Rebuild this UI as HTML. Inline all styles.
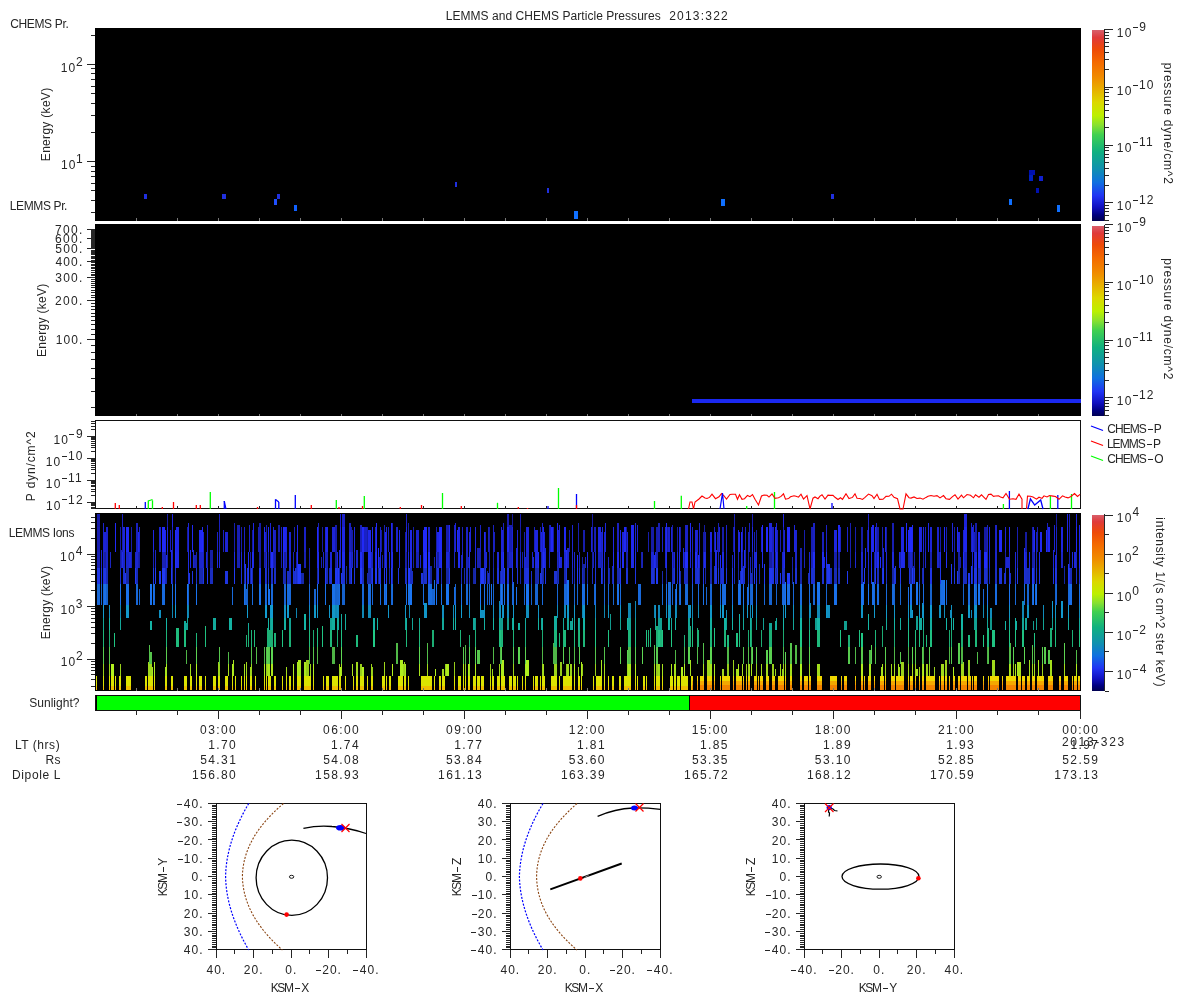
<!DOCTYPE html>
<html><head><meta charset="utf-8"><style>
html,body{margin:0;padding:0;background:#fff;width:1200px;height:1000px;overflow:hidden}
svg{display:block;will-change:transform}
text{font-family:"Liberation Sans",sans-serif}
</style></head><body>
<svg width="1200" height="1000" viewBox="0 0 1200 1000" shape-rendering="crispEdges">
<defs><linearGradient id="cmap" x1="0" y1="0" x2="0" y2="1"><stop offset="0.0" stop-color="#d8606c"/><stop offset="0.04" stop-color="#e03a3a"/><stop offset="0.1" stop-color="#ee4a08"/><stop offset="0.17" stop-color="#f46a00"/><stop offset="0.25" stop-color="#f08c00"/><stop offset="0.31" stop-color="#e8ae00"/><stop offset="0.38" stop-color="#dcd800"/><stop offset="0.45" stop-color="#bcf000"/><stop offset="0.5" stop-color="#88e030"/><stop offset="0.55" stop-color="#40d050"/><stop offset="0.64" stop-color="#10b080"/><stop offset="0.73" stop-color="#1090b0"/><stop offset="0.8" stop-color="#1070e0"/><stop offset="0.87" stop-color="#2034f4"/><stop offset="0.93" stop-color="#1010c0"/><stop offset="0.97" stop-color="#000080"/><stop offset="1.0" stop-color="#000050"/></linearGradient></defs>
<text x="445.72" y="19.70" font-size="12" fill="#262626" letter-spacing="0.046">LEMMS and CHEMS Particle Pressures</text>
<text x="669.20" y="19.70" font-size="12" fill="#262626" letter-spacing="1.208">2013:322</text>
<text x="10.19" y="27.90" font-size="12" fill="#262626" letter-spacing="-0.350">CHEMS Pr.</text>
<text x="9.72" y="209.80" font-size="12" fill="#262626" letter-spacing="-0.370">LEMMS Pr.</text>
<text x="8.72" y="536.80" font-size="12" fill="#262626" letter-spacing="-0.330">LEMMS Ions</text>
<text x="29.21" y="706.90" font-size="12" fill="#262626" letter-spacing="0.025">Sunlight?</text>
<rect x="95.00" y="28.00" width="985.50" height="192.50" fill="#000" />
<line x1="91.00" y1="212.37" x2="95.00" y2="212.37" stroke="#262626" stroke-width="1" />
<line x1="91.00" y1="200.24" x2="95.00" y2="200.24" stroke="#262626" stroke-width="1" />
<line x1="91.00" y1="190.83" x2="95.00" y2="190.83" stroke="#262626" stroke-width="1" />
<line x1="91.00" y1="183.14" x2="95.00" y2="183.14" stroke="#262626" stroke-width="1" />
<line x1="91.00" y1="176.64" x2="95.00" y2="176.64" stroke="#262626" stroke-width="1" />
<line x1="91.00" y1="171.01" x2="95.00" y2="171.01" stroke="#262626" stroke-width="1" />
<line x1="91.00" y1="166.04" x2="95.00" y2="166.04" stroke="#262626" stroke-width="1" />
<line x1="91.00" y1="132.37" x2="95.00" y2="132.37" stroke="#262626" stroke-width="1" />
<line x1="91.00" y1="115.27" x2="95.00" y2="115.27" stroke="#262626" stroke-width="1" />
<line x1="91.00" y1="103.14" x2="95.00" y2="103.14" stroke="#262626" stroke-width="1" />
<line x1="91.00" y1="93.73" x2="95.00" y2="93.73" stroke="#262626" stroke-width="1" />
<line x1="91.00" y1="86.04" x2="95.00" y2="86.04" stroke="#262626" stroke-width="1" />
<line x1="91.00" y1="79.54" x2="95.00" y2="79.54" stroke="#262626" stroke-width="1" />
<line x1="91.00" y1="73.91" x2="95.00" y2="73.91" stroke="#262626" stroke-width="1" />
<line x1="91.00" y1="68.94" x2="95.00" y2="68.94" stroke="#262626" stroke-width="1" />
<line x1="91.00" y1="35.27" x2="95.00" y2="35.27" stroke="#262626" stroke-width="1" />
<line x1="87.00" y1="161.60" x2="95.00" y2="161.60" stroke="#262626" stroke-width="1" />
<line x1="87.00" y1="64.50" x2="95.00" y2="64.50" stroke="#262626" stroke-width="1" />
<text x="60.70" y="71.80" font-size="12" fill="#262626" letter-spacing="1.200">10</text>
<text x="75.93" y="65.75" font-size="12" fill="#262626">2</text>
<text x="61.00" y="168.90" font-size="12" fill="#262626" letter-spacing="1.200">10</text>
<text x="75.91" y="162.85" font-size="12" fill="#262626">1</text>
<text transform="translate(49.60,124.40) rotate(-90)" x="-36.78" y="0" font-size="12" fill="#262626" letter-spacing="0.300">Energy (keV)</text>
<rect x="143.90" y="193.80" width="3.00" height="5.00" fill="#2030e0" />
<rect x="221.80" y="193.80" width="4.00" height="5.00" fill="#2030e0" />
<rect x="276.80" y="193.80" width="3.00" height="5.00" fill="#2030e0" />
<rect x="273.50" y="199.00" width="3.00" height="6.00" fill="#2050ff" />
<rect x="293.90" y="205.30" width="3.00" height="6.00" fill="#1060ff" />
<rect x="455.30" y="181.70" width="2.00" height="5.00" fill="#2030e0" />
<rect x="547.30" y="187.50" width="2.00" height="5.00" fill="#2030e0" />
<rect x="574.30" y="211.00" width="4.00" height="8.00" fill="#1070ff" />
<rect x="720.90" y="198.70" width="4.00" height="7.00" fill="#1070ff" />
<rect x="830.70" y="193.90" width="3.00" height="5.00" fill="#2030e0" />
<rect x="1008.90" y="199.20" width="3.00" height="6.00" fill="#1070ff" />
<rect x="1029.00" y="170.00" width="6.00" height="5.00" fill="#0010b0" />
<rect x="1029.00" y="175.00" width="4.00" height="6.00" fill="#0020c0" />
<rect x="1038.80" y="176.10" width="4.00" height="5.00" fill="#1020d0" />
<rect x="1035.90" y="187.90" width="3.00" height="5.00" fill="#0010b0" />
<rect x="1056.80" y="204.80" width="3.00" height="7.00" fill="#1070ff" />
<rect x="95.00" y="224.30" width="985.50" height="192.00" fill="#000" />
<line x1="91.00" y1="407.27" x2="95.00" y2="407.27" stroke="#262626" stroke-width="1" />
<line x1="91.00" y1="391.07" x2="95.00" y2="391.07" stroke="#262626" stroke-width="1" />
<line x1="91.00" y1="378.51" x2="95.00" y2="378.51" stroke="#262626" stroke-width="1" />
<line x1="91.00" y1="368.25" x2="95.00" y2="368.25" stroke="#262626" stroke-width="1" />
<line x1="91.00" y1="359.58" x2="95.00" y2="359.58" stroke="#262626" stroke-width="1" />
<line x1="91.00" y1="352.06" x2="95.00" y2="352.06" stroke="#262626" stroke-width="1" />
<line x1="91.00" y1="345.43" x2="95.00" y2="345.43" stroke="#262626" stroke-width="1" />
<line x1="87.00" y1="339.50" x2="95.00" y2="339.50" stroke="#262626" stroke-width="1" />
<line x1="91.00" y1="334.14" x2="95.00" y2="334.14" stroke="#262626" stroke-width="1" />
<line x1="91.00" y1="329.24" x2="95.00" y2="329.24" stroke="#262626" stroke-width="1" />
<line x1="91.00" y1="324.73" x2="95.00" y2="324.73" stroke="#262626" stroke-width="1" />
<line x1="91.00" y1="320.56" x2="95.00" y2="320.56" stroke="#262626" stroke-width="1" />
<line x1="91.00" y1="316.68" x2="95.00" y2="316.68" stroke="#262626" stroke-width="1" />
<line x1="91.00" y1="313.05" x2="95.00" y2="313.05" stroke="#262626" stroke-width="1" />
<line x1="91.00" y1="309.63" x2="95.00" y2="309.63" stroke="#262626" stroke-width="1" />
<line x1="91.00" y1="306.42" x2="95.00" y2="306.42" stroke="#262626" stroke-width="1" />
<line x1="91.00" y1="303.37" x2="95.00" y2="303.37" stroke="#262626" stroke-width="1" />
<line x1="87.00" y1="300.49" x2="95.00" y2="300.49" stroke="#262626" stroke-width="1" />
<line x1="91.00" y1="297.74" x2="95.00" y2="297.74" stroke="#262626" stroke-width="1" />
<line x1="91.00" y1="295.12" x2="95.00" y2="295.12" stroke="#262626" stroke-width="1" />
<line x1="91.00" y1="292.62" x2="95.00" y2="292.62" stroke="#262626" stroke-width="1" />
<line x1="91.00" y1="290.22" x2="95.00" y2="290.22" stroke="#262626" stroke-width="1" />
<line x1="91.00" y1="287.93" x2="95.00" y2="287.93" stroke="#262626" stroke-width="1" />
<line x1="91.00" y1="285.72" x2="95.00" y2="285.72" stroke="#262626" stroke-width="1" />
<line x1="91.00" y1="283.60" x2="95.00" y2="283.60" stroke="#262626" stroke-width="1" />
<line x1="91.00" y1="281.55" x2="95.00" y2="281.55" stroke="#262626" stroke-width="1" />
<line x1="91.00" y1="279.57" x2="95.00" y2="279.57" stroke="#262626" stroke-width="1" />
<line x1="87.00" y1="277.67" x2="95.00" y2="277.67" stroke="#262626" stroke-width="1" />
<line x1="91.00" y1="275.82" x2="95.00" y2="275.82" stroke="#262626" stroke-width="1" />
<line x1="91.00" y1="274.03" x2="95.00" y2="274.03" stroke="#262626" stroke-width="1" />
<line x1="91.00" y1="272.30" x2="95.00" y2="272.30" stroke="#262626" stroke-width="1" />
<line x1="91.00" y1="270.62" x2="95.00" y2="270.62" stroke="#262626" stroke-width="1" />
<line x1="91.00" y1="268.99" x2="95.00" y2="268.99" stroke="#262626" stroke-width="1" />
<line x1="91.00" y1="267.40" x2="95.00" y2="267.40" stroke="#262626" stroke-width="1" />
<line x1="91.00" y1="265.86" x2="95.00" y2="265.86" stroke="#262626" stroke-width="1" />
<line x1="91.00" y1="264.36" x2="95.00" y2="264.36" stroke="#262626" stroke-width="1" />
<line x1="91.00" y1="262.90" x2="95.00" y2="262.90" stroke="#262626" stroke-width="1" />
<line x1="87.00" y1="261.47" x2="95.00" y2="261.47" stroke="#262626" stroke-width="1" />
<line x1="91.00" y1="260.08" x2="95.00" y2="260.08" stroke="#262626" stroke-width="1" />
<line x1="91.00" y1="258.73" x2="95.00" y2="258.73" stroke="#262626" stroke-width="1" />
<line x1="91.00" y1="257.40" x2="95.00" y2="257.40" stroke="#262626" stroke-width="1" />
<line x1="91.00" y1="256.11" x2="95.00" y2="256.11" stroke="#262626" stroke-width="1" />
<line x1="91.00" y1="254.84" x2="95.00" y2="254.84" stroke="#262626" stroke-width="1" />
<line x1="91.00" y1="253.61" x2="95.00" y2="253.61" stroke="#262626" stroke-width="1" />
<line x1="91.00" y1="252.40" x2="95.00" y2="252.40" stroke="#262626" stroke-width="1" />
<line x1="91.00" y1="251.21" x2="95.00" y2="251.21" stroke="#262626" stroke-width="1" />
<line x1="91.00" y1="250.05" x2="95.00" y2="250.05" stroke="#262626" stroke-width="1" />
<line x1="87.00" y1="248.91" x2="95.00" y2="248.91" stroke="#262626" stroke-width="1" />
<line x1="91.00" y1="247.80" x2="95.00" y2="247.80" stroke="#262626" stroke-width="1" />
<line x1="91.00" y1="246.71" x2="95.00" y2="246.71" stroke="#262626" stroke-width="1" />
<line x1="91.00" y1="245.63" x2="95.00" y2="245.63" stroke="#262626" stroke-width="1" />
<line x1="91.00" y1="244.58" x2="95.00" y2="244.58" stroke="#262626" stroke-width="1" />
<line x1="91.00" y1="243.55" x2="95.00" y2="243.55" stroke="#262626" stroke-width="1" />
<line x1="91.00" y1="242.53" x2="95.00" y2="242.53" stroke="#262626" stroke-width="1" />
<line x1="91.00" y1="241.54" x2="95.00" y2="241.54" stroke="#262626" stroke-width="1" />
<line x1="91.00" y1="240.56" x2="95.00" y2="240.56" stroke="#262626" stroke-width="1" />
<line x1="91.00" y1="239.60" x2="95.00" y2="239.60" stroke="#262626" stroke-width="1" />
<line x1="87.00" y1="238.65" x2="95.00" y2="238.65" stroke="#262626" stroke-width="1" />
<line x1="91.00" y1="237.72" x2="95.00" y2="237.72" stroke="#262626" stroke-width="1" />
<line x1="91.00" y1="236.81" x2="95.00" y2="236.81" stroke="#262626" stroke-width="1" />
<line x1="91.00" y1="235.91" x2="95.00" y2="235.91" stroke="#262626" stroke-width="1" />
<line x1="91.00" y1="235.02" x2="95.00" y2="235.02" stroke="#262626" stroke-width="1" />
<line x1="91.00" y1="234.15" x2="95.00" y2="234.15" stroke="#262626" stroke-width="1" />
<line x1="91.00" y1="233.29" x2="95.00" y2="233.29" stroke="#262626" stroke-width="1" />
<line x1="91.00" y1="232.44" x2="95.00" y2="232.44" stroke="#262626" stroke-width="1" />
<line x1="91.00" y1="231.61" x2="95.00" y2="231.61" stroke="#262626" stroke-width="1" />
<line x1="91.00" y1="230.79" x2="95.00" y2="230.79" stroke="#262626" stroke-width="1" />
<line x1="87.00" y1="229.98" x2="95.00" y2="229.98" stroke="#262626" stroke-width="1" />
<text x="55.79" y="343.90" font-size="12" fill="#262626" letter-spacing="1.051">100.</text>
<text x="55.10" y="304.89" font-size="12" fill="#262626" letter-spacing="1.281">200.</text>
<text x="55.24" y="282.07" font-size="12" fill="#262626" letter-spacing="1.232">300.</text>
<text x="55.42" y="265.87" font-size="12" fill="#262626" letter-spacing="1.172">400.</text>
<text x="55.22" y="253.31" font-size="12" fill="#262626" letter-spacing="1.240">500.</text>
<text x="55.09" y="243.05" font-size="12" fill="#262626" letter-spacing="1.283">600.</text>
<text x="55.08" y="234.38" font-size="12" fill="#262626" letter-spacing="1.285">700.</text>
<text transform="translate(46.00,320.30) rotate(-90)" x="-36.78" y="0" font-size="12" fill="#262626" letter-spacing="0.300">Energy (keV)</text>
<rect x="692.00" y="399.00" width="388.50" height="4.00" fill="#1a28f0" />
<rect x="95.50" y="420.80" width="984.50" height="87.90" fill="#fff" stroke="#111" stroke-width="1"/>
<line x1="91.00" y1="508.89" x2="95.00" y2="508.89" stroke="#262626" stroke-width="1" />
<line x1="91.00" y1="507.16" x2="95.00" y2="507.16" stroke="#262626" stroke-width="1" />
<line x1="91.00" y1="505.69" x2="95.00" y2="505.69" stroke="#262626" stroke-width="1" />
<line x1="91.00" y1="504.42" x2="95.00" y2="504.42" stroke="#262626" stroke-width="1" />
<line x1="91.00" y1="503.29" x2="95.00" y2="503.29" stroke="#262626" stroke-width="1" />
<line x1="87.00" y1="502.29" x2="95.00" y2="502.29" stroke="#262626" stroke-width="1" />
<line x1="91.00" y1="495.69" x2="95.00" y2="495.69" stroke="#262626" stroke-width="1" />
<line x1="91.00" y1="491.83" x2="95.00" y2="491.83" stroke="#262626" stroke-width="1" />
<line x1="91.00" y1="489.09" x2="95.00" y2="489.09" stroke="#262626" stroke-width="1" />
<line x1="91.00" y1="486.96" x2="95.00" y2="486.96" stroke="#262626" stroke-width="1" />
<line x1="91.00" y1="485.23" x2="95.00" y2="485.23" stroke="#262626" stroke-width="1" />
<line x1="91.00" y1="483.76" x2="95.00" y2="483.76" stroke="#262626" stroke-width="1" />
<line x1="91.00" y1="482.49" x2="95.00" y2="482.49" stroke="#262626" stroke-width="1" />
<line x1="91.00" y1="481.36" x2="95.00" y2="481.36" stroke="#262626" stroke-width="1" />
<line x1="87.00" y1="480.36" x2="95.00" y2="480.36" stroke="#262626" stroke-width="1" />
<line x1="91.00" y1="473.76" x2="95.00" y2="473.76" stroke="#262626" stroke-width="1" />
<line x1="91.00" y1="469.90" x2="95.00" y2="469.90" stroke="#262626" stroke-width="1" />
<line x1="91.00" y1="467.16" x2="95.00" y2="467.16" stroke="#262626" stroke-width="1" />
<line x1="91.00" y1="465.03" x2="95.00" y2="465.03" stroke="#262626" stroke-width="1" />
<line x1="91.00" y1="463.30" x2="95.00" y2="463.30" stroke="#262626" stroke-width="1" />
<line x1="91.00" y1="461.83" x2="95.00" y2="461.83" stroke="#262626" stroke-width="1" />
<line x1="91.00" y1="460.56" x2="95.00" y2="460.56" stroke="#262626" stroke-width="1" />
<line x1="91.00" y1="459.43" x2="95.00" y2="459.43" stroke="#262626" stroke-width="1" />
<line x1="87.00" y1="458.43" x2="95.00" y2="458.43" stroke="#262626" stroke-width="1" />
<line x1="91.00" y1="451.83" x2="95.00" y2="451.83" stroke="#262626" stroke-width="1" />
<line x1="91.00" y1="447.97" x2="95.00" y2="447.97" stroke="#262626" stroke-width="1" />
<line x1="91.00" y1="445.23" x2="95.00" y2="445.23" stroke="#262626" stroke-width="1" />
<line x1="91.00" y1="443.10" x2="95.00" y2="443.10" stroke="#262626" stroke-width="1" />
<line x1="91.00" y1="441.37" x2="95.00" y2="441.37" stroke="#262626" stroke-width="1" />
<line x1="91.00" y1="439.90" x2="95.00" y2="439.90" stroke="#262626" stroke-width="1" />
<line x1="91.00" y1="438.63" x2="95.00" y2="438.63" stroke="#262626" stroke-width="1" />
<line x1="91.00" y1="437.50" x2="95.00" y2="437.50" stroke="#262626" stroke-width="1" />
<line x1="87.00" y1="436.50" x2="95.00" y2="436.50" stroke="#262626" stroke-width="1" />
<line x1="91.00" y1="429.90" x2="95.00" y2="429.90" stroke="#262626" stroke-width="1" />
<line x1="91.00" y1="426.04" x2="95.00" y2="426.04" stroke="#262626" stroke-width="1" />
<line x1="91.00" y1="423.30" x2="95.00" y2="423.30" stroke="#262626" stroke-width="1" />
<line x1="91.00" y1="421.17" x2="95.00" y2="421.17" stroke="#262626" stroke-width="1" />
<text x="53.38" y="443.80" font-size="12" fill="#262626" letter-spacing="1.200">10</text>
<rect x="69.21" y="434.00" width="5.00" height="1.00" fill="#262626" />
<text x="75.89" y="437.75" font-size="12" fill="#262626">9</text>
<text x="45.76" y="465.73" font-size="12" fill="#262626" letter-spacing="1.200">10</text>
<rect x="61.59" y="456.00" width="5.00" height="1.00" fill="#262626" />
<text x="67.92" y="459.68" font-size="12" fill="#262626" letter-spacing="1.200">10</text>
<text x="45.87" y="487.66" font-size="12" fill="#262626" letter-spacing="1.200">10</text>
<rect x="61.70" y="478.00" width="5.00" height="1.00" fill="#262626" />
<text x="68.04" y="481.61" font-size="12" fill="#262626" letter-spacing="1.200">11</text>
<text x="45.89" y="509.59" font-size="12" fill="#262626" letter-spacing="1.200">10</text>
<rect x="61.72" y="499.00" width="5.00" height="1.00" fill="#262626" />
<text x="68.06" y="503.54" font-size="12" fill="#262626" letter-spacing="1.200">12</text>
<text transform="translate(35.00,466.00) rotate(-90)" x="-35.23" y="0" font-size="12" fill="#262626" letter-spacing="0.863">P dyn/cm^2</text>
<rect x="95.00" y="513.40" width="985.50" height="177.20" fill="#000" />
<line x1="91.00" y1="686.45" x2="95.00" y2="686.45" stroke="#262626" stroke-width="1" />
<line x1="91.00" y1="679.89" x2="95.00" y2="679.89" stroke="#262626" stroke-width="1" />
<line x1="91.00" y1="674.80" x2="95.00" y2="674.80" stroke="#262626" stroke-width="1" />
<line x1="91.00" y1="670.65" x2="95.00" y2="670.65" stroke="#262626" stroke-width="1" />
<line x1="91.00" y1="667.13" x2="95.00" y2="667.13" stroke="#262626" stroke-width="1" />
<line x1="91.00" y1="664.09" x2="95.00" y2="664.09" stroke="#262626" stroke-width="1" />
<line x1="91.00" y1="661.40" x2="95.00" y2="661.40" stroke="#262626" stroke-width="1" />
<line x1="87.00" y1="659.00" x2="95.00" y2="659.00" stroke="#262626" stroke-width="1" />
<line x1="91.00" y1="643.20" x2="95.00" y2="643.20" stroke="#262626" stroke-width="1" />
<line x1="91.00" y1="633.95" x2="95.00" y2="633.95" stroke="#262626" stroke-width="1" />
<line x1="91.00" y1="627.39" x2="95.00" y2="627.39" stroke="#262626" stroke-width="1" />
<line x1="91.00" y1="622.30" x2="95.00" y2="622.30" stroke="#262626" stroke-width="1" />
<line x1="91.00" y1="618.15" x2="95.00" y2="618.15" stroke="#262626" stroke-width="1" />
<line x1="91.00" y1="614.63" x2="95.00" y2="614.63" stroke="#262626" stroke-width="1" />
<line x1="91.00" y1="611.59" x2="95.00" y2="611.59" stroke="#262626" stroke-width="1" />
<line x1="91.00" y1="608.90" x2="95.00" y2="608.90" stroke="#262626" stroke-width="1" />
<line x1="87.00" y1="606.50" x2="95.00" y2="606.50" stroke="#262626" stroke-width="1" />
<line x1="91.00" y1="590.70" x2="95.00" y2="590.70" stroke="#262626" stroke-width="1" />
<line x1="91.00" y1="581.45" x2="95.00" y2="581.45" stroke="#262626" stroke-width="1" />
<line x1="91.00" y1="574.89" x2="95.00" y2="574.89" stroke="#262626" stroke-width="1" />
<line x1="91.00" y1="569.80" x2="95.00" y2="569.80" stroke="#262626" stroke-width="1" />
<line x1="91.00" y1="565.65" x2="95.00" y2="565.65" stroke="#262626" stroke-width="1" />
<line x1="91.00" y1="562.13" x2="95.00" y2="562.13" stroke="#262626" stroke-width="1" />
<line x1="91.00" y1="559.09" x2="95.00" y2="559.09" stroke="#262626" stroke-width="1" />
<line x1="91.00" y1="556.40" x2="95.00" y2="556.40" stroke="#262626" stroke-width="1" />
<line x1="87.00" y1="554.00" x2="95.00" y2="554.00" stroke="#262626" stroke-width="1" />
<line x1="91.00" y1="538.20" x2="95.00" y2="538.20" stroke="#262626" stroke-width="1" />
<line x1="91.00" y1="528.95" x2="95.00" y2="528.95" stroke="#262626" stroke-width="1" />
<line x1="91.00" y1="522.39" x2="95.00" y2="522.39" stroke="#262626" stroke-width="1" />
<line x1="91.00" y1="517.30" x2="95.00" y2="517.30" stroke="#262626" stroke-width="1" />
<text x="60.70" y="666.30" font-size="12" fill="#262626" letter-spacing="1.200">10</text>
<text x="75.93" y="660.25" font-size="12" fill="#262626">2</text>
<text x="60.48" y="613.80" font-size="12" fill="#262626" letter-spacing="1.200">10</text>
<text x="75.85" y="607.75" font-size="12" fill="#262626">3</text>
<text x="60.12" y="561.30" font-size="12" fill="#262626" letter-spacing="1.200">10</text>
<text x="75.68" y="555.25" font-size="12" fill="#262626">4</text>
<text transform="translate(49.60,602.60) rotate(-90)" x="-36.78" y="0" font-size="12" fill="#262626" letter-spacing="0.300">Energy (keV)</text>
<g><rect x="96" y="675.7" width="1" height="10.4" fill="#dce400"/><rect x="96" y="686.1" width="1" height="4" fill="#f0c000"/><rect x="97" y="513.9" width="3" height="12.8" fill="#161ba7"/><rect x="97" y="526.7" width="3" height="25.0" fill="#181eb1"/><rect x="97" y="551.7" width="3" height="16.6" fill="#1822b7"/><rect x="97" y="568.3" width="3" height="15.7" fill="#1f37e8"/><rect x="97" y="584.0" width="3" height="21.4" fill="#1867d6"/><rect x="101" y="549.7" width="1" height="18.6" fill="#1c27d2"/><rect x="101" y="568.3" width="1" height="15.7" fill="#1e35e2"/><rect x="101" y="584.0" width="1" height="21.4" fill="#1764cf"/><rect x="103" y="522.7" width="1" height="29.0" fill="#1c23ce"/><rect x="103" y="551.7" width="1" height="16.6" fill="#1b25c8"/><rect x="103" y="568.3" width="1" height="15.7" fill="#1d33da"/><rect x="103" y="584.0" width="1" height="21.4" fill="#1766d5"/><rect x="103" y="605.4" width="1" height="12.9" fill="#129cd0"/><rect x="103" y="618.3" width="1" height="12.1" fill="#12a597"/><rect x="103" y="630.4" width="1" height="16.6" fill="#1eb679"/><rect x="103" y="647.0" width="1" height="16.7" fill="#5acd50"/><rect x="103" y="663.7" width="1" height="12.0" fill="#9ad01b"/><rect x="103" y="675.7" width="1" height="10.4" fill="#dce400"/><rect x="103" y="686.1" width="1" height="4" fill="#f0c000"/><rect x="104" y="531.7" width="2" height="20.0" fill="#1d24d5"/><rect x="104" y="551.7" width="2" height="16.6" fill="#161fa8"/><rect x="104" y="568.3" width="2" height="15.7" fill="#1e36e4"/><rect x="104" y="584.0" width="2" height="21.4" fill="#1a70e8"/><rect x="106" y="526.7" width="2" height="25.0" fill="#1b22cc"/><rect x="106" y="551.7" width="2" height="16.6" fill="#1a25c6"/><rect x="106" y="568.3" width="2" height="15.7" fill="#192cb9"/><rect x="106" y="584.0" width="2" height="21.4" fill="#1662cc"/><rect x="109" y="605.4" width="1" height="12.9" fill="#118dbd"/><rect x="109" y="618.3" width="1" height="12.1" fill="#14b7a7"/><rect x="109" y="630.4" width="1" height="16.6" fill="#1cab72"/><rect x="109" y="647.0" width="1" height="16.7" fill="#57c74d"/><rect x="109" y="663.7" width="1" height="12.0" fill="#9bd21b"/><rect x="109" y="675.7" width="1" height="10.4" fill="#dce400"/><rect x="109" y="686.1" width="1" height="4" fill="#f0c000"/><rect x="110" y="551.7" width="1" height="16.6" fill="#1a24c2"/><rect x="111" y="663.7" width="3" height="12.0" fill="#b2f11f"/><rect x="111" y="675.7" width="3" height="10.4" fill="#dce400"/><rect x="111" y="686.1" width="3" height="4" fill="#f0c000"/><rect x="114" y="633.4" width="1" height="13.6" fill="#20c482"/><rect x="115" y="522.7" width="1" height="29.0" fill="#2129f7"/><rect x="115" y="675.7" width="1" height="10.4" fill="#dce400"/><rect x="115" y="686.1" width="1" height="4" fill="#f0c000"/><rect x="119" y="675.7" width="1" height="10.4" fill="#dce400"/><rect x="119" y="686.1" width="1" height="4" fill="#f0c000"/><rect x="120" y="526.7" width="1" height="25.0" fill="#161ba3"/><rect x="120" y="551.7" width="1" height="16.6" fill="#161ea2"/><rect x="120" y="568.3" width="1" height="15.7" fill="#1b30cd"/><rect x="120" y="584.0" width="1" height="21.4" fill="#1a73ee"/><rect x="120" y="605.4" width="1" height="12.9" fill="#1086b2"/><rect x="120" y="618.3" width="1" height="12.1" fill="#13a799"/><rect x="120" y="663.7" width="1" height="12.0" fill="#99d01b"/><rect x="120" y="675.7" width="1" height="10.4" fill="#dce400"/><rect x="120" y="686.1" width="1" height="4" fill="#f0c000"/><rect x="121" y="549.7" width="1" height="18.6" fill="#1923bf"/><rect x="122" y="513.9" width="1" height="12.8" fill="#1a20c3"/><rect x="122" y="526.7" width="1" height="25.0" fill="#181eb3"/><rect x="122" y="551.7" width="1" height="16.6" fill="#1f2bea"/><rect x="123" y="526.7" width="2" height="25.0" fill="#1d25dc"/><rect x="123" y="551.7" width="2" height="16.6" fill="#1b25ca"/><rect x="123" y="568.3" width="2" height="15.7" fill="#1c32d3"/><rect x="125" y="573.3" width="1" height="10.7" fill="#1f37e8"/><rect x="126" y="526.7" width="3" height="25.0" fill="#212af9"/><rect x="126" y="551.7" width="3" height="16.6" fill="#1b26cd"/><rect x="126" y="568.3" width="3" height="15.7" fill="#1627a5"/><rect x="126" y="584.0" width="3" height="21.4" fill="#1a71eb"/><rect x="126" y="605.4" width="3" height="12.9" fill="#1297c9"/><rect x="126" y="675.7" width="3" height="10.4" fill="#dce400"/><rect x="126" y="686.1" width="3" height="4" fill="#f0c000"/><rect x="129" y="551.7" width="2" height="16.6" fill="#1d28d9"/><rect x="129" y="675.7" width="2" height="10.4" fill="#dce400"/><rect x="129" y="686.1" width="2" height="4" fill="#f0c000"/><rect x="131" y="526.7" width="1" height="25.0" fill="#171dab"/><rect x="131" y="551.7" width="1" height="16.6" fill="#1923bc"/><rect x="135" y="551.7" width="1" height="16.6" fill="#1b25c7"/><rect x="135" y="568.3" width="1" height="15.7" fill="#213af7"/><rect x="136" y="522.7" width="2" height="29.0" fill="#1920be"/><rect x="136" y="551.7" width="2" height="16.6" fill="#1c26cf"/><rect x="136" y="568.3" width="2" height="15.7" fill="#182bb6"/><rect x="136" y="584.0" width="2" height="21.4" fill="#1867d6"/><rect x="138" y="531.7" width="1" height="20.0" fill="#2028ee"/><rect x="138" y="551.7" width="1" height="16.6" fill="#1821b2"/><rect x="139" y="526.7" width="1" height="25.0" fill="#1c23cf"/><rect x="139" y="551.7" width="1" height="16.6" fill="#151ea1"/><rect x="139" y="589.0" width="1" height="16.4" fill="#1763ce"/><rect x="145" y="675.7" width="2" height="10.4" fill="#dce400"/><rect x="145" y="686.1" width="2" height="4" fill="#f0c000"/><rect x="148" y="661.7" width="1" height="14.0" fill="#9fd81c"/><rect x="148" y="675.7" width="1" height="10.4" fill="#dce400"/><rect x="148" y="686.1" width="1" height="4" fill="#f0c000"/><rect x="149" y="645.0" width="1" height="18.7" fill="#55c34c"/><rect x="149" y="663.7" width="1" height="12.0" fill="#a0d91c"/><rect x="149" y="675.7" width="1" height="10.4" fill="#dce400"/><rect x="149" y="686.1" width="1" height="4" fill="#f0c000"/><rect x="150" y="584.0" width="2" height="21.4" fill="#1b75f2"/><rect x="150" y="621.3" width="2" height="9.1" fill="#14b4a5"/><rect x="150" y="652.0" width="2" height="11.7" fill="#56c44c"/><rect x="150" y="663.7" width="2" height="12.0" fill="#9fd71c"/><rect x="150" y="675.7" width="2" height="10.4" fill="#dce400"/><rect x="150" y="686.1" width="2" height="4" fill="#f0c000"/><rect x="152" y="666.7" width="1" height="9.0" fill="#abe81e"/><rect x="152" y="675.7" width="1" height="10.4" fill="#dce400"/><rect x="152" y="686.1" width="1" height="4" fill="#f0c000"/><rect x="153" y="529.7" width="1" height="22.0" fill="#1e26e4"/><rect x="153" y="551.7" width="1" height="16.6" fill="#1821b5"/><rect x="153" y="568.3" width="1" height="15.7" fill="#2038ec"/><rect x="153" y="584.0" width="1" height="21.4" fill="#1a70e8"/><rect x="154" y="584.0" width="1" height="21.4" fill="#186adc"/><rect x="154" y="661.7" width="1" height="14.0" fill="#ace91e"/><rect x="154" y="675.7" width="1" height="10.4" fill="#dce400"/><rect x="154" y="686.1" width="1" height="4" fill="#f0c000"/><rect x="155" y="549.7" width="1" height="18.6" fill="#1b25c8"/><rect x="155" y="568.3" width="1" height="15.7" fill="#213af6"/><rect x="159" y="526.7" width="2" height="25.0" fill="#1c23cf"/><rect x="159" y="571.3" width="2" height="12.7" fill="#2039f3"/><rect x="159" y="610.4" width="2" height="7.9" fill="#1190c1"/><rect x="162" y="526.7" width="3" height="25.0" fill="#212af8"/><rect x="162" y="551.7" width="3" height="16.6" fill="#1922b8"/><rect x="162" y="568.3" width="3" height="15.7" fill="#2139f3"/><rect x="162" y="584.0" width="3" height="21.4" fill="#186add"/><rect x="165" y="529.7" width="1" height="22.0" fill="#2028ee"/><rect x="165" y="551.7" width="1" height="16.6" fill="#1720af"/><rect x="165" y="568.3" width="1" height="15.7" fill="#1a2ec4"/><rect x="165" y="666.7" width="1" height="9.0" fill="#a8e31d"/><rect x="165" y="675.7" width="1" height="10.4" fill="#dce400"/><rect x="165" y="686.1" width="1" height="4" fill="#f0c000"/><rect x="166" y="554.7" width="1" height="13.6" fill="#1e2ae3"/><rect x="166" y="568.3" width="1" height="15.7" fill="#182ab2"/><rect x="166" y="618.3" width="1" height="12.1" fill="#14b5a6"/><rect x="166" y="630.4" width="1" height="16.6" fill="#1eb478"/><rect x="166" y="647.0" width="1" height="16.7" fill="#5acd50"/><rect x="166" y="663.7" width="1" height="12.0" fill="#aae71e"/><rect x="166" y="675.7" width="1" height="10.4" fill="#dce400"/><rect x="166" y="686.1" width="1" height="4" fill="#f0c000"/><rect x="167" y="513.9" width="1" height="12.8" fill="#161ba6"/><rect x="167" y="526.7" width="1" height="25.0" fill="#1e25df"/><rect x="167" y="551.7" width="1" height="16.6" fill="#1720b0"/><rect x="170" y="529.7" width="1" height="22.0" fill="#191fb9"/><rect x="171" y="549.7" width="1" height="18.6" fill="#1f2ae6"/><rect x="171" y="568.3" width="1" height="15.7" fill="#2039f2"/><rect x="171" y="675.7" width="1" height="10.4" fill="#dce400"/><rect x="171" y="686.1" width="1" height="4" fill="#f0c000"/><rect x="172" y="513.9" width="1" height="12.8" fill="#1e24e1"/><rect x="172" y="526.7" width="1" height="25.0" fill="#1a20c1"/><rect x="172" y="551.7" width="1" height="16.6" fill="#1a24c6"/><rect x="172" y="568.3" width="1" height="15.7" fill="#1728ab"/><rect x="172" y="584.0" width="1" height="21.4" fill="#196de2"/><rect x="172" y="605.4" width="1" height="12.9" fill="#0f84b0"/><rect x="172" y="675.7" width="1" height="10.4" fill="#dce400"/><rect x="172" y="686.1" width="1" height="4" fill="#f0c000"/><rect x="175" y="529.7" width="1" height="22.0" fill="#222afc"/><rect x="175" y="551.7" width="1" height="16.6" fill="#222ffd"/><rect x="175" y="568.3" width="1" height="15.7" fill="#1c31d0"/><rect x="175" y="584.0" width="1" height="21.4" fill="#1a72ed"/><rect x="175" y="605.4" width="1" height="12.9" fill="#129dd1"/><rect x="176" y="526.7" width="3" height="25.0" fill="#1f27e7"/><rect x="176" y="551.7" width="3" height="16.6" fill="#1f2ae6"/><rect x="176" y="628.4" width="3" height="18.6" fill="#1fbc7d"/><rect x="184" y="621.3" width="2" height="9.1" fill="#13ad9e"/><rect x="184" y="630.4" width="2" height="16.6" fill="#1fbe7f"/><rect x="184" y="675.7" width="2" height="10.4" fill="#dce400"/><rect x="184" y="686.1" width="2" height="4" fill="#f0c000"/><rect x="186" y="623.3" width="1" height="7.1" fill="#12a395"/><rect x="186" y="650.0" width="1" height="13.7" fill="#4fb546"/><rect x="186" y="675.7" width="1" height="10.4" fill="#dce400"/><rect x="186" y="686.1" width="1" height="4" fill="#f0c000"/><rect x="187" y="526.7" width="1" height="25.0" fill="#161ca7"/><rect x="187" y="584.0" width="1" height="21.4" fill="#1b75f4"/><rect x="187" y="605.4" width="1" height="12.9" fill="#118fbf"/><rect x="187" y="618.3" width="1" height="12.1" fill="#12a597"/><rect x="188" y="522.7" width="1" height="29.0" fill="#1d25db"/><rect x="188" y="551.7" width="1" height="16.6" fill="#1e2ae3"/><rect x="188" y="568.3" width="1" height="15.7" fill="#1d32d6"/><rect x="188" y="584.0" width="1" height="21.4" fill="#1766d4"/><rect x="188" y="605.4" width="1" height="12.9" fill="#1086b3"/><rect x="189" y="573.3" width="1" height="10.7" fill="#1f37eb"/><rect x="190" y="549.7" width="1" height="18.6" fill="#1f2bea"/><rect x="190" y="663.7" width="1" height="12.0" fill="#a3dd1c"/><rect x="190" y="675.7" width="1" height="10.4" fill="#dce400"/><rect x="190" y="686.1" width="1" height="4" fill="#f0c000"/><rect x="191" y="675.7" width="1" height="10.4" fill="#dce400"/><rect x="191" y="686.1" width="1" height="4" fill="#f0c000"/><rect x="192" y="524.7" width="1" height="27.0" fill="#2029f2"/><rect x="192" y="571.3" width="1" height="12.7" fill="#1e35e2"/><rect x="193" y="549.7" width="1" height="18.6" fill="#1c27d5"/><rect x="194" y="554.7" width="2" height="13.6" fill="#1821b1"/><rect x="196" y="551.7" width="1" height="16.6" fill="#1821b4"/><rect x="196" y="568.3" width="1" height="15.7" fill="#1b30cc"/><rect x="196" y="584.0" width="1" height="21.4" fill="#1a73ef"/><rect x="196" y="633.4" width="1" height="13.6" fill="#1eb679"/><rect x="196" y="647.0" width="1" height="16.7" fill="#5cd252"/><rect x="196" y="663.7" width="1" height="12.0" fill="#b2f11f"/><rect x="196" y="675.7" width="1" height="10.4" fill="#dce400"/><rect x="196" y="686.1" width="1" height="4" fill="#f0c000"/><rect x="199" y="529.7" width="3" height="22.0" fill="#2129f4"/><rect x="199" y="551.7" width="3" height="16.6" fill="#1b26cd"/><rect x="199" y="568.3" width="3" height="15.7" fill="#1729b0"/><rect x="199" y="675.7" width="3" height="10.4" fill="#dce400"/><rect x="199" y="686.1" width="3" height="4" fill="#f0c000"/><rect x="202" y="526.7" width="1" height="25.0" fill="#222bfe"/><rect x="202" y="551.7" width="1" height="16.6" fill="#1c27d1"/><rect x="202" y="568.3" width="1" height="15.7" fill="#1728ab"/><rect x="203" y="531.7" width="1" height="20.0" fill="#1c23cf"/><rect x="203" y="551.7" width="1" height="16.6" fill="#1a23c0"/><rect x="203" y="568.3" width="1" height="15.7" fill="#1f36e5"/><rect x="205" y="626.4" width="1" height="20.6" fill="#20c080"/><rect x="205" y="675.7" width="1" height="10.4" fill="#dce400"/><rect x="205" y="686.1" width="1" height="4" fill="#f0c000"/><rect x="206" y="551.7" width="1" height="16.6" fill="#1d28d7"/><rect x="207" y="524.7" width="1" height="27.0" fill="#191fb9"/><rect x="207" y="551.7" width="1" height="16.6" fill="#1720ad"/><rect x="207" y="568.3" width="1" height="15.7" fill="#213af7"/><rect x="210" y="549.7" width="3" height="18.6" fill="#161ea3"/><rect x="210" y="568.3" width="3" height="15.7" fill="#1a2dc0"/><rect x="213" y="618.3" width="3" height="12.1" fill="#13ab9c"/><rect x="213" y="675.7" width="3" height="10.4" fill="#dce400"/><rect x="213" y="686.1" width="3" height="4" fill="#f0c000"/><rect x="217" y="531.7" width="1" height="20.0" fill="#1b22c9"/><rect x="217" y="551.7" width="1" height="16.6" fill="#1e2ae2"/><rect x="218" y="661.7" width="1" height="14.0" fill="#9cd31b"/><rect x="218" y="675.7" width="1" height="10.4" fill="#dce400"/><rect x="218" y="686.1" width="1" height="4" fill="#f0c000"/><rect x="219" y="513.9" width="1" height="12.8" fill="#1a1fc0"/><rect x="219" y="526.7" width="1" height="25.0" fill="#191fba"/><rect x="219" y="551.7" width="1" height="16.6" fill="#1e29de"/><rect x="219" y="647.0" width="1" height="16.7" fill="#58c94e"/><rect x="219" y="663.7" width="1" height="12.0" fill="#9bd21b"/><rect x="219" y="675.7" width="1" height="10.4" fill="#dce400"/><rect x="219" y="686.1" width="1" height="4" fill="#f0c000"/><rect x="223" y="529.7" width="1" height="22.0" fill="#1a20c1"/><rect x="225" y="531.7" width="3" height="20.0" fill="#1c23d2"/><rect x="225" y="571.3" width="3" height="12.7" fill="#1e35e0"/><rect x="225" y="675.7" width="3" height="10.4" fill="#dce400"/><rect x="225" y="686.1" width="3" height="4" fill="#f0c000"/><rect x="228" y="652.0" width="1" height="11.7" fill="#51b948"/><rect x="228" y="663.7" width="1" height="12.0" fill="#a6e01d"/><rect x="229" y="618.3" width="3" height="12.1" fill="#14b1a2"/><rect x="232" y="587.0" width="1" height="18.4" fill="#186adb"/><rect x="232" y="663.7" width="1" height="12.0" fill="#b0ee1f"/><rect x="232" y="675.7" width="1" height="10.4" fill="#dce400"/><rect x="232" y="686.1" width="1" height="4" fill="#f0c000"/><rect x="233" y="659.7" width="1" height="16.0" fill="#a8e31d"/><rect x="234" y="522.7" width="1" height="29.0" fill="#171daf"/><rect x="234" y="551.7" width="1" height="16.6" fill="#1f2be9"/><rect x="234" y="568.3" width="1" height="15.7" fill="#213af4"/><rect x="235" y="675.7" width="1" height="10.4" fill="#dce400"/><rect x="235" y="686.1" width="1" height="4" fill="#f0c000"/><rect x="237" y="524.7" width="3" height="27.0" fill="#181eb2"/><rect x="237" y="551.7" width="3" height="16.6" fill="#1821b1"/><rect x="241" y="526.7" width="1" height="25.0" fill="#171dae"/><rect x="241" y="551.7" width="1" height="16.6" fill="#1d29dd"/><rect x="241" y="568.3" width="1" height="15.7" fill="#1c31d1"/><rect x="241" y="675.7" width="1" height="10.4" fill="#dce400"/><rect x="241" y="686.1" width="1" height="4" fill="#f0c000"/><rect x="244" y="526.7" width="1" height="25.0" fill="#1a21c4"/><rect x="244" y="551.7" width="1" height="16.6" fill="#1e29e0"/><rect x="244" y="568.3" width="1" height="15.7" fill="#1728a9"/><rect x="244" y="584.0" width="1" height="21.4" fill="#1a72ed"/><rect x="244" y="663.7" width="1" height="12.0" fill="#a6e11d"/><rect x="244" y="675.7" width="1" height="10.4" fill="#dce400"/><rect x="244" y="686.1" width="1" height="4" fill="#f0c000"/><rect x="245" y="564.3" width="1" height="19.7" fill="#2039f3"/><rect x="245" y="584.0" width="1" height="21.4" fill="#1764cf"/><rect x="246" y="589.0" width="1" height="16.4" fill="#1765d2"/><rect x="246" y="635.4" width="1" height="11.6" fill="#1dae74"/><rect x="246" y="661.7" width="1" height="14.0" fill="#a1d91c"/><rect x="246" y="675.7" width="1" height="10.4" fill="#dce400"/><rect x="246" y="686.1" width="1" height="4" fill="#f0c000"/><rect x="247" y="568.3" width="1" height="15.7" fill="#1d33d7"/><rect x="247" y="584.0" width="1" height="21.4" fill="#1662cd"/><rect x="247" y="605.4" width="1" height="12.9" fill="#129dd2"/><rect x="248" y="551.7" width="1" height="16.6" fill="#212ef9"/><rect x="248" y="568.3" width="1" height="15.7" fill="#2139f3"/><rect x="248" y="623.3" width="1" height="7.1" fill="#13ab9c"/><rect x="248" y="630.4" width="1" height="16.6" fill="#1db277"/><rect x="249" y="524.7" width="1" height="27.0" fill="#1b22c8"/><rect x="250" y="551.7" width="1" height="16.6" fill="#161ea4"/><rect x="250" y="568.3" width="1" height="15.7" fill="#1729af"/><rect x="250" y="666.7" width="1" height="9.0" fill="#9fd71c"/><rect x="250" y="675.7" width="1" height="10.4" fill="#dce400"/><rect x="250" y="686.1" width="1" height="4" fill="#f0c000"/><rect x="251" y="568.3" width="1" height="15.7" fill="#2038ec"/><rect x="251" y="630.4" width="1" height="16.6" fill="#1eb579"/><rect x="251" y="647.0" width="1" height="16.7" fill="#53be4a"/><rect x="251" y="663.7" width="1" height="12.0" fill="#9cd31b"/><rect x="251" y="675.7" width="1" height="10.4" fill="#dce400"/><rect x="251" y="686.1" width="1" height="4" fill="#f0c000"/><rect x="252" y="529.7" width="1" height="22.0" fill="#151ba2"/><rect x="252" y="551.7" width="1" height="16.6" fill="#202df1"/><rect x="252" y="568.3" width="1" height="15.7" fill="#192cbb"/><rect x="252" y="584.0" width="1" height="21.4" fill="#186adc"/><rect x="253" y="522.7" width="1" height="29.0" fill="#1e26e4"/><rect x="253" y="551.7" width="1" height="16.6" fill="#1f2be9"/><rect x="254" y="630.4" width="1" height="16.6" fill="#1fbb7c"/><rect x="255" y="675.7" width="1" height="10.4" fill="#dce400"/><rect x="255" y="686.1" width="1" height="4" fill="#f0c000"/><rect x="256" y="647.0" width="1" height="16.7" fill="#53bd49"/><rect x="258" y="526.7" width="1" height="25.0" fill="#171daf"/><rect x="259" y="522.7" width="2" height="29.0" fill="#161ca9"/><rect x="259" y="551.7" width="2" height="16.6" fill="#151da0"/><rect x="259" y="568.3" width="2" height="15.7" fill="#213bf9"/><rect x="259" y="584.0" width="2" height="21.4" fill="#1a73ef"/><rect x="264" y="526.7" width="1" height="25.0" fill="#2129f5"/><rect x="264" y="551.7" width="1" height="16.6" fill="#1821b1"/><rect x="264" y="647.0" width="1" height="16.7" fill="#50b647"/><rect x="264" y="663.7" width="1" height="12.0" fill="#b0ee1f"/><rect x="264" y="675.7" width="1" height="10.4" fill="#dce400"/><rect x="264" y="686.1" width="1" height="4" fill="#f0c000"/><rect x="265" y="531.7" width="1" height="20.0" fill="#1b22c9"/><rect x="265" y="551.7" width="1" height="16.6" fill="#151da0"/><rect x="265" y="568.3" width="1" height="15.7" fill="#1d34dd"/><rect x="265" y="584.0" width="1" height="21.4" fill="#196ce1"/><rect x="265" y="605.4" width="1" height="12.9" fill="#129dd1"/><rect x="266" y="524.7" width="1" height="27.0" fill="#161ca7"/><rect x="266" y="551.7" width="1" height="16.6" fill="#1d28d8"/><rect x="266" y="568.3" width="1" height="15.7" fill="#1a2dc0"/><rect x="266" y="584.0" width="1" height="21.4" fill="#1765d1"/><rect x="266" y="605.4" width="1" height="12.9" fill="#129cd1"/><rect x="266" y="647.0" width="1" height="16.7" fill="#55c24b"/><rect x="266" y="663.7" width="1" height="12.0" fill="#9ad11b"/><rect x="266" y="675.7" width="1" height="10.4" fill="#dce400"/><rect x="266" y="686.1" width="1" height="4" fill="#f0c000"/><rect x="267" y="628.4" width="1" height="18.6" fill="#1db075"/><rect x="267" y="647.0" width="1" height="16.7" fill="#5dd352"/><rect x="267" y="663.7" width="1" height="12.0" fill="#a2dc1c"/><rect x="268" y="526.7" width="1" height="25.0" fill="#2129f6"/><rect x="268" y="551.7" width="1" height="16.6" fill="#1720b0"/><rect x="268" y="568.3" width="1" height="15.7" fill="#1b30cd"/><rect x="268" y="584.0" width="1" height="21.4" fill="#1b74f1"/><rect x="268" y="618.3" width="1" height="12.1" fill="#14b4a5"/><rect x="268" y="630.4" width="1" height="16.6" fill="#1db176"/><rect x="268" y="647.0" width="1" height="16.7" fill="#59cc4f"/><rect x="268" y="663.7" width="1" height="12.0" fill="#aae61e"/><rect x="268" y="675.7" width="1" height="10.4" fill="#dce400"/><rect x="268" y="686.1" width="1" height="4" fill="#f0c000"/><rect x="269" y="589.0" width="1" height="16.4" fill="#1a73ef"/><rect x="269" y="630.4" width="1" height="16.6" fill="#1db176"/><rect x="269" y="647.0" width="1" height="16.7" fill="#57c74d"/><rect x="269" y="663.7" width="1" height="12.0" fill="#aae61e"/><rect x="269" y="675.7" width="1" height="10.4" fill="#dce400"/><rect x="269" y="686.1" width="1" height="4" fill="#f0c000"/><rect x="270" y="522.7" width="1" height="29.0" fill="#1c24d5"/><rect x="270" y="551.7" width="1" height="16.6" fill="#1822b7"/><rect x="270" y="605.4" width="1" height="12.9" fill="#1298cb"/><rect x="270" y="618.3" width="1" height="12.1" fill="#12a496"/><rect x="270" y="630.4" width="1" height="16.6" fill="#1daf74"/><rect x="270" y="675.7" width="1" height="10.4" fill="#dce400"/><rect x="270" y="686.1" width="1" height="4" fill="#f0c000"/><rect x="271" y="551.7" width="2" height="16.6" fill="#212ef9"/><rect x="271" y="568.3" width="2" height="15.7" fill="#1b2fc9"/><rect x="271" y="584.0" width="2" height="21.4" fill="#1868d9"/><rect x="271" y="605.4" width="2" height="12.9" fill="#129cd1"/><rect x="271" y="618.3" width="2" height="12.1" fill="#13ae9f"/><rect x="271" y="630.4" width="2" height="16.6" fill="#1daf74"/><rect x="271" y="647.0" width="2" height="16.7" fill="#5dd553"/><rect x="271" y="663.7" width="2" height="12.0" fill="#aae61e"/><rect x="273" y="526.7" width="1" height="25.0" fill="#1d24d6"/><rect x="273" y="551.7" width="1" height="16.6" fill="#1923bc"/><rect x="274" y="529.7" width="2" height="22.0" fill="#1a21c2"/><rect x="274" y="551.7" width="2" height="16.6" fill="#1720af"/><rect x="274" y="568.3" width="2" height="15.7" fill="#1a2ec5"/><rect x="274" y="633.4" width="2" height="13.6" fill="#1db377"/><rect x="274" y="675.7" width="2" height="10.4" fill="#dce400"/><rect x="274" y="686.1" width="2" height="4" fill="#f0c000"/><rect x="278" y="524.7" width="2" height="27.0" fill="#161ca5"/><rect x="281" y="526.7" width="1" height="25.0" fill="#1a20c1"/><rect x="281" y="551.7" width="1" height="16.6" fill="#1720ad"/><rect x="282" y="630.4" width="1" height="16.6" fill="#20c583"/><rect x="282" y="675.7" width="1" height="10.4" fill="#dce400"/><rect x="282" y="686.1" width="1" height="4" fill="#f0c000"/><rect x="283" y="526.7" width="1" height="25.0" fill="#212af9"/><rect x="283" y="551.7" width="1" height="16.6" fill="#212df4"/><rect x="283" y="568.3" width="1" height="15.7" fill="#182bb7"/><rect x="284" y="526.7" width="2" height="25.0" fill="#1f27ea"/><rect x="284" y="551.7" width="2" height="16.6" fill="#161ea2"/><rect x="284" y="568.3" width="2" height="15.7" fill="#182ab1"/><rect x="284" y="584.0" width="2" height="21.4" fill="#1767d5"/><rect x="284" y="605.4" width="2" height="12.9" fill="#1194c6"/><rect x="284" y="618.3" width="2" height="12.1" fill="#14b1a2"/><rect x="286" y="526.7" width="1" height="25.0" fill="#1e25dd"/><rect x="286" y="551.7" width="1" height="16.6" fill="#1b25c9"/><rect x="286" y="666.7" width="1" height="9.0" fill="#a2dc1c"/><rect x="286" y="675.7" width="1" height="10.4" fill="#dce400"/><rect x="286" y="686.1" width="1" height="4" fill="#f0c000"/><rect x="287" y="571.3" width="2" height="12.7" fill="#1a2ec3"/><rect x="287" y="584.0" width="2" height="21.4" fill="#186bdd"/><rect x="287" y="605.4" width="2" height="12.9" fill="#129bcf"/><rect x="289" y="531.7" width="2" height="20.0" fill="#1c24d5"/><rect x="289" y="551.7" width="2" height="16.6" fill="#1e29dd"/><rect x="289" y="568.3" width="2" height="15.7" fill="#192dbf"/><rect x="289" y="584.0" width="2" height="21.4" fill="#1869da"/><rect x="289" y="618.3" width="2" height="12.1" fill="#12a294"/><rect x="289" y="630.4" width="2" height="16.6" fill="#1db176"/><rect x="289" y="675.7" width="2" height="10.4" fill="#dce400"/><rect x="289" y="686.1" width="2" height="4" fill="#f0c000"/><rect x="293" y="551.7" width="1" height="16.6" fill="#1922b9"/><rect x="293" y="568.3" width="1" height="15.7" fill="#1d33db"/><rect x="293" y="663.7" width="1" height="12.0" fill="#b0ee1f"/><rect x="293" y="675.7" width="1" height="10.4" fill="#dce400"/><rect x="293" y="686.1" width="1" height="4" fill="#f0c000"/><rect x="294" y="526.7" width="1" height="25.0" fill="#181eb4"/><rect x="294" y="571.3" width="1" height="12.7" fill="#1b30ca"/><rect x="295" y="568.3" width="1" height="15.7" fill="#1d33d9"/><rect x="296" y="551.7" width="1" height="16.6" fill="#161fa7"/><rect x="296" y="568.3" width="1" height="15.7" fill="#1a2ec4"/><rect x="296" y="608.4" width="1" height="9.9" fill="#0f84b0"/><rect x="297" y="524.7" width="1" height="27.0" fill="#1f27e8"/><rect x="297" y="551.7" width="1" height="16.6" fill="#212df5"/><rect x="297" y="568.3" width="1" height="15.7" fill="#1e35e2"/><rect x="297" y="661.7" width="1" height="14.0" fill="#adeb1e"/><rect x="297" y="675.7" width="1" height="10.4" fill="#dce400"/><rect x="297" y="686.1" width="1" height="4" fill="#f0c000"/><rect x="298" y="564.3" width="3" height="19.7" fill="#223cfe"/><rect x="298" y="659.7" width="3" height="16.0" fill="#aae71e"/><rect x="298" y="675.7" width="3" height="10.4" fill="#dce400"/><rect x="298" y="686.1" width="3" height="4" fill="#f0c000"/><rect x="301" y="573.3" width="3" height="10.7" fill="#1728aa"/><rect x="304" y="526.7" width="2" height="25.0" fill="#1a21c6"/><rect x="304" y="551.7" width="2" height="16.6" fill="#1821b4"/><rect x="304" y="614.3" width="2" height="16.1" fill="#14b7a7"/><rect x="304" y="661.7" width="2" height="14.0" fill="#ace91e"/><rect x="304" y="675.7" width="2" height="10.4" fill="#dce400"/><rect x="304" y="686.1" width="2" height="4" fill="#f0c000"/><rect x="306" y="659.7" width="3" height="16.0" fill="#98cd1a"/><rect x="306" y="675.7" width="3" height="10.4" fill="#dce400"/><rect x="306" y="686.1" width="3" height="4" fill="#f0c000"/><rect x="309" y="547.7" width="1" height="20.6" fill="#161fa8"/><rect x="309" y="568.3" width="1" height="15.7" fill="#1728ac"/><rect x="309" y="584.0" width="1" height="21.4" fill="#186add"/><rect x="309" y="605.4" width="1" height="12.9" fill="#118fbf"/><rect x="309" y="618.3" width="1" height="12.1" fill="#13ae9f"/><rect x="309" y="630.4" width="1" height="16.6" fill="#1fbd7e"/><rect x="309" y="647.0" width="1" height="16.7" fill="#4fb546"/><rect x="309" y="675.7" width="1" height="10.4" fill="#dce400"/><rect x="309" y="686.1" width="1" height="4" fill="#f0c000"/><rect x="310" y="663.7" width="1" height="12.0" fill="#9cd31b"/><rect x="310" y="675.7" width="1" height="10.4" fill="#dce400"/><rect x="310" y="686.1" width="1" height="4" fill="#f0c000"/><rect x="313" y="630.4" width="1" height="16.6" fill="#1ca970"/><rect x="313" y="647.0" width="1" height="16.7" fill="#56c44c"/><rect x="313" y="663.7" width="1" height="12.0" fill="#b2f11f"/><rect x="313" y="675.7" width="1" height="10.4" fill="#dce400"/><rect x="313" y="686.1" width="1" height="4" fill="#f0c000"/><rect x="314" y="589.0" width="2" height="16.4" fill="#1765d1"/><rect x="314" y="605.4" width="2" height="12.9" fill="#1298cb"/><rect x="317" y="526.7" width="1" height="25.0" fill="#222bfe"/><rect x="317" y="551.7" width="1" height="16.6" fill="#1e2ae3"/><rect x="317" y="568.3" width="1" height="15.7" fill="#1728aa"/><rect x="317" y="584.0" width="1" height="21.4" fill="#1a73ef"/><rect x="317" y="605.4" width="1" height="12.9" fill="#1298cb"/><rect x="317" y="628.4" width="1" height="18.6" fill="#1fbe7f"/><rect x="317" y="647.0" width="1" height="16.7" fill="#50b747"/><rect x="318" y="522.7" width="1" height="29.0" fill="#1920bd"/><rect x="318" y="551.7" width="1" height="16.6" fill="#202cf0"/><rect x="318" y="568.3" width="1" height="15.7" fill="#1f36e5"/><rect x="321" y="556.7" width="1" height="11.6" fill="#1922ba"/><rect x="322" y="526.7" width="1" height="25.0" fill="#161ba3"/><rect x="322" y="626.4" width="1" height="20.6" fill="#20c583"/><rect x="323" y="551.7" width="1" height="16.6" fill="#1b26cd"/><rect x="323" y="675.7" width="1" height="10.4" fill="#dce400"/><rect x="323" y="686.1" width="1" height="4" fill="#f0c000"/><rect x="325" y="526.7" width="1" height="25.0" fill="#1d24d8"/><rect x="325" y="551.7" width="1" height="16.6" fill="#1821b5"/><rect x="325" y="568.3" width="1" height="15.7" fill="#223cfe"/><rect x="325" y="584.0" width="1" height="21.4" fill="#1a72ec"/><rect x="326" y="526.7" width="2" height="25.0" fill="#2028ee"/><rect x="326" y="551.7" width="2" height="16.6" fill="#1822b8"/><rect x="326" y="568.3" width="2" height="15.7" fill="#182bb8"/><rect x="326" y="675.7" width="2" height="10.4" fill="#dce400"/><rect x="326" y="686.1" width="2" height="4" fill="#f0c000"/><rect x="328" y="675.7" width="1" height="10.4" fill="#dce400"/><rect x="328" y="686.1" width="1" height="4" fill="#f0c000"/><rect x="329" y="568.3" width="1" height="15.7" fill="#192dbf"/><rect x="329" y="605.4" width="1" height="12.9" fill="#1299cc"/><rect x="330" y="551.7" width="2" height="16.6" fill="#1d28da"/><rect x="330" y="568.3" width="2" height="15.7" fill="#1d33d9"/><rect x="330" y="618.3" width="2" height="12.1" fill="#12a193"/><rect x="330" y="630.4" width="2" height="16.6" fill="#1eb77a"/><rect x="332" y="526.7" width="3" height="25.0" fill="#1d24d6"/><rect x="332" y="584.0" width="3" height="21.4" fill="#1a71ea"/><rect x="332" y="605.4" width="3" height="12.9" fill="#1297ca"/><rect x="332" y="618.3" width="3" height="12.1" fill="#13ac9d"/><rect x="332" y="647.0" width="3" height="16.7" fill="#4fb446"/><rect x="332" y="675.7" width="3" height="10.4" fill="#dce400"/><rect x="332" y="686.1" width="3" height="4" fill="#f0c000"/><rect x="335" y="524.7" width="2" height="27.0" fill="#171caa"/><rect x="335" y="551.7" width="2" height="16.6" fill="#151ea0"/><rect x="335" y="568.3" width="2" height="15.7" fill="#2039f2"/><rect x="335" y="584.0" width="2" height="21.4" fill="#1764cf"/><rect x="335" y="605.4" width="2" height="12.9" fill="#108ab8"/><rect x="335" y="675.7" width="2" height="10.4" fill="#dce400"/><rect x="335" y="686.1" width="2" height="4" fill="#f0c000"/><rect x="337" y="551.7" width="1" height="16.6" fill="#1f2ae5"/><rect x="337" y="568.3" width="1" height="15.7" fill="#1e35e3"/><rect x="337" y="584.0" width="1" height="21.4" fill="#1766d3"/><rect x="337" y="605.4" width="1" height="12.9" fill="#1192c3"/><rect x="337" y="618.3" width="1" height="12.1" fill="#13ae9f"/><rect x="337" y="630.4" width="1" height="16.6" fill="#1cac72"/><rect x="337" y="675.7" width="1" height="10.4" fill="#dce400"/><rect x="337" y="686.1" width="1" height="4" fill="#f0c000"/><rect x="338" y="568.3" width="1" height="15.7" fill="#223bfb"/><rect x="338" y="584.0" width="1" height="21.4" fill="#1766d5"/><rect x="338" y="605.4" width="1" height="12.9" fill="#118ebe"/><rect x="338" y="618.3" width="1" height="12.1" fill="#13a99b"/><rect x="339" y="549.7" width="1" height="18.6" fill="#1e29dd"/><rect x="339" y="568.3" width="1" height="15.7" fill="#182bb8"/><rect x="339" y="584.0" width="1" height="21.4" fill="#196de2"/><rect x="339" y="663.7" width="1" height="12.0" fill="#9cd31b"/><rect x="339" y="675.7" width="1" height="10.4" fill="#dce400"/><rect x="339" y="686.1" width="1" height="4" fill="#f0c000"/><rect x="340" y="513.9" width="1" height="12.8" fill="#1c22d3"/><rect x="340" y="526.7" width="1" height="25.0" fill="#1e26e2"/><rect x="340" y="551.7" width="1" height="16.6" fill="#1c27d4"/><rect x="340" y="666.7" width="1" height="9.0" fill="#b1f01f"/><rect x="340" y="675.7" width="1" height="10.4" fill="#dce400"/><rect x="340" y="686.1" width="1" height="4" fill="#f0c000"/><rect x="341" y="573.3" width="1" height="10.7" fill="#1f37eb"/><rect x="341" y="614.3" width="1" height="16.1" fill="#13ad9e"/><rect x="341" y="630.4" width="1" height="16.6" fill="#20c181"/><rect x="341" y="647.0" width="1" height="16.7" fill="#5ed754"/><rect x="341" y="663.7" width="1" height="12.0" fill="#a8e31d"/><rect x="342" y="513.9" width="3" height="12.8" fill="#1b20c6"/><rect x="342" y="526.7" width="3" height="25.0" fill="#1f26e5"/><rect x="342" y="551.7" width="3" height="16.6" fill="#202cf0"/><rect x="342" y="568.3" width="3" height="15.7" fill="#1c32d2"/><rect x="342" y="584.0" width="3" height="21.4" fill="#1662cd"/><rect x="345" y="614.3" width="1" height="16.1" fill="#13ac9d"/><rect x="345" y="675.7" width="1" height="10.4" fill="#dce400"/><rect x="345" y="686.1" width="1" height="4" fill="#f0c000"/><rect x="346" y="566.3" width="1" height="17.7" fill="#1627a4"/><rect x="349" y="522.7" width="2" height="29.0" fill="#1920be"/><rect x="349" y="551.7" width="2" height="16.6" fill="#1e29e0"/><rect x="349" y="568.3" width="2" height="15.7" fill="#192cbc"/><rect x="351" y="526.7" width="1" height="25.0" fill="#171db0"/><rect x="351" y="551.7" width="1" height="16.6" fill="#1923bf"/><rect x="351" y="568.3" width="1" height="15.7" fill="#213bfa"/><rect x="352" y="529.7" width="1" height="22.0" fill="#171ca9"/><rect x="352" y="551.7" width="1" height="16.6" fill="#1c27d4"/><rect x="352" y="663.7" width="1" height="12.0" fill="#aae61e"/><rect x="353" y="675.7" width="1" height="10.4" fill="#dce400"/><rect x="353" y="686.1" width="1" height="4" fill="#f0c000"/><rect x="354" y="526.7" width="1" height="25.0" fill="#1d25dc"/><rect x="354" y="551.7" width="1" height="16.6" fill="#161ea4"/><rect x="354" y="568.3" width="1" height="15.7" fill="#1d34db"/><rect x="356" y="549.7" width="2" height="18.6" fill="#1a24c5"/><rect x="356" y="635.4" width="2" height="11.6" fill="#1fbb7d"/><rect x="356" y="661.7" width="2" height="14.0" fill="#a1d91c"/><rect x="356" y="675.7" width="2" height="10.4" fill="#dce400"/><rect x="356" y="686.1" width="2" height="4" fill="#f0c000"/><rect x="360" y="524.7" width="2" height="27.0" fill="#191fb8"/><rect x="360" y="551.7" width="2" height="16.6" fill="#212ef7"/><rect x="360" y="568.3" width="2" height="15.7" fill="#223cfd"/><rect x="360" y="663.7" width="2" height="12.0" fill="#99cf1b"/><rect x="360" y="675.7" width="2" height="10.4" fill="#dce400"/><rect x="360" y="686.1" width="2" height="4" fill="#f0c000"/><rect x="362" y="526.7" width="2" height="25.0" fill="#2129f7"/><rect x="362" y="551.7" width="2" height="16.6" fill="#1a24c3"/><rect x="362" y="568.3" width="2" height="15.7" fill="#192dbe"/><rect x="362" y="584.0" width="2" height="21.4" fill="#1767d6"/><rect x="362" y="605.4" width="2" height="12.9" fill="#1087b4"/><rect x="362" y="666.7" width="2" height="9.0" fill="#b3f21f"/><rect x="362" y="675.7" width="2" height="10.4" fill="#dce400"/><rect x="362" y="686.1" width="2" height="4" fill="#f0c000"/><rect x="364" y="526.7" width="3" height="25.0" fill="#1a21c6"/><rect x="367" y="526.7" width="1" height="25.0" fill="#171dad"/><rect x="367" y="573.3" width="1" height="10.7" fill="#1728ac"/><rect x="367" y="675.7" width="1" height="10.4" fill="#dce400"/><rect x="367" y="686.1" width="1" height="4" fill="#f0c000"/><rect x="368" y="529.7" width="3" height="22.0" fill="#1f27ea"/><rect x="368" y="551.7" width="3" height="16.6" fill="#202df1"/><rect x="368" y="568.3" width="3" height="15.7" fill="#1626a3"/><rect x="368" y="584.0" width="3" height="21.4" fill="#196ce1"/><rect x="368" y="605.4" width="3" height="12.9" fill="#108bb9"/><rect x="371" y="551.7" width="1" height="16.6" fill="#1b25c7"/><rect x="371" y="568.3" width="1" height="15.7" fill="#1c32d4"/><rect x="371" y="663.7" width="1" height="12.0" fill="#9ed61c"/><rect x="371" y="675.7" width="1" height="10.4" fill="#dce400"/><rect x="371" y="686.1" width="1" height="4" fill="#f0c000"/><rect x="372" y="526.7" width="1" height="25.0" fill="#2028ef"/><rect x="372" y="551.7" width="1" height="16.6" fill="#1a24c1"/><rect x="372" y="568.3" width="1" height="15.7" fill="#213af5"/><rect x="372" y="584.0" width="1" height="21.4" fill="#1767d5"/><rect x="372" y="666.7" width="1" height="9.0" fill="#97cd1a"/><rect x="372" y="675.7" width="1" height="10.4" fill="#dce400"/><rect x="372" y="686.1" width="1" height="4" fill="#f0c000"/><rect x="373" y="618.3" width="2" height="12.1" fill="#14b2a3"/><rect x="373" y="630.4" width="2" height="16.6" fill="#21cb87"/><rect x="375" y="526.7" width="1" height="25.0" fill="#1b22cb"/><rect x="375" y="551.7" width="1" height="16.6" fill="#1f2beb"/><rect x="375" y="568.3" width="1" height="15.7" fill="#213af7"/><rect x="376" y="522.7" width="1" height="29.0" fill="#222afa"/><rect x="376" y="551.7" width="1" height="16.6" fill="#222efb"/><rect x="376" y="568.3" width="1" height="15.7" fill="#213af7"/><rect x="377" y="618.3" width="1" height="12.1" fill="#14b2a3"/><rect x="378" y="547.7" width="1" height="20.6" fill="#222ffc"/><rect x="378" y="568.3" width="1" height="15.7" fill="#1627a6"/><rect x="379" y="556.7" width="1" height="11.6" fill="#1821b4"/><rect x="379" y="568.3" width="1" height="15.7" fill="#1f36e5"/><rect x="380" y="526.7" width="1" height="25.0" fill="#1b22cb"/><rect x="380" y="551.7" width="1" height="16.6" fill="#1d29dd"/><rect x="380" y="568.3" width="1" height="15.7" fill="#1f37e8"/><rect x="380" y="584.0" width="1" height="21.4" fill="#196ce0"/><rect x="381" y="529.7" width="1" height="22.0" fill="#151ba0"/><rect x="382" y="554.7" width="1" height="13.6" fill="#161ea4"/><rect x="382" y="675.7" width="1" height="10.4" fill="#dce400"/><rect x="382" y="686.1" width="1" height="4" fill="#f0c000"/><rect x="383" y="675.7" width="1" height="10.4" fill="#dce400"/><rect x="383" y="686.1" width="1" height="4" fill="#f0c000"/><rect x="384" y="524.7" width="1" height="27.0" fill="#181eb1"/><rect x="384" y="551.7" width="1" height="16.6" fill="#1720ac"/><rect x="384" y="568.3" width="1" height="15.7" fill="#2039f1"/><rect x="384" y="584.0" width="1" height="21.4" fill="#1a72ed"/><rect x="384" y="661.7" width="1" height="14.0" fill="#9ed61b"/><rect x="384" y="675.7" width="1" height="10.4" fill="#dce400"/><rect x="384" y="686.1" width="1" height="4" fill="#f0c000"/><rect x="385" y="531.7" width="1" height="20.0" fill="#2028ef"/><rect x="385" y="551.7" width="1" height="16.6" fill="#202ced"/><rect x="385" y="584.0" width="1" height="21.4" fill="#1763ce"/><rect x="386" y="526.7" width="1" height="25.0" fill="#1e26e1"/><rect x="386" y="551.7" width="1" height="16.6" fill="#1d27d6"/><rect x="386" y="568.3" width="1" height="15.7" fill="#2039f0"/><rect x="386" y="584.0" width="1" height="21.4" fill="#1b75f3"/><rect x="386" y="675.7" width="1" height="10.4" fill="#dce400"/><rect x="386" y="686.1" width="1" height="4" fill="#f0c000"/><rect x="388" y="526.7" width="1" height="25.0" fill="#191fbb"/><rect x="388" y="605.4" width="1" height="12.9" fill="#1296c9"/><rect x="389" y="551.7" width="1" height="16.6" fill="#1e2ae1"/><rect x="389" y="568.3" width="1" height="15.7" fill="#1626a3"/><rect x="389" y="675.7" width="1" height="10.4" fill="#dce400"/><rect x="389" y="686.1" width="1" height="4" fill="#f0c000"/><rect x="390" y="675.7" width="1" height="10.4" fill="#dce400"/><rect x="390" y="686.1" width="1" height="4" fill="#f0c000"/><rect x="391" y="522.7" width="1" height="29.0" fill="#2028ef"/><rect x="391" y="551.7" width="1" height="16.6" fill="#1e29df"/><rect x="391" y="568.3" width="1" height="15.7" fill="#213bfa"/><rect x="391" y="584.0" width="1" height="21.4" fill="#1867d7"/><rect x="392" y="522.7" width="1" height="29.0" fill="#191fb8"/><rect x="392" y="551.7" width="1" height="16.6" fill="#202cef"/><rect x="392" y="568.3" width="1" height="15.7" fill="#1a2ec5"/><rect x="392" y="584.0" width="1" height="21.4" fill="#186add"/><rect x="392" y="663.7" width="1" height="12.0" fill="#b2f21f"/><rect x="396" y="526.7" width="2" height="25.0" fill="#1b22cd"/><rect x="396" y="643.0" width="2" height="20.7" fill="#51ba48"/><rect x="398" y="568.3" width="1" height="15.7" fill="#1e35e2"/><rect x="398" y="675.7" width="1" height="10.4" fill="#dce400"/><rect x="398" y="686.1" width="1" height="4" fill="#f0c000"/><rect x="399" y="529.7" width="1" height="22.0" fill="#2029f3"/><rect x="399" y="551.7" width="1" height="16.6" fill="#1e2ae3"/><rect x="399" y="675.7" width="1" height="10.4" fill="#dce400"/><rect x="399" y="686.1" width="1" height="4" fill="#f0c000"/><rect x="400" y="659.7" width="3" height="16.0" fill="#afee1f"/><rect x="400" y="675.7" width="3" height="10.4" fill="#dce400"/><rect x="400" y="686.1" width="3" height="4" fill="#f0c000"/><rect x="403" y="663.7" width="1" height="12.0" fill="#a1da1c"/><rect x="404" y="661.7" width="1" height="14.0" fill="#9ad11b"/><rect x="404" y="675.7" width="1" height="10.4" fill="#dce400"/><rect x="404" y="686.1" width="1" height="4" fill="#f0c000"/><rect x="405" y="531.7" width="1" height="20.0" fill="#171db0"/><rect x="405" y="551.7" width="1" height="16.6" fill="#1720af"/><rect x="405" y="568.3" width="1" height="15.7" fill="#1b30cc"/><rect x="405" y="605.4" width="1" height="12.9" fill="#1297ca"/><rect x="405" y="618.3" width="1" height="12.1" fill="#13a99a"/><rect x="405" y="663.7" width="1" height="12.0" fill="#abe81e"/><rect x="405" y="675.7" width="1" height="10.4" fill="#dce400"/><rect x="405" y="686.1" width="1" height="4" fill="#f0c000"/><rect x="406" y="513.9" width="1" height="12.8" fill="#1b20c7"/><rect x="406" y="526.7" width="1" height="25.0" fill="#1e26e1"/><rect x="406" y="551.7" width="1" height="16.6" fill="#161ea5"/><rect x="406" y="568.3" width="1" height="15.7" fill="#1a2fc6"/><rect x="406" y="584.0" width="1" height="21.4" fill="#1a70e8"/><rect x="406" y="618.3" width="1" height="12.1" fill="#14b3a3"/><rect x="406" y="630.4" width="1" height="16.6" fill="#1eb97b"/><rect x="408" y="522.7" width="1" height="29.0" fill="#171dab"/><rect x="408" y="551.7" width="1" height="16.6" fill="#1e2ae1"/><rect x="408" y="568.3" width="1" height="15.7" fill="#223cfd"/><rect x="408" y="584.0" width="1" height="21.4" fill="#1a72ec"/><rect x="408" y="675.7" width="1" height="10.4" fill="#dce400"/><rect x="408" y="686.1" width="1" height="4" fill="#f0c000"/><rect x="409" y="568.3" width="1" height="15.7" fill="#223bfc"/><rect x="409" y="584.0" width="1" height="21.4" fill="#1a70e9"/><rect x="409" y="605.4" width="1" height="12.9" fill="#1086b3"/><rect x="410" y="529.7" width="2" height="22.0" fill="#1f27e8"/><rect x="410" y="551.7" width="2" height="16.6" fill="#1f2beb"/><rect x="410" y="568.3" width="2" height="15.7" fill="#1a2ec4"/><rect x="410" y="584.0" width="2" height="21.4" fill="#1b76f4"/><rect x="412" y="571.3" width="1" height="12.7" fill="#1a2fc6"/><rect x="412" y="618.3" width="1" height="12.1" fill="#12a496"/><rect x="413" y="526.7" width="1" height="25.0" fill="#161ca6"/><rect x="413" y="551.7" width="1" height="16.6" fill="#161ea5"/><rect x="416" y="529.7" width="3" height="22.0" fill="#1b22cc"/><rect x="416" y="551.7" width="3" height="16.6" fill="#1821b4"/><rect x="419" y="618.3" width="1" height="12.1" fill="#13a799"/><rect x="419" y="630.4" width="1" height="16.6" fill="#1fba7c"/><rect x="419" y="647.0" width="1" height="16.7" fill="#5ed754"/><rect x="419" y="663.7" width="1" height="12.0" fill="#a9e51d"/><rect x="420" y="554.7" width="1" height="13.6" fill="#1b25c8"/><rect x="421" y="573.3" width="2" height="10.7" fill="#1e34dd"/><rect x="421" y="675.7" width="2" height="10.4" fill="#dce400"/><rect x="421" y="686.1" width="2" height="4" fill="#f0c000"/><rect x="423" y="529.7" width="1" height="22.0" fill="#222afb"/><rect x="423" y="551.7" width="1" height="16.6" fill="#1d28db"/><rect x="423" y="568.3" width="1" height="15.7" fill="#1729ae"/><rect x="423" y="584.0" width="1" height="21.4" fill="#196ee3"/><rect x="423" y="675.7" width="1" height="10.4" fill="#dce400"/><rect x="423" y="686.1" width="1" height="4" fill="#f0c000"/><rect x="424" y="526.7" width="3" height="25.0" fill="#212afa"/><rect x="424" y="551.7" width="3" height="16.6" fill="#222ffe"/><rect x="424" y="568.3" width="3" height="15.7" fill="#1b30cc"/><rect x="424" y="603.4" width="3" height="14.9" fill="#1296c8"/><rect x="424" y="675.7" width="3" height="10.4" fill="#dce400"/><rect x="424" y="686.1" width="3" height="4" fill="#f0c000"/><rect x="427" y="643.0" width="1" height="20.7" fill="#54bf4a"/><rect x="427" y="663.7" width="1" height="12.0" fill="#a3dc1c"/><rect x="427" y="675.7" width="1" height="10.4" fill="#dce400"/><rect x="427" y="686.1" width="1" height="4" fill="#f0c000"/><rect x="428" y="526.7" width="2" height="25.0" fill="#1b22ce"/><rect x="428" y="551.7" width="2" height="16.6" fill="#222efb"/><rect x="428" y="568.3" width="2" height="15.7" fill="#213af5"/><rect x="428" y="584.0" width="2" height="21.4" fill="#196bdf"/><rect x="428" y="675.7" width="2" height="10.4" fill="#dce400"/><rect x="428" y="686.1" width="2" height="4" fill="#f0c000"/><rect x="430" y="566.3" width="2" height="17.7" fill="#1526a1"/><rect x="430" y="584.0" width="2" height="21.4" fill="#186bde"/><rect x="430" y="675.7" width="2" height="10.4" fill="#dce400"/><rect x="430" y="686.1" width="2" height="4" fill="#f0c000"/><rect x="432" y="589.0" width="2" height="16.4" fill="#1763ce"/><rect x="432" y="630.4" width="2" height="16.6" fill="#1cad73"/><rect x="434" y="556.7" width="1" height="11.6" fill="#1720ab"/><rect x="434" y="580.0" width="1" height="25.4" fill="#186bde"/><rect x="434" y="675.7" width="1" height="10.4" fill="#dce400"/><rect x="434" y="686.1" width="1" height="4" fill="#f0c000"/><rect x="435" y="668.7" width="1" height="7.0" fill="#b3f31f"/><rect x="436" y="526.7" width="1" height="25.0" fill="#171dab"/><rect x="436" y="551.7" width="1" height="16.6" fill="#1d28d8"/><rect x="436" y="568.3" width="1" height="15.7" fill="#182ab2"/><rect x="436" y="584.0" width="1" height="21.4" fill="#1b75f4"/><rect x="437" y="531.7" width="2" height="20.0" fill="#1f27e9"/><rect x="437" y="551.7" width="2" height="16.6" fill="#161ea2"/><rect x="437" y="568.3" width="2" height="15.7" fill="#1e35e3"/><rect x="439" y="526.7" width="2" height="25.0" fill="#222afa"/><rect x="439" y="551.7" width="2" height="16.6" fill="#1f2be8"/><rect x="439" y="675.7" width="2" height="10.4" fill="#dce400"/><rect x="439" y="686.1" width="2" height="4" fill="#f0c000"/><rect x="441" y="526.7" width="1" height="25.0" fill="#212af9"/><rect x="441" y="551.7" width="1" height="16.6" fill="#222ffe"/><rect x="441" y="568.3" width="1" height="15.7" fill="#182ab4"/><rect x="441" y="584.0" width="1" height="21.4" fill="#1a71eb"/><rect x="442" y="605.4" width="2" height="12.9" fill="#1190c0"/><rect x="442" y="618.3" width="2" height="12.1" fill="#13a99a"/><rect x="442" y="668.7" width="2" height="7.0" fill="#a0d91c"/><rect x="442" y="675.7" width="2" height="10.4" fill="#dce400"/><rect x="442" y="686.1" width="2" height="4" fill="#f0c000"/><rect x="444" y="675.7" width="1" height="10.4" fill="#dce400"/><rect x="444" y="686.1" width="1" height="4" fill="#f0c000"/><rect x="445" y="663.7" width="1" height="12.0" fill="#96cb1a"/><rect x="446" y="524.7" width="3" height="27.0" fill="#171caa"/><rect x="446" y="551.7" width="3" height="16.6" fill="#1d28d7"/><rect x="446" y="568.3" width="3" height="15.7" fill="#1627a4"/><rect x="446" y="584.0" width="3" height="21.4" fill="#1a74f0"/><rect x="446" y="663.7" width="3" height="12.0" fill="#aeeb1e"/><rect x="449" y="524.7" width="1" height="27.0" fill="#2129f6"/><rect x="449" y="551.7" width="1" height="16.6" fill="#1922bb"/><rect x="449" y="568.3" width="1" height="15.7" fill="#2038ed"/><rect x="453" y="605.4" width="1" height="12.9" fill="#108dbc"/><rect x="453" y="618.3" width="1" height="12.1" fill="#14b0a1"/><rect x="454" y="524.7" width="1" height="27.0" fill="#1a20c0"/><rect x="454" y="551.7" width="1" height="16.6" fill="#1923bc"/><rect x="454" y="587.0" width="1" height="18.4" fill="#196ce0"/><rect x="454" y="661.7" width="1" height="14.0" fill="#96cb1a"/><rect x="454" y="675.7" width="1" height="10.4" fill="#dce400"/><rect x="454" y="686.1" width="1" height="4" fill="#f0c000"/><rect x="455" y="522.7" width="1" height="29.0" fill="#1d24d9"/><rect x="455" y="584.0" width="1" height="21.4" fill="#1764d0"/><rect x="455" y="605.4" width="1" height="12.9" fill="#129dd1"/><rect x="455" y="618.3" width="1" height="12.1" fill="#15b7a8"/><rect x="457" y="529.7" width="1" height="22.0" fill="#212af7"/><rect x="458" y="526.7" width="2" height="25.0" fill="#1e26e1"/><rect x="458" y="551.7" width="2" height="16.6" fill="#212ef7"/><rect x="458" y="675.7" width="2" height="10.4" fill="#dce400"/><rect x="458" y="686.1" width="2" height="4" fill="#f0c000"/><rect x="460" y="630.4" width="1" height="16.6" fill="#1eb578"/><rect x="460" y="675.7" width="1" height="10.4" fill="#dce400"/><rect x="460" y="686.1" width="1" height="4" fill="#f0c000"/><rect x="461" y="554.7" width="1" height="13.6" fill="#1922b9"/><rect x="461" y="568.3" width="1" height="15.7" fill="#192dbe"/><rect x="461" y="584.0" width="1" height="21.4" fill="#1a71eb"/><rect x="461" y="605.4" width="1" height="12.9" fill="#129dd2"/><rect x="462" y="526.7" width="1" height="25.0" fill="#1a21c5"/><rect x="462" y="551.7" width="1" height="16.6" fill="#1d28d9"/><rect x="463" y="647.0" width="1" height="16.7" fill="#59cc4f"/><rect x="463" y="663.7" width="1" height="12.0" fill="#afec1e"/><rect x="463" y="675.7" width="1" height="10.4" fill="#dce400"/><rect x="463" y="686.1" width="1" height="4" fill="#f0c000"/><rect x="464" y="568.3" width="1" height="15.7" fill="#1628a8"/><rect x="465" y="645.0" width="1" height="18.7" fill="#50b747"/><rect x="465" y="663.7" width="1" height="12.0" fill="#98cd1a"/><rect x="465" y="675.7" width="1" height="10.4" fill="#dce400"/><rect x="465" y="686.1" width="1" height="4" fill="#f0c000"/><rect x="466" y="526.7" width="2" height="25.0" fill="#1a21c5"/><rect x="466" y="551.7" width="2" height="16.6" fill="#1923be"/><rect x="466" y="568.3" width="2" height="15.7" fill="#182bb5"/><rect x="466" y="584.0" width="2" height="21.4" fill="#1867d6"/><rect x="468" y="556.7" width="1" height="11.6" fill="#1720ad"/><rect x="468" y="663.7" width="1" height="12.0" fill="#aeeb1e"/><rect x="468" y="675.7" width="1" height="10.4" fill="#dce400"/><rect x="468" y="686.1" width="1" height="4" fill="#f0c000"/><rect x="469" y="531.7" width="1" height="20.0" fill="#1e25dd"/><rect x="469" y="551.7" width="1" height="16.6" fill="#202df2"/><rect x="469" y="568.3" width="1" height="15.7" fill="#192dbe"/><rect x="469" y="584.0" width="1" height="21.4" fill="#186adb"/><rect x="469" y="605.4" width="1" height="12.9" fill="#1191c1"/><rect x="469" y="635.4" width="1" height="11.6" fill="#1daf74"/><rect x="469" y="647.0" width="1" height="16.7" fill="#5dd453"/><rect x="469" y="663.7" width="1" height="12.0" fill="#a7e21d"/><rect x="469" y="675.7" width="1" height="10.4" fill="#dce400"/><rect x="469" y="686.1" width="1" height="4" fill="#f0c000"/><rect x="470" y="526.7" width="1" height="25.0" fill="#1e25de"/><rect x="473" y="568.3" width="2" height="15.7" fill="#1626a3"/><rect x="473" y="618.3" width="2" height="12.1" fill="#13a89a"/><rect x="473" y="675.7" width="2" height="10.4" fill="#dce400"/><rect x="473" y="686.1" width="2" height="4" fill="#f0c000"/><rect x="475" y="526.7" width="1" height="25.0" fill="#1e25dd"/><rect x="475" y="551.7" width="1" height="16.6" fill="#1d28d7"/><rect x="475" y="568.3" width="1" height="15.7" fill="#182bb7"/><rect x="475" y="618.3" width="1" height="12.1" fill="#119b8e"/><rect x="475" y="630.4" width="1" height="16.6" fill="#1db176"/><rect x="475" y="647.0" width="1" height="16.7" fill="#5ed653"/><rect x="475" y="663.7" width="1" height="12.0" fill="#aeec1e"/><rect x="475" y="675.7" width="1" height="10.4" fill="#dce400"/><rect x="475" y="686.1" width="1" height="4" fill="#f0c000"/><rect x="477" y="547.7" width="3" height="20.6" fill="#1821b1"/><rect x="477" y="650.0" width="3" height="13.7" fill="#58ca4e"/><rect x="477" y="675.7" width="3" height="10.4" fill="#dce400"/><rect x="477" y="686.1" width="3" height="4" fill="#f0c000"/><rect x="480" y="524.7" width="1" height="27.0" fill="#1a21c4"/><rect x="480" y="551.7" width="1" height="16.6" fill="#1720ad"/><rect x="480" y="568.3" width="1" height="15.7" fill="#1d33da"/><rect x="480" y="584.0" width="1" height="21.4" fill="#1b76f5"/><rect x="480" y="605.4" width="1" height="12.9" fill="#1298cb"/><rect x="481" y="568.3" width="3" height="15.7" fill="#213af8"/><rect x="481" y="610.4" width="3" height="7.9" fill="#1191c2"/><rect x="481" y="675.7" width="3" height="10.4" fill="#dce400"/><rect x="481" y="686.1" width="3" height="4" fill="#f0c000"/><rect x="484" y="531.7" width="1" height="20.0" fill="#2129f3"/><rect x="484" y="551.7" width="1" height="16.6" fill="#1b25ca"/><rect x="484" y="568.3" width="1" height="15.7" fill="#182bb5"/><rect x="484" y="584.0" width="1" height="21.4" fill="#1a71eb"/><rect x="484" y="605.4" width="1" height="12.9" fill="#1192c2"/><rect x="484" y="618.3" width="1" height="12.1" fill="#14b0a1"/><rect x="485" y="531.7" width="1" height="20.0" fill="#1a20c0"/><rect x="485" y="551.7" width="1" height="16.6" fill="#1b26cc"/><rect x="485" y="568.3" width="1" height="15.7" fill="#1f36e6"/><rect x="486" y="551.7" width="1" height="16.6" fill="#1c27d4"/><rect x="487" y="571.3" width="1" height="12.7" fill="#1626a4"/><rect x="487" y="584.0" width="1" height="21.4" fill="#1763cd"/><rect x="488" y="526.7" width="1" height="25.0" fill="#191fba"/><rect x="488" y="573.3" width="1" height="10.7" fill="#1b2fc9"/><rect x="489" y="526.7" width="1" height="25.0" fill="#161ca8"/><rect x="489" y="551.7" width="1" height="16.6" fill="#151ea1"/><rect x="489" y="568.3" width="1" height="15.7" fill="#1628a8"/><rect x="489" y="584.0" width="1" height="21.4" fill="#1764cf"/><rect x="490" y="663.7" width="1" height="12.0" fill="#96cb1a"/><rect x="490" y="675.7" width="1" height="10.4" fill="#dce400"/><rect x="490" y="686.1" width="1" height="4" fill="#f0c000"/><rect x="491" y="584.0" width="1" height="21.4" fill="#1a72ed"/><rect x="492" y="668.7" width="1" height="7.0" fill="#a0d91c"/><rect x="492" y="675.7" width="1" height="10.4" fill="#dce400"/><rect x="492" y="686.1" width="1" height="4" fill="#f0c000"/><rect x="493" y="524.7" width="1" height="27.0" fill="#1a21c4"/><rect x="493" y="551.7" width="1" height="16.6" fill="#161ea4"/><rect x="493" y="568.3" width="1" height="15.7" fill="#182ab1"/><rect x="493" y="584.0" width="1" height="21.4" fill="#1766d4"/><rect x="493" y="605.4" width="1" height="12.9" fill="#1190c0"/><rect x="493" y="618.3" width="1" height="12.1" fill="#14b7a7"/><rect x="493" y="647.0" width="1" height="16.7" fill="#52ba48"/><rect x="493" y="675.7" width="1" height="10.4" fill="#dce400"/><rect x="493" y="686.1" width="1" height="4" fill="#f0c000"/><rect x="494" y="531.7" width="1" height="20.0" fill="#1920bd"/><rect x="497" y="551.7" width="2" height="16.6" fill="#1d29dc"/><rect x="497" y="568.3" width="2" height="15.7" fill="#1e35df"/><rect x="497" y="675.7" width="2" height="10.4" fill="#dce400"/><rect x="497" y="686.1" width="2" height="4" fill="#f0c000"/><rect x="499" y="601.4" width="1" height="16.9" fill="#108cbb"/><rect x="499" y="618.3" width="1" height="12.1" fill="#13ae9f"/><rect x="499" y="630.4" width="1" height="16.6" fill="#1fbe7e"/><rect x="499" y="663.7" width="1" height="12.0" fill="#9dd51b"/><rect x="499" y="675.7" width="1" height="10.4" fill="#dce400"/><rect x="499" y="686.1" width="1" height="4" fill="#f0c000"/><rect x="500" y="571.3" width="1" height="12.7" fill="#182ab4"/><rect x="500" y="584.0" width="1" height="21.4" fill="#1763cd"/><rect x="500" y="605.4" width="1" height="12.9" fill="#1190c1"/><rect x="500" y="618.3" width="1" height="12.1" fill="#129d90"/><rect x="500" y="630.4" width="1" height="16.6" fill="#20c281"/><rect x="500" y="647.0" width="1" height="16.7" fill="#52bb49"/><rect x="501" y="526.7" width="1" height="25.0" fill="#1d25db"/><rect x="501" y="551.7" width="1" height="16.6" fill="#202cf0"/><rect x="501" y="568.3" width="1" height="15.7" fill="#1d33d7"/><rect x="501" y="584.0" width="1" height="21.4" fill="#1b75f3"/><rect x="501" y="618.3" width="1" height="12.1" fill="#119c8f"/><rect x="501" y="630.4" width="1" height="16.6" fill="#1db176"/><rect x="501" y="647.0" width="1" height="16.7" fill="#5cd352"/><rect x="501" y="663.7" width="1" height="12.0" fill="#adea1e"/><rect x="501" y="675.7" width="1" height="10.4" fill="#dce400"/><rect x="501" y="686.1" width="1" height="4" fill="#f0c000"/><rect x="502" y="529.7" width="1" height="22.0" fill="#1d25da"/><rect x="502" y="551.7" width="1" height="16.6" fill="#1e29e0"/><rect x="502" y="568.3" width="1" height="15.7" fill="#1b30cb"/><rect x="502" y="584.0" width="1" height="21.4" fill="#1868d7"/><rect x="502" y="605.4" width="1" height="12.9" fill="#1193c4"/><rect x="502" y="618.3" width="1" height="12.1" fill="#12a194"/><rect x="502" y="630.4" width="1" height="16.6" fill="#1eb87a"/><rect x="502" y="659.7" width="1" height="16.0" fill="#adea1e"/><rect x="502" y="675.7" width="1" height="10.4" fill="#dce400"/><rect x="502" y="686.1" width="1" height="4" fill="#f0c000"/><rect x="503" y="522.7" width="1" height="29.0" fill="#1a20c0"/><rect x="503" y="551.7" width="1" height="16.6" fill="#222ffc"/><rect x="503" y="568.3" width="1" height="15.7" fill="#1b30cd"/><rect x="503" y="605.4" width="1" height="12.9" fill="#1299cc"/><rect x="503" y="659.7" width="1" height="16.0" fill="#b0ee1f"/><rect x="503" y="675.7" width="1" height="10.4" fill="#dce400"/><rect x="503" y="686.1" width="1" height="4" fill="#f0c000"/><rect x="504" y="568.3" width="1" height="15.7" fill="#2039f2"/><rect x="504" y="584.0" width="1" height="21.4" fill="#196fe6"/><rect x="504" y="675.7" width="1" height="10.4" fill="#dce400"/><rect x="504" y="686.1" width="1" height="4" fill="#f0c000"/><rect x="507" y="513.9" width="2" height="12.8" fill="#171baa"/><rect x="507" y="526.7" width="2" height="25.0" fill="#2029f3"/><rect x="507" y="551.7" width="2" height="16.6" fill="#1720ac"/><rect x="507" y="568.3" width="2" height="15.7" fill="#1d33d7"/><rect x="507" y="584.0" width="2" height="21.4" fill="#1a71eb"/><rect x="507" y="605.4" width="2" height="12.9" fill="#108bba"/><rect x="507" y="618.3" width="2" height="12.1" fill="#119a8d"/><rect x="509" y="524.7" width="3" height="27.0" fill="#181eb2"/><rect x="509" y="551.7" width="3" height="16.6" fill="#1a24c2"/><rect x="509" y="675.7" width="3" height="10.4" fill="#dce400"/><rect x="509" y="686.1" width="3" height="4" fill="#f0c000"/><rect x="512" y="513.9" width="1" height="12.8" fill="#15199a"/><rect x="512" y="526.7" width="1" height="25.0" fill="#1d24d9"/><rect x="512" y="551.7" width="1" height="16.6" fill="#1f2be7"/><rect x="512" y="568.3" width="1" height="15.7" fill="#1f36e6"/><rect x="512" y="584.0" width="1" height="21.4" fill="#1869db"/><rect x="512" y="618.3" width="1" height="12.1" fill="#13ad9e"/><rect x="513" y="582.0" width="1" height="23.4" fill="#1869da"/><rect x="513" y="605.4" width="1" height="12.9" fill="#129ace"/><rect x="513" y="618.3" width="1" height="12.1" fill="#15b8a8"/><rect x="513" y="630.4" width="1" height="16.6" fill="#1eb478"/><rect x="513" y="647.0" width="1" height="16.7" fill="#5acd50"/><rect x="513" y="663.7" width="1" height="12.0" fill="#9cd31b"/><rect x="513" y="675.7" width="1" height="10.4" fill="#dce400"/><rect x="513" y="686.1" width="1" height="4" fill="#f0c000"/><rect x="514" y="675.7" width="2" height="10.4" fill="#dce400"/><rect x="514" y="686.1" width="2" height="4" fill="#f0c000"/><rect x="516" y="547.7" width="1" height="20.6" fill="#1d28d8"/><rect x="516" y="587.0" width="1" height="18.4" fill="#1a72ed"/><rect x="517" y="529.7" width="1" height="22.0" fill="#1d24d6"/><rect x="517" y="551.7" width="1" height="16.6" fill="#1b26cd"/><rect x="517" y="568.3" width="1" height="15.7" fill="#1e34dd"/><rect x="517" y="675.7" width="1" height="10.4" fill="#dce400"/><rect x="517" y="686.1" width="1" height="4" fill="#f0c000"/><rect x="518" y="623.3" width="2" height="7.1" fill="#14b6a6"/><rect x="518" y="647.0" width="2" height="16.7" fill="#5ed653"/><rect x="520" y="513.9" width="1" height="12.8" fill="#181cb0"/><rect x="520" y="526.7" width="1" height="25.0" fill="#161ba3"/><rect x="520" y="551.7" width="1" height="16.6" fill="#1b26cb"/><rect x="520" y="568.3" width="1" height="15.7" fill="#1526a2"/><rect x="522" y="551.7" width="1" height="16.6" fill="#151ea1"/><rect x="522" y="675.7" width="1" height="10.4" fill="#dce400"/><rect x="522" y="686.1" width="1" height="4" fill="#f0c000"/><rect x="524" y="531.7" width="1" height="20.0" fill="#171dac"/><rect x="524" y="551.7" width="1" height="16.6" fill="#1c27d3"/><rect x="524" y="568.3" width="1" height="15.7" fill="#1c32d5"/><rect x="524" y="584.0" width="1" height="21.4" fill="#1765d1"/><rect x="525" y="556.7" width="1" height="11.6" fill="#1c26d0"/><rect x="525" y="568.3" width="1" height="15.7" fill="#1d32d6"/><rect x="525" y="618.3" width="1" height="12.1" fill="#13aa9c"/><rect x="525" y="630.4" width="1" height="16.6" fill="#1daf75"/><rect x="525" y="647.0" width="1" height="16.7" fill="#5cd252"/><rect x="525" y="663.7" width="1" height="12.0" fill="#adeb1e"/><rect x="525" y="675.7" width="1" height="10.4" fill="#dce400"/><rect x="525" y="686.1" width="1" height="4" fill="#f0c000"/><rect x="526" y="526.7" width="3" height="25.0" fill="#1d24d9"/><rect x="526" y="551.7" width="3" height="16.6" fill="#1b25c9"/><rect x="526" y="568.3" width="3" height="15.7" fill="#1e34df"/><rect x="526" y="584.0" width="3" height="21.4" fill="#1b75f3"/><rect x="526" y="605.4" width="3" height="12.9" fill="#118ebe"/><rect x="526" y="659.7" width="3" height="16.0" fill="#b0ee1f"/><rect x="531" y="571.3" width="1" height="12.7" fill="#1b30ce"/><rect x="531" y="584.0" width="1" height="21.4" fill="#1662cc"/><rect x="532" y="551.7" width="1" height="16.6" fill="#1b25cb"/><rect x="533" y="556.7" width="1" height="11.6" fill="#1d28d7"/><rect x="533" y="675.7" width="1" height="10.4" fill="#dce400"/><rect x="533" y="686.1" width="1" height="4" fill="#f0c000"/><rect x="534" y="526.7" width="1" height="25.0" fill="#1920bf"/><rect x="535" y="529.7" width="3" height="22.0" fill="#1e26e0"/><rect x="535" y="551.7" width="3" height="16.6" fill="#1d29dd"/><rect x="535" y="568.3" width="3" height="15.7" fill="#1728ab"/><rect x="535" y="584.0" width="3" height="21.4" fill="#1765d2"/><rect x="535" y="675.7" width="3" height="10.4" fill="#dce400"/><rect x="535" y="686.1" width="3" height="4" fill="#f0c000"/><rect x="538" y="551.7" width="1" height="16.6" fill="#212df5"/><rect x="538" y="568.3" width="1" height="15.7" fill="#182ab4"/><rect x="538" y="605.4" width="1" height="12.9" fill="#1193c4"/><rect x="538" y="618.3" width="1" height="12.1" fill="#14b2a3"/><rect x="540" y="526.7" width="1" height="25.0" fill="#181eb5"/><rect x="540" y="573.3" width="1" height="10.7" fill="#1e35df"/><rect x="540" y="675.7" width="1" height="10.4" fill="#dce400"/><rect x="540" y="686.1" width="1" height="4" fill="#f0c000"/><rect x="541" y="531.7" width="1" height="20.0" fill="#1e26e4"/><rect x="541" y="551.7" width="1" height="16.6" fill="#1821b1"/><rect x="541" y="568.3" width="1" height="15.7" fill="#1d33d8"/><rect x="541" y="618.3" width="1" height="12.1" fill="#12a697"/><rect x="542" y="522.7" width="1" height="29.0" fill="#1b22c9"/><rect x="542" y="551.7" width="1" height="16.6" fill="#1d28db"/><rect x="542" y="568.3" width="1" height="15.7" fill="#182ab4"/><rect x="542" y="584.0" width="1" height="21.4" fill="#186bde"/><rect x="542" y="618.3" width="1" height="12.1" fill="#14b3a4"/><rect x="542" y="630.4" width="1" height="16.6" fill="#1cab72"/><rect x="542" y="647.0" width="1" height="16.7" fill="#50b647"/><rect x="542" y="663.7" width="1" height="12.0" fill="#9fd81c"/><rect x="542" y="675.7" width="1" height="10.4" fill="#dce400"/><rect x="542" y="686.1" width="1" height="4" fill="#f0c000"/><rect x="543" y="526.7" width="1" height="25.0" fill="#2028ee"/><rect x="543" y="551.7" width="1" height="16.6" fill="#212ef8"/><rect x="543" y="568.3" width="1" height="15.7" fill="#1627a6"/><rect x="543" y="663.7" width="1" height="12.0" fill="#a5df1d"/><rect x="543" y="675.7" width="1" height="10.4" fill="#dce400"/><rect x="543" y="686.1" width="1" height="4" fill="#f0c000"/><rect x="544" y="531.7" width="1" height="20.0" fill="#1c24d5"/><rect x="544" y="551.7" width="1" height="16.6" fill="#1f2ae5"/><rect x="544" y="675.7" width="1" height="10.4" fill="#dce400"/><rect x="544" y="686.1" width="1" height="4" fill="#f0c000"/><rect x="545" y="547.7" width="1" height="20.6" fill="#1d28d9"/><rect x="545" y="568.3" width="1" height="15.7" fill="#1f36e5"/><rect x="549" y="524.7" width="1" height="27.0" fill="#171dad"/><rect x="549" y="551.7" width="1" height="16.6" fill="#1821b6"/><rect x="550" y="524.7" width="1" height="27.0" fill="#1b22cc"/><rect x="551" y="526.7" width="2" height="25.0" fill="#2129f3"/><rect x="551" y="675.7" width="2" height="10.4" fill="#dce400"/><rect x="551" y="686.1" width="2" height="4" fill="#f0c000"/><rect x="553" y="526.7" width="1" height="25.0" fill="#161ca7"/><rect x="553" y="643.0" width="1" height="20.7" fill="#4fb647"/><rect x="553" y="675.7" width="1" height="10.4" fill="#dce400"/><rect x="553" y="686.1" width="1" height="4" fill="#f0c000"/><rect x="554" y="571.3" width="3" height="12.7" fill="#1c32d2"/><rect x="554" y="616.3" width="3" height="14.1" fill="#14afa0"/><rect x="554" y="630.4" width="3" height="16.6" fill="#1eb77a"/><rect x="554" y="647.0" width="3" height="16.7" fill="#50b647"/><rect x="554" y="663.7" width="3" height="12.0" fill="#9cd31b"/><rect x="554" y="675.7" width="3" height="10.4" fill="#dce400"/><rect x="554" y="686.1" width="3" height="4" fill="#f0c000"/><rect x="557" y="522.7" width="1" height="29.0" fill="#2029f1"/><rect x="557" y="551.7" width="1" height="16.6" fill="#1b25c7"/><rect x="557" y="568.3" width="1" height="15.7" fill="#1526a2"/><rect x="557" y="584.0" width="1" height="21.4" fill="#1767d5"/><rect x="557" y="605.4" width="1" height="12.9" fill="#108ab8"/><rect x="558" y="529.7" width="1" height="22.0" fill="#1a21c5"/><rect x="558" y="551.7" width="1" height="16.6" fill="#1720ad"/><rect x="558" y="568.3" width="1" height="15.7" fill="#182bb5"/><rect x="559" y="524.7" width="1" height="27.0" fill="#1e25dd"/><rect x="559" y="551.7" width="1" height="16.6" fill="#212df6"/><rect x="559" y="633.4" width="1" height="13.6" fill="#1eb578"/><rect x="559" y="675.7" width="1" height="10.4" fill="#dce400"/><rect x="559" y="686.1" width="1" height="4" fill="#f0c000"/><rect x="560" y="556.7" width="2" height="11.6" fill="#1d27d6"/><rect x="560" y="661.7" width="2" height="14.0" fill="#96cb1a"/><rect x="563" y="618.3" width="1" height="12.1" fill="#13a798"/><rect x="563" y="630.4" width="1" height="16.6" fill="#1eb679"/><rect x="563" y="647.0" width="1" height="16.7" fill="#5cd252"/><rect x="563" y="675.7" width="1" height="10.4" fill="#dce400"/><rect x="563" y="686.1" width="1" height="4" fill="#f0c000"/><rect x="564" y="526.7" width="2" height="25.0" fill="#2129f5"/><rect x="564" y="551.7" width="2" height="16.6" fill="#1c27d3"/><rect x="564" y="568.3" width="2" height="15.7" fill="#182ab2"/><rect x="564" y="584.0" width="2" height="21.4" fill="#1869db"/><rect x="564" y="605.4" width="2" height="12.9" fill="#108ab8"/><rect x="564" y="630.4" width="2" height="16.6" fill="#1eb87b"/><rect x="564" y="675.7" width="2" height="10.4" fill="#dce400"/><rect x="564" y="686.1" width="2" height="4" fill="#f0c000"/><rect x="566" y="549.7" width="1" height="18.6" fill="#212ef7"/><rect x="566" y="568.3" width="1" height="15.7" fill="#1e35e0"/><rect x="566" y="584.0" width="1" height="21.4" fill="#1765d2"/><rect x="566" y="663.7" width="1" height="12.0" fill="#97cd1a"/><rect x="566" y="675.7" width="1" height="10.4" fill="#dce400"/><rect x="566" y="686.1" width="1" height="4" fill="#f0c000"/><rect x="567" y="547.7" width="2" height="20.6" fill="#1c26d0"/><rect x="567" y="580.0" width="2" height="25.4" fill="#1b74f2"/><rect x="567" y="605.4" width="2" height="12.9" fill="#1298ca"/><rect x="567" y="618.3" width="2" height="12.1" fill="#13a99b"/><rect x="567" y="663.7" width="2" height="12.0" fill="#a3dd1c"/><rect x="567" y="675.7" width="2" height="10.4" fill="#dce400"/><rect x="567" y="686.1" width="2" height="4" fill="#f0c000"/><rect x="569" y="529.7" width="1" height="22.0" fill="#161ba4"/><rect x="569" y="647.0" width="1" height="16.7" fill="#51ba48"/><rect x="569" y="675.7" width="1" height="10.4" fill="#dce400"/><rect x="569" y="686.1" width="1" height="4" fill="#f0c000"/><rect x="570" y="621.3" width="2" height="9.1" fill="#12a597"/><rect x="570" y="663.7" width="2" height="12.0" fill="#9bd21b"/><rect x="570" y="675.7" width="2" height="10.4" fill="#dce400"/><rect x="570" y="686.1" width="2" height="4" fill="#f0c000"/><rect x="572" y="524.7" width="1" height="27.0" fill="#1d24d6"/><rect x="572" y="551.7" width="1" height="16.6" fill="#1d28d8"/><rect x="572" y="568.3" width="1" height="15.7" fill="#1a2ec5"/><rect x="572" y="618.3" width="1" height="12.1" fill="#13ac9e"/><rect x="574" y="551.7" width="1" height="16.6" fill="#1c26cf"/><rect x="574" y="568.3" width="1" height="15.7" fill="#1729ae"/><rect x="574" y="584.0" width="1" height="21.4" fill="#1765d2"/><rect x="574" y="605.4" width="1" height="12.9" fill="#1299cc"/><rect x="574" y="618.3" width="1" height="12.1" fill="#12a496"/><rect x="574" y="630.4" width="1" height="16.6" fill="#1eb97b"/><rect x="574" y="647.0" width="1" height="16.7" fill="#50b847"/><rect x="574" y="663.7" width="1" height="12.0" fill="#b4f31f"/><rect x="574" y="675.7" width="1" height="10.4" fill="#dce400"/><rect x="574" y="686.1" width="1" height="4" fill="#f0c000"/><rect x="577" y="554.7" width="1" height="13.6" fill="#222ffe"/><rect x="577" y="568.3" width="1" height="15.7" fill="#223bfc"/><rect x="577" y="584.0" width="1" height="21.4" fill="#1763ce"/><rect x="578" y="522.7" width="1" height="29.0" fill="#171daf"/><rect x="578" y="618.3" width="1" height="12.1" fill="#14b3a4"/><rect x="578" y="630.4" width="1" height="16.6" fill="#1db176"/><rect x="578" y="666.7" width="1" height="9.0" fill="#99d01b"/><rect x="578" y="675.7" width="1" height="10.4" fill="#dce400"/><rect x="578" y="686.1" width="1" height="4" fill="#f0c000"/><rect x="579" y="551.7" width="1" height="16.6" fill="#1922ba"/><rect x="579" y="568.3" width="1" height="15.7" fill="#1b30cc"/><rect x="579" y="618.3" width="1" height="12.1" fill="#12a697"/><rect x="579" y="630.4" width="1" height="16.6" fill="#1fbc7d"/><rect x="579" y="647.0" width="1" height="16.7" fill="#5dd352"/><rect x="579" y="675.7" width="1" height="10.4" fill="#dce400"/><rect x="579" y="686.1" width="1" height="4" fill="#f0c000"/><rect x="581" y="661.7" width="1" height="14.0" fill="#b1ef1f"/><rect x="581" y="675.7" width="1" height="10.4" fill="#dce400"/><rect x="581" y="686.1" width="1" height="4" fill="#f0c000"/><rect x="582" y="556.7" width="1" height="11.6" fill="#161ea5"/><rect x="582" y="568.3" width="1" height="15.7" fill="#1a2ec3"/><rect x="582" y="584.0" width="1" height="21.4" fill="#196fe7"/><rect x="582" y="605.4" width="1" height="12.9" fill="#1087b4"/><rect x="582" y="663.7" width="1" height="12.0" fill="#95ca1a"/><rect x="583" y="529.7" width="2" height="22.0" fill="#171dad"/><rect x="583" y="564.3" width="2" height="19.7" fill="#1526a1"/><rect x="583" y="584.0" width="2" height="21.4" fill="#196de1"/><rect x="583" y="605.4" width="2" height="12.9" fill="#1299cc"/><rect x="583" y="618.3" width="2" height="12.1" fill="#14b6a6"/><rect x="583" y="630.4" width="2" height="16.6" fill="#1eb679"/><rect x="585" y="556.7" width="1" height="11.6" fill="#1a24c3"/><rect x="587" y="551.7" width="1" height="16.6" fill="#1f2be8"/><rect x="587" y="568.3" width="1" height="15.7" fill="#1627a6"/><rect x="587" y="584.0" width="1" height="21.4" fill="#196ee4"/><rect x="591" y="526.7" width="1" height="25.0" fill="#1d25da"/><rect x="592" y="513.9" width="1" height="12.8" fill="#161aa2"/><rect x="592" y="526.7" width="1" height="25.0" fill="#171caa"/><rect x="592" y="551.7" width="1" height="16.6" fill="#161ea4"/><rect x="592" y="568.3" width="1" height="15.7" fill="#1a2dc1"/><rect x="593" y="551.7" width="1" height="16.6" fill="#1923bf"/><rect x="593" y="675.7" width="1" height="10.4" fill="#dce400"/><rect x="593" y="686.1" width="1" height="4" fill="#f0c000"/><rect x="594" y="526.7" width="1" height="25.0" fill="#171dae"/><rect x="594" y="584.0" width="1" height="21.4" fill="#1867d6"/><rect x="595" y="526.7" width="1" height="25.0" fill="#191fbb"/><rect x="595" y="551.7" width="1" height="16.6" fill="#1c27d2"/><rect x="595" y="568.3" width="1" height="15.7" fill="#1d33da"/><rect x="595" y="584.0" width="1" height="21.4" fill="#186bde"/><rect x="595" y="605.4" width="1" height="12.9" fill="#1086b3"/><rect x="595" y="618.3" width="1" height="12.1" fill="#13a99b"/><rect x="595" y="630.4" width="1" height="16.6" fill="#21c885"/><rect x="595" y="647.0" width="1" height="16.7" fill="#56c54d"/><rect x="595" y="663.7" width="1" height="12.0" fill="#9ad01b"/><rect x="596" y="675.7" width="2" height="10.4" fill="#dce400"/><rect x="596" y="686.1" width="2" height="4" fill="#f0c000"/><rect x="598" y="526.7" width="3" height="25.0" fill="#1e26e1"/><rect x="598" y="551.7" width="3" height="16.6" fill="#1923bf"/><rect x="598" y="675.7" width="3" height="10.4" fill="#dce400"/><rect x="598" y="686.1" width="3" height="4" fill="#f0c000"/><rect x="601" y="531.7" width="1" height="20.0" fill="#1b22c9"/><rect x="601" y="551.7" width="1" height="16.6" fill="#1821b4"/><rect x="601" y="568.3" width="1" height="15.7" fill="#2038ef"/><rect x="601" y="659.7" width="1" height="16.0" fill="#acea1e"/><rect x="601" y="675.7" width="1" height="10.4" fill="#dce400"/><rect x="601" y="686.1" width="1" height="4" fill="#f0c000"/><rect x="602" y="526.7" width="1" height="25.0" fill="#1d25dd"/><rect x="602" y="551.7" width="1" height="16.6" fill="#1c27d3"/><rect x="602" y="568.3" width="1" height="15.7" fill="#192cb9"/><rect x="604" y="531.7" width="1" height="20.0" fill="#1b22ce"/><rect x="604" y="551.7" width="1" height="16.6" fill="#1d28db"/><rect x="604" y="568.3" width="1" height="15.7" fill="#1d33d9"/><rect x="604" y="584.0" width="1" height="21.4" fill="#1765d2"/><rect x="604" y="605.4" width="1" height="12.9" fill="#0f85b1"/><rect x="604" y="647.0" width="1" height="16.7" fill="#54c14b"/><rect x="604" y="663.7" width="1" height="12.0" fill="#a3dc1c"/><rect x="604" y="675.7" width="1" height="10.4" fill="#dce400"/><rect x="604" y="686.1" width="1" height="4" fill="#f0c000"/><rect x="605" y="522.7" width="1" height="29.0" fill="#1d25dc"/><rect x="608" y="556.7" width="1" height="11.6" fill="#1a24c4"/><rect x="608" y="568.3" width="1" height="15.7" fill="#1b30ca"/><rect x="608" y="584.0" width="1" height="21.4" fill="#1766d4"/><rect x="608" y="605.4" width="1" height="12.9" fill="#1194c5"/><rect x="608" y="630.4" width="1" height="16.6" fill="#20c583"/><rect x="608" y="675.7" width="1" height="10.4" fill="#dce400"/><rect x="608" y="686.1" width="1" height="4" fill="#f0c000"/><rect x="609" y="568.3" width="1" height="15.7" fill="#1526a0"/><rect x="610" y="614.3" width="1" height="16.1" fill="#119b8e"/><rect x="612" y="566.3" width="1" height="17.7" fill="#192bb8"/><rect x="612" y="675.7" width="1" height="10.4" fill="#dce400"/><rect x="612" y="686.1" width="1" height="4" fill="#f0c000"/><rect x="613" y="526.7" width="1" height="25.0" fill="#1f26e4"/><rect x="613" y="551.7" width="1" height="16.6" fill="#212df5"/><rect x="613" y="568.3" width="1" height="15.7" fill="#1d33d7"/><rect x="613" y="584.0" width="1" height="21.4" fill="#1763cf"/><rect x="613" y="675.7" width="1" height="10.4" fill="#dce400"/><rect x="613" y="686.1" width="1" height="4" fill="#f0c000"/><rect x="617" y="522.7" width="2" height="29.0" fill="#1a20c0"/><rect x="617" y="551.7" width="2" height="16.6" fill="#202cf0"/><rect x="617" y="568.3" width="2" height="15.7" fill="#182ab1"/><rect x="617" y="584.0" width="2" height="21.4" fill="#1a70e9"/><rect x="619" y="568.3" width="1" height="15.7" fill="#182ab4"/><rect x="619" y="675.7" width="1" height="10.4" fill="#dce400"/><rect x="619" y="686.1" width="1" height="4" fill="#f0c000"/><rect x="620" y="529.7" width="1" height="22.0" fill="#2028ec"/><rect x="620" y="551.7" width="1" height="16.6" fill="#1923bf"/><rect x="620" y="568.3" width="1" height="15.7" fill="#213bfa"/><rect x="620" y="584.0" width="1" height="21.4" fill="#186bde"/><rect x="620" y="605.4" width="1" height="12.9" fill="#1297c9"/><rect x="620" y="618.3" width="1" height="12.1" fill="#12a092"/><rect x="620" y="647.0" width="1" height="16.7" fill="#5bd151"/><rect x="620" y="675.7" width="1" height="10.4" fill="#dce400"/><rect x="620" y="686.1" width="1" height="4" fill="#f0c000"/><rect x="622" y="531.7" width="2" height="20.0" fill="#1d24d7"/><rect x="622" y="551.7" width="2" height="16.6" fill="#212df5"/><rect x="624" y="526.7" width="2" height="25.0" fill="#2129f4"/><rect x="624" y="675.7" width="2" height="10.4" fill="#dce400"/><rect x="624" y="686.1" width="2" height="4" fill="#f0c000"/><rect x="626" y="526.7" width="1" height="25.0" fill="#151ba0"/><rect x="626" y="551.7" width="1" height="16.6" fill="#161fa8"/><rect x="626" y="568.3" width="1" height="15.7" fill="#1d33d9"/><rect x="626" y="675.7" width="1" height="10.4" fill="#dce400"/><rect x="626" y="686.1" width="1" height="4" fill="#f0c000"/><rect x="627" y="531.7" width="1" height="20.0" fill="#1e25df"/><rect x="627" y="551.7" width="1" height="16.6" fill="#1821b1"/><rect x="627" y="568.3" width="1" height="15.7" fill="#1c32d3"/><rect x="627" y="618.3" width="1" height="12.1" fill="#14b3a4"/><rect x="627" y="650.0" width="1" height="13.7" fill="#5dd553"/><rect x="627" y="663.7" width="1" height="12.0" fill="#a0d81c"/><rect x="627" y="675.7" width="1" height="10.4" fill="#dce400"/><rect x="627" y="686.1" width="1" height="4" fill="#f0c000"/><rect x="628" y="603.4" width="3" height="14.9" fill="#1087b4"/><rect x="628" y="618.3" width="3" height="12.1" fill="#13a698"/><rect x="628" y="630.4" width="3" height="16.6" fill="#1eb87a"/><rect x="628" y="647.0" width="3" height="16.7" fill="#55c24b"/><rect x="628" y="663.7" width="3" height="12.0" fill="#adea1e"/><rect x="628" y="675.7" width="3" height="10.4" fill="#dce400"/><rect x="628" y="686.1" width="3" height="4" fill="#f0c000"/><rect x="631" y="524.7" width="3" height="27.0" fill="#2028f0"/><rect x="631" y="551.7" width="3" height="16.6" fill="#1f2bea"/><rect x="635" y="522.7" width="1" height="29.0" fill="#1c23d1"/><rect x="635" y="551.7" width="1" height="16.6" fill="#1f2ae5"/><rect x="635" y="568.3" width="1" height="15.7" fill="#1e35e2"/><rect x="635" y="601.4" width="1" height="16.9" fill="#1087b5"/><rect x="635" y="618.3" width="1" height="12.1" fill="#12a093"/><rect x="635" y="630.4" width="1" height="16.6" fill="#20c281"/><rect x="635" y="647.0" width="1" height="16.7" fill="#58c94e"/><rect x="635" y="663.7" width="1" height="12.0" fill="#b0ee1f"/><rect x="635" y="675.7" width="1" height="10.4" fill="#dce400"/><rect x="635" y="686.1" width="1" height="4" fill="#f0c000"/><rect x="637" y="524.7" width="1" height="27.0" fill="#1c23d1"/><rect x="637" y="675.7" width="1" height="10.4" fill="#dce400"/><rect x="637" y="686.1" width="1" height="4" fill="#f0c000"/><rect x="638" y="584.0" width="3" height="21.4" fill="#1869db"/><rect x="641" y="551.7" width="1" height="16.6" fill="#1720b0"/><rect x="642" y="551.7" width="1" height="16.6" fill="#1923bc"/><rect x="642" y="647.0" width="1" height="16.7" fill="#5ed754"/><rect x="643" y="675.7" width="2" height="10.4" fill="#dce400"/><rect x="643" y="686.1" width="2" height="4" fill="#f0c000"/><rect x="646" y="630.4" width="1" height="16.6" fill="#20c382"/><rect x="646" y="675.7" width="1" height="10.4" fill="#dce400"/><rect x="646" y="686.1" width="1" height="4" fill="#f0c000"/><rect x="648" y="531.7" width="1" height="20.0" fill="#171dac"/><rect x="648" y="630.4" width="1" height="16.6" fill="#1eb679"/><rect x="650" y="628.4" width="1" height="18.6" fill="#1fbd7e"/><rect x="651" y="526.7" width="3" height="25.0" fill="#161ca5"/><rect x="651" y="551.7" width="3" height="16.6" fill="#1c27d5"/><rect x="651" y="568.3" width="3" height="15.7" fill="#1d33d7"/><rect x="654" y="554.7" width="1" height="13.6" fill="#202cef"/><rect x="654" y="568.3" width="1" height="15.7" fill="#182ab5"/><rect x="654" y="605.4" width="1" height="12.9" fill="#1085b2"/><rect x="654" y="645.0" width="1" height="18.7" fill="#57c74d"/><rect x="654" y="663.7" width="1" height="12.0" fill="#a7e21d"/><rect x="654" y="675.7" width="1" height="10.4" fill="#dce400"/><rect x="654" y="686.1" width="1" height="4" fill="#f0c000"/><rect x="655" y="551.7" width="1" height="16.6" fill="#1e2ae2"/><rect x="655" y="605.4" width="1" height="12.9" fill="#1193c4"/><rect x="655" y="618.3" width="1" height="12.1" fill="#13a698"/><rect x="656" y="526.7" width="2" height="25.0" fill="#171dab"/><rect x="656" y="551.7" width="2" height="16.6" fill="#1720b0"/><rect x="656" y="568.3" width="2" height="15.7" fill="#213af4"/><rect x="656" y="626.4" width="2" height="20.6" fill="#1daf75"/><rect x="656" y="647.0" width="2" height="16.7" fill="#59cb4f"/><rect x="656" y="663.7" width="2" height="12.0" fill="#9ad01b"/><rect x="656" y="675.7" width="2" height="10.4" fill="#dce400"/><rect x="656" y="686.1" width="2" height="4" fill="#f0c000"/><rect x="658" y="522.7" width="2" height="29.0" fill="#181eb4"/><rect x="658" y="605.4" width="2" height="12.9" fill="#1088b5"/><rect x="658" y="618.3" width="2" height="12.1" fill="#129f92"/><rect x="658" y="630.4" width="2" height="16.6" fill="#20c382"/><rect x="658" y="663.7" width="2" height="12.0" fill="#a0d91c"/><rect x="658" y="675.7" width="2" height="10.4" fill="#dce400"/><rect x="658" y="686.1" width="2" height="4" fill="#f0c000"/><rect x="660" y="618.3" width="2" height="12.1" fill="#12a092"/><rect x="660" y="630.4" width="2" height="16.6" fill="#1eb579"/><rect x="662" y="526.7" width="1" height="25.0" fill="#1a21c6"/><rect x="662" y="571.3" width="1" height="12.7" fill="#182ab2"/><rect x="662" y="584.0" width="1" height="21.4" fill="#1868d8"/><rect x="662" y="630.4" width="1" height="16.6" fill="#21c785"/><rect x="662" y="663.7" width="1" height="12.0" fill="#a7e21d"/><rect x="662" y="675.7" width="1" height="10.4" fill="#dce400"/><rect x="662" y="686.1" width="1" height="4" fill="#f0c000"/><rect x="665" y="526.7" width="1" height="25.0" fill="#1d25da"/><rect x="665" y="551.7" width="1" height="16.6" fill="#1c26cf"/><rect x="666" y="522.7" width="1" height="29.0" fill="#2029f3"/><rect x="666" y="551.7" width="1" height="16.6" fill="#202cee"/><rect x="666" y="568.3" width="1" height="15.7" fill="#1729ad"/><rect x="666" y="584.0" width="1" height="21.4" fill="#1a73ee"/><rect x="666" y="605.4" width="1" height="12.9" fill="#118fbf"/><rect x="667" y="526.7" width="1" height="25.0" fill="#161ca6"/><rect x="668" y="526.7" width="2" height="25.0" fill="#1b22cd"/><rect x="668" y="582.0" width="2" height="23.4" fill="#1869d9"/><rect x="668" y="605.4" width="2" height="12.9" fill="#1194c5"/><rect x="668" y="618.3" width="2" height="12.1" fill="#14b7a7"/><rect x="670" y="582.0" width="1" height="23.4" fill="#1766d4"/><rect x="670" y="605.4" width="1" height="12.9" fill="#1191c1"/><rect x="670" y="675.7" width="1" height="10.4" fill="#dce400"/><rect x="670" y="686.1" width="1" height="4" fill="#f0c000"/><rect x="671" y="526.7" width="1" height="25.0" fill="#1d24d7"/><rect x="671" y="618.3" width="1" height="12.1" fill="#13a99b"/><rect x="671" y="630.4" width="1" height="16.6" fill="#21c885"/><rect x="671" y="663.7" width="1" height="12.0" fill="#aeeb1e"/><rect x="671" y="675.7" width="1" height="10.4" fill="#dce400"/><rect x="671" y="686.1" width="1" height="4" fill="#f0c000"/><rect x="672" y="524.7" width="1" height="27.0" fill="#171dab"/><rect x="672" y="551.7" width="1" height="16.6" fill="#1d28d8"/><rect x="672" y="568.3" width="1" height="15.7" fill="#192dbd"/><rect x="672" y="584.0" width="1" height="21.4" fill="#1662cc"/><rect x="672" y="675.7" width="1" height="10.4" fill="#dce400"/><rect x="672" y="686.1" width="1" height="4" fill="#f0c000"/><rect x="673" y="551.7" width="1" height="16.6" fill="#161ea5"/><rect x="673" y="568.3" width="1" height="15.7" fill="#1a2ec4"/><rect x="674" y="551.7" width="1" height="16.6" fill="#1d28d8"/><rect x="674" y="568.3" width="1" height="15.7" fill="#1e34de"/><rect x="674" y="663.7" width="1" height="12.0" fill="#a6e01d"/><rect x="674" y="675.7" width="1" height="10.4" fill="#dce400"/><rect x="674" y="686.1" width="1" height="4" fill="#f0c000"/><rect x="675" y="589.0" width="1" height="16.4" fill="#1765d1"/><rect x="675" y="605.4" width="1" height="12.9" fill="#1190c0"/><rect x="675" y="618.3" width="1" height="12.1" fill="#14b4a4"/><rect x="675" y="650.0" width="1" height="13.7" fill="#50b647"/><rect x="675" y="663.7" width="1" height="12.0" fill="#a4de1d"/><rect x="675" y="675.7" width="1" height="10.4" fill="#dce400"/><rect x="675" y="686.1" width="1" height="4" fill="#f0c000"/><rect x="676" y="584.0" width="1" height="21.4" fill="#1b76f5"/><rect x="676" y="605.4" width="1" height="12.9" fill="#0f85b1"/><rect x="677" y="526.7" width="1" height="25.0" fill="#161ba3"/><rect x="677" y="551.7" width="1" height="16.6" fill="#1d28d6"/><rect x="677" y="568.3" width="1" height="15.7" fill="#192dbe"/><rect x="677" y="675.7" width="1" height="10.4" fill="#dce400"/><rect x="677" y="686.1" width="1" height="4" fill="#f0c000"/><rect x="678" y="675.7" width="1" height="10.4" fill="#dce400"/><rect x="678" y="686.1" width="1" height="4" fill="#f0c000"/><rect x="679" y="526.7" width="1" height="25.0" fill="#1e25de"/><rect x="679" y="551.7" width="1" height="16.6" fill="#1f2be7"/><rect x="679" y="568.3" width="1" height="15.7" fill="#2039f2"/><rect x="679" y="584.0" width="1" height="21.4" fill="#1764d1"/><rect x="679" y="675.7" width="1" height="10.4" fill="#dce400"/><rect x="679" y="686.1" width="1" height="4" fill="#f0c000"/><rect x="680" y="526.7" width="1" height="25.0" fill="#161ca6"/><rect x="680" y="571.3" width="1" height="12.7" fill="#1729ad"/><rect x="680" y="584.0" width="1" height="21.4" fill="#196fe6"/><rect x="681" y="666.7" width="2" height="9.0" fill="#b4f31f"/><rect x="681" y="675.7" width="2" height="10.4" fill="#dce400"/><rect x="681" y="686.1" width="2" height="4" fill="#f0c000"/><rect x="683" y="547.7" width="1" height="20.6" fill="#1e29e0"/><rect x="683" y="675.7" width="1" height="10.4" fill="#dce400"/><rect x="683" y="686.1" width="1" height="4" fill="#f0c000"/><rect x="684" y="551.7" width="1" height="16.6" fill="#171fab"/><rect x="684" y="568.3" width="1" height="15.7" fill="#1a2ec5"/><rect x="684" y="635.4" width="1" height="11.6" fill="#1dae74"/><rect x="684" y="647.0" width="1" height="16.7" fill="#50b747"/><rect x="684" y="663.7" width="1" height="12.0" fill="#adea1e"/><rect x="684" y="675.7" width="1" height="10.4" fill="#dce400"/><rect x="684" y="686.1" width="1" height="4" fill="#f0c000"/><rect x="685" y="524.7" width="3" height="27.0" fill="#1a21c5"/><rect x="685" y="551.7" width="3" height="16.6" fill="#222ffd"/><rect x="685" y="568.3" width="3" height="15.7" fill="#1a2dc1"/><rect x="685" y="584.0" width="3" height="21.4" fill="#1869d9"/><rect x="685" y="675.7" width="3" height="10.4" fill="#dce400"/><rect x="685" y="686.1" width="3" height="4" fill="#f0c000"/><rect x="688" y="605.4" width="2" height="12.9" fill="#1193c4"/><rect x="688" y="618.3" width="2" height="12.1" fill="#12a697"/><rect x="688" y="630.4" width="2" height="16.6" fill="#1caa71"/><rect x="688" y="647.0" width="2" height="16.7" fill="#5ed753"/><rect x="690" y="522.7" width="1" height="29.0" fill="#212af8"/><rect x="690" y="551.7" width="1" height="16.6" fill="#1c27d4"/><rect x="690" y="605.4" width="1" height="12.9" fill="#129ace"/><rect x="690" y="626.4" width="1" height="20.6" fill="#1db377"/><rect x="690" y="659.7" width="1" height="16.0" fill="#a7e21d"/><rect x="691" y="675.7" width="1" height="10.4" fill="#dce400"/><rect x="691" y="686.1" width="1" height="4" fill="#f0c000"/><rect x="692" y="526.7" width="1" height="25.0" fill="#1a21c3"/><rect x="692" y="551.7" width="1" height="16.6" fill="#1922bb"/><rect x="692" y="568.3" width="1" height="15.7" fill="#1f37e8"/><rect x="692" y="584.0" width="1" height="21.4" fill="#1763cf"/><rect x="692" y="605.4" width="1" height="12.9" fill="#1087b4"/><rect x="692" y="618.3" width="1" height="12.1" fill="#13ae9f"/><rect x="692" y="630.4" width="1" height="16.6" fill="#20c180"/><rect x="692" y="675.7" width="1" height="5" fill="#f0d800"/><rect x="692" y="680.7" width="1" height="4.5" fill="#f4a800"/><rect x="692" y="685.2" width="1" height="4.9" fill="#f48400"/><rect x="695" y="529.7" width="2" height="22.0" fill="#1c23d4"/><rect x="695" y="551.7" width="2" height="16.6" fill="#212ef7"/><rect x="695" y="568.3" width="2" height="15.7" fill="#1b30ce"/><rect x="697" y="529.7" width="1" height="22.0" fill="#1c23d0"/><rect x="697" y="551.7" width="1" height="16.6" fill="#151ea1"/><rect x="697" y="568.3" width="1" height="15.7" fill="#1c32d5"/><rect x="697" y="628.4" width="1" height="18.6" fill="#1db377"/><rect x="697" y="647.0" width="1" height="16.7" fill="#54c04b"/><rect x="697" y="675.7" width="1" height="5" fill="#f0d800"/><rect x="697" y="680.7" width="1" height="4.5" fill="#f4a800"/><rect x="697" y="685.2" width="1" height="4.9" fill="#f48400"/><rect x="698" y="554.7" width="1" height="13.6" fill="#212ef6"/><rect x="698" y="568.3" width="1" height="15.7" fill="#1c32d3"/><rect x="698" y="584.0" width="1" height="21.4" fill="#186adc"/><rect x="698" y="605.4" width="1" height="12.9" fill="#1089b6"/><rect x="698" y="630.4" width="1" height="16.6" fill="#1db377"/><rect x="699" y="522.7" width="1" height="29.0" fill="#1b21c7"/><rect x="699" y="551.7" width="1" height="16.6" fill="#1d27d6"/><rect x="699" y="568.3" width="1" height="15.7" fill="#1628a9"/><rect x="700" y="675.7" width="3" height="5" fill="#f0d800"/><rect x="700" y="680.7" width="3" height="4.5" fill="#f4a800"/><rect x="700" y="685.2" width="3" height="4.9" fill="#f48400"/><rect x="703" y="531.7" width="1" height="20.0" fill="#151ba1"/><rect x="703" y="551.7" width="1" height="16.6" fill="#1923bb"/><rect x="703" y="568.3" width="1" height="15.7" fill="#1f36e6"/><rect x="703" y="584.0" width="1" height="21.4" fill="#1a70e8"/><rect x="703" y="643.0" width="1" height="20.7" fill="#55c24c"/><rect x="703" y="663.7" width="1" height="12.0" fill="#a8e31d"/><rect x="703" y="675.7" width="1" height="5" fill="#f0d800"/><rect x="703" y="680.7" width="1" height="4.5" fill="#f4a800"/><rect x="703" y="685.2" width="1" height="4.9" fill="#f48400"/><rect x="704" y="524.7" width="1" height="27.0" fill="#161ba2"/><rect x="704" y="551.7" width="1" height="16.6" fill="#1f2beb"/><rect x="705" y="531.7" width="1" height="20.0" fill="#1920bd"/><rect x="705" y="551.7" width="1" height="16.6" fill="#1e2ae2"/><rect x="705" y="568.3" width="1" height="15.7" fill="#1626a4"/><rect x="706" y="587.0" width="1" height="18.4" fill="#1766d3"/><rect x="707" y="659.7" width="3" height="16.0" fill="#9fd71c"/><rect x="707" y="675.7" width="3" height="5" fill="#f0d800"/><rect x="707" y="680.7" width="3" height="4.5" fill="#f4a800"/><rect x="707" y="685.2" width="3" height="4.9" fill="#f48400"/><rect x="710" y="531.7" width="2" height="20.0" fill="#1f26e5"/><rect x="710" y="551.7" width="2" height="16.6" fill="#1822b8"/><rect x="710" y="568.3" width="2" height="15.7" fill="#182ab2"/><rect x="710" y="584.0" width="2" height="21.4" fill="#1766d5"/><rect x="710" y="605.4" width="2" height="12.9" fill="#1298cb"/><rect x="710" y="618.3" width="2" height="12.1" fill="#14b1a2"/><rect x="710" y="630.4" width="2" height="16.6" fill="#1eb77a"/><rect x="710" y="647.0" width="2" height="16.7" fill="#5ed754"/><rect x="710" y="663.7" width="2" height="12.0" fill="#abe71e"/><rect x="710" y="675.7" width="2" height="5" fill="#f0d800"/><rect x="710" y="680.7" width="2" height="4.5" fill="#f4a800"/><rect x="710" y="685.2" width="2" height="4.9" fill="#f48400"/><rect x="714" y="526.7" width="1" height="25.0" fill="#181fb7"/><rect x="714" y="566.3" width="1" height="17.7" fill="#1a2ec2"/><rect x="714" y="628.4" width="1" height="18.6" fill="#20c482"/><rect x="714" y="663.7" width="1" height="12.0" fill="#aae61e"/><rect x="714" y="675.7" width="1" height="5" fill="#f0d800"/><rect x="714" y="680.7" width="1" height="4.5" fill="#f4a800"/><rect x="714" y="685.2" width="1" height="4.9" fill="#f48400"/><rect x="715" y="531.7" width="1" height="20.0" fill="#2029f2"/><rect x="715" y="551.7" width="1" height="16.6" fill="#1f2beb"/><rect x="715" y="568.3" width="1" height="15.7" fill="#1e35e1"/><rect x="716" y="549.7" width="1" height="18.6" fill="#1e29e0"/><rect x="716" y="568.3" width="1" height="15.7" fill="#1f36e5"/><rect x="717" y="531.7" width="1" height="20.0" fill="#191fb8"/><rect x="718" y="522.7" width="1" height="29.0" fill="#181fb7"/><rect x="718" y="551.7" width="1" height="16.6" fill="#1922b9"/><rect x="718" y="568.3" width="1" height="15.7" fill="#1e34dd"/><rect x="719" y="526.7" width="1" height="25.0" fill="#1c24d4"/><rect x="720" y="554.7" width="1" height="13.6" fill="#202df3"/><rect x="720" y="568.3" width="1" height="15.7" fill="#182bb7"/><rect x="720" y="584.0" width="1" height="21.4" fill="#1867d6"/><rect x="720" y="605.4" width="1" height="12.9" fill="#129acd"/><rect x="720" y="675.7" width="1" height="5" fill="#f0d800"/><rect x="720" y="680.7" width="1" height="4.5" fill="#f4a800"/><rect x="720" y="685.2" width="1" height="4.9" fill="#f48400"/><rect x="721" y="568.3" width="1" height="15.7" fill="#1c31d2"/><rect x="722" y="526.7" width="2" height="25.0" fill="#171caa"/><rect x="722" y="551.7" width="2" height="16.6" fill="#1e2ae3"/><rect x="722" y="568.3" width="2" height="15.7" fill="#1c32d3"/><rect x="722" y="584.0" width="2" height="21.4" fill="#186bde"/><rect x="722" y="605.4" width="2" height="12.9" fill="#129cd1"/><rect x="722" y="668.7" width="2" height="7.0" fill="#a1d91c"/><rect x="722" y="675.7" width="2" height="5" fill="#f0d800"/><rect x="722" y="680.7" width="2" height="4.5" fill="#f4a800"/><rect x="722" y="685.2" width="2" height="4.9" fill="#f48400"/><rect x="724" y="584.0" width="2" height="21.4" fill="#196bdf"/><rect x="724" y="618.3" width="2" height="12.1" fill="#14b5a5"/><rect x="724" y="630.4" width="2" height="16.6" fill="#1eb478"/><rect x="724" y="675.7" width="2" height="5" fill="#f0d800"/><rect x="724" y="680.7" width="2" height="4.5" fill="#f4a800"/><rect x="724" y="685.2" width="2" height="4.9" fill="#f48400"/><rect x="726" y="524.7" width="1" height="27.0" fill="#1b22ca"/><rect x="726" y="551.7" width="1" height="16.6" fill="#1822b6"/><rect x="726" y="568.3" width="1" height="15.7" fill="#1e35e1"/><rect x="726" y="610.4" width="1" height="7.9" fill="#108ab8"/><rect x="726" y="618.3" width="1" height="12.1" fill="#13a798"/><rect x="726" y="675.7" width="1" height="5" fill="#f0d800"/><rect x="726" y="680.7" width="1" height="4.5" fill="#f4a800"/><rect x="726" y="685.2" width="1" height="4.9" fill="#f48400"/><rect x="727" y="635.4" width="2" height="11.6" fill="#1fbb7c"/><rect x="727" y="647.0" width="2" height="16.7" fill="#51b948"/><rect x="727" y="663.7" width="2" height="12.0" fill="#97cd1a"/><rect x="727" y="675.7" width="2" height="5" fill="#f0d800"/><rect x="727" y="680.7" width="2" height="4.5" fill="#f4a800"/><rect x="727" y="685.2" width="2" height="4.9" fill="#f48400"/><rect x="729" y="675.7" width="1" height="5" fill="#f0d800"/><rect x="729" y="680.7" width="1" height="4.5" fill="#f4a800"/><rect x="729" y="685.2" width="1" height="4.9" fill="#f48400"/><rect x="732" y="554.7" width="1" height="13.6" fill="#1923be"/><rect x="732" y="568.3" width="1" height="15.7" fill="#223bfb"/><rect x="732" y="584.0" width="1" height="21.4" fill="#196fe7"/><rect x="732" y="605.4" width="1" height="12.9" fill="#129bcf"/><rect x="732" y="618.3" width="1" height="12.1" fill="#14b6a6"/><rect x="733" y="526.7" width="1" height="25.0" fill="#161ca7"/><rect x="733" y="659.7" width="1" height="16.0" fill="#9dd41b"/><rect x="733" y="675.7" width="1" height="5" fill="#f0d800"/><rect x="733" y="680.7" width="1" height="4.5" fill="#f4a800"/><rect x="733" y="685.2" width="1" height="4.9" fill="#f48400"/><rect x="734" y="513.9" width="1" height="12.8" fill="#171cad"/><rect x="734" y="526.7" width="1" height="25.0" fill="#1d24d9"/><rect x="734" y="551.7" width="1" height="16.6" fill="#1e29df"/><rect x="734" y="568.3" width="1" height="15.7" fill="#1729b0"/><rect x="736" y="633.4" width="2" height="13.6" fill="#20c483"/><rect x="736" y="668.7" width="2" height="7.0" fill="#a7e21d"/><rect x="736" y="675.7" width="2" height="5" fill="#f0d800"/><rect x="736" y="680.7" width="2" height="4.5" fill="#f4a800"/><rect x="736" y="685.2" width="2" height="4.9" fill="#f48400"/><rect x="738" y="529.7" width="1" height="22.0" fill="#1e25de"/><rect x="738" y="551.7" width="1" height="16.6" fill="#1923bb"/><rect x="738" y="568.3" width="1" height="15.7" fill="#1627a7"/><rect x="738" y="584.0" width="1" height="21.4" fill="#1a72ed"/><rect x="738" y="663.7" width="1" height="12.0" fill="#adea1e"/><rect x="738" y="675.7" width="1" height="5" fill="#f0d800"/><rect x="738" y="680.7" width="1" height="4.5" fill="#f4a800"/><rect x="738" y="685.2" width="1" height="4.9" fill="#f48400"/><rect x="739" y="531.7" width="1" height="20.0" fill="#1f26e5"/><rect x="739" y="580.0" width="1" height="25.4" fill="#1a72ee"/><rect x="739" y="614.3" width="1" height="16.1" fill="#15b8a8"/><rect x="739" y="630.4" width="1" height="16.6" fill="#1fbf7f"/><rect x="739" y="675.7" width="1" height="5" fill="#f0d800"/><rect x="739" y="680.7" width="1" height="4.5" fill="#f4a800"/><rect x="739" y="685.2" width="1" height="4.9" fill="#f48400"/><rect x="740" y="571.3" width="1" height="12.7" fill="#1a2ec4"/><rect x="740" y="584.0" width="1" height="21.4" fill="#186adc"/><rect x="740" y="675.7" width="1" height="5" fill="#f0d800"/><rect x="740" y="680.7" width="1" height="4.5" fill="#f4a800"/><rect x="740" y="685.2" width="1" height="4.9" fill="#f48400"/><rect x="741" y="531.7" width="1" height="20.0" fill="#212afa"/><rect x="741" y="551.7" width="1" height="16.6" fill="#1e2ae3"/><rect x="741" y="568.3" width="1" height="15.7" fill="#1f37e8"/><rect x="741" y="675.7" width="1" height="5" fill="#f0d800"/><rect x="741" y="680.7" width="1" height="4.5" fill="#f4a800"/><rect x="741" y="685.2" width="1" height="4.9" fill="#f48400"/><rect x="742" y="526.7" width="1" height="25.0" fill="#1b21c8"/><rect x="742" y="551.7" width="1" height="16.6" fill="#151ea1"/><rect x="742" y="568.3" width="1" height="15.7" fill="#2038ec"/><rect x="742" y="663.7" width="1" height="12.0" fill="#a8e41d"/><rect x="743" y="566.3" width="1" height="17.7" fill="#1a2ec5"/><rect x="743" y="584.0" width="1" height="21.4" fill="#1a73ef"/><rect x="743" y="605.4" width="1" height="12.9" fill="#118fbe"/><rect x="743" y="618.3" width="1" height="12.1" fill="#13a99a"/><rect x="743" y="647.0" width="1" height="16.7" fill="#56c44c"/><rect x="743" y="675.7" width="1" height="5" fill="#f0d800"/><rect x="743" y="680.7" width="1" height="4.5" fill="#f4a800"/><rect x="743" y="685.2" width="1" height="4.9" fill="#f48400"/><rect x="744" y="549.7" width="1" height="18.6" fill="#202cef"/><rect x="744" y="568.3" width="1" height="15.7" fill="#1c32d3"/><rect x="745" y="526.7" width="1" height="25.0" fill="#1a21c2"/><rect x="745" y="551.7" width="1" height="16.6" fill="#1821b2"/><rect x="746" y="663.7" width="1" height="12.0" fill="#9ad01b"/><rect x="746" y="675.7" width="1" height="5" fill="#f0d800"/><rect x="746" y="680.7" width="1" height="4.5" fill="#f4a800"/><rect x="746" y="685.2" width="1" height="4.9" fill="#f48400"/><rect x="747" y="587.0" width="1" height="18.4" fill="#196de3"/><rect x="747" y="605.4" width="1" height="12.9" fill="#129ace"/><rect x="748" y="531.7" width="1" height="20.0" fill="#181fb7"/><rect x="748" y="551.7" width="1" height="16.6" fill="#171faa"/><rect x="748" y="568.3" width="1" height="15.7" fill="#192dbd"/><rect x="748" y="584.0" width="1" height="21.4" fill="#1869da"/><rect x="748" y="630.4" width="1" height="16.6" fill="#1caa71"/><rect x="748" y="647.0" width="1" height="16.7" fill="#53be4a"/><rect x="748" y="663.7" width="1" height="12.0" fill="#9ad01b"/><rect x="748" y="675.7" width="1" height="5" fill="#f0d800"/><rect x="748" y="680.7" width="1" height="4.5" fill="#f4a800"/><rect x="748" y="685.2" width="1" height="4.9" fill="#f48400"/><rect x="749" y="522.7" width="1" height="29.0" fill="#191fb9"/><rect x="749" y="663.7" width="1" height="12.0" fill="#a3dc1c"/><rect x="749" y="675.7" width="1" height="5" fill="#f0d800"/><rect x="749" y="680.7" width="1" height="4.5" fill="#f4a800"/><rect x="749" y="685.2" width="1" height="4.9" fill="#f48400"/><rect x="750" y="556.7" width="1" height="11.6" fill="#1923bc"/><rect x="750" y="568.3" width="1" height="15.7" fill="#1a2ec5"/><rect x="750" y="584.0" width="1" height="21.4" fill="#1662cc"/><rect x="750" y="605.4" width="1" height="12.9" fill="#1087b4"/><rect x="750" y="618.3" width="1" height="12.1" fill="#14b1a2"/><rect x="750" y="630.4" width="1" height="16.6" fill="#1fbf7f"/><rect x="751" y="573.3" width="1" height="10.7" fill="#1a2dc1"/><rect x="751" y="584.0" width="1" height="21.4" fill="#1765d2"/><rect x="751" y="618.3" width="1" height="12.1" fill="#119b8e"/><rect x="751" y="630.4" width="1" height="16.6" fill="#1ca970"/><rect x="751" y="647.0" width="1" height="16.7" fill="#52bb49"/><rect x="751" y="663.7" width="1" height="12.0" fill="#aae61e"/><rect x="752" y="513.9" width="1" height="12.8" fill="#171cae"/><rect x="752" y="526.7" width="1" height="25.0" fill="#1f27e8"/><rect x="752" y="551.7" width="1" height="16.6" fill="#161fa9"/><rect x="752" y="568.3" width="1" height="15.7" fill="#1628a9"/><rect x="752" y="584.0" width="1" height="21.4" fill="#1868d9"/><rect x="752" y="605.4" width="1" height="12.9" fill="#129acd"/><rect x="752" y="647.0" width="1" height="16.7" fill="#5dd553"/><rect x="754" y="531.7" width="1" height="20.0" fill="#181eb4"/><rect x="754" y="551.7" width="1" height="16.6" fill="#1e2ae1"/><rect x="754" y="568.3" width="1" height="15.7" fill="#1f37ea"/><rect x="754" y="675.7" width="1" height="5" fill="#f0d800"/><rect x="754" y="680.7" width="1" height="4.5" fill="#f4a800"/><rect x="754" y="685.2" width="1" height="4.9" fill="#f48400"/><rect x="755" y="551.7" width="1" height="16.6" fill="#1b25cb"/><rect x="755" y="675.7" width="1" height="5" fill="#f0d800"/><rect x="755" y="680.7" width="1" height="4.5" fill="#f4a800"/><rect x="755" y="685.2" width="1" height="4.9" fill="#f48400"/><rect x="756" y="529.7" width="1" height="22.0" fill="#161ba3"/><rect x="756" y="551.7" width="1" height="16.6" fill="#202cec"/><rect x="756" y="568.3" width="1" height="15.7" fill="#1f37ea"/><rect x="756" y="584.0" width="1" height="21.4" fill="#1a72ed"/><rect x="756" y="605.4" width="1" height="12.9" fill="#1192c2"/><rect x="756" y="618.3" width="1" height="12.1" fill="#129e91"/><rect x="756" y="647.0" width="1" height="16.7" fill="#5cd252"/><rect x="756" y="663.7" width="1" height="12.0" fill="#96cc1a"/><rect x="756" y="675.7" width="1" height="5" fill="#f0d800"/><rect x="756" y="680.7" width="1" height="4.5" fill="#f4a800"/><rect x="756" y="685.2" width="1" height="4.9" fill="#f48400"/><rect x="758" y="675.7" width="1" height="5" fill="#f0d800"/><rect x="758" y="680.7" width="1" height="4.5" fill="#f4a800"/><rect x="758" y="685.2" width="1" height="4.9" fill="#f48400"/><rect x="759" y="564.3" width="1" height="19.7" fill="#1728ab"/><rect x="760" y="675.7" width="1" height="5" fill="#f0d800"/><rect x="760" y="680.7" width="1" height="4.5" fill="#f4a800"/><rect x="760" y="685.2" width="1" height="4.9" fill="#f48400"/><rect x="761" y="526.7" width="1" height="25.0" fill="#1b22cd"/><rect x="761" y="630.4" width="1" height="16.6" fill="#1cac72"/><rect x="761" y="663.7" width="1" height="12.0" fill="#a3dd1c"/><rect x="761" y="675.7" width="1" height="5" fill="#f0d800"/><rect x="761" y="680.7" width="1" height="4.5" fill="#f4a800"/><rect x="761" y="685.2" width="1" height="4.9" fill="#f48400"/><rect x="762" y="524.7" width="1" height="27.0" fill="#222afd"/><rect x="762" y="551.7" width="1" height="16.6" fill="#202ced"/><rect x="762" y="675.7" width="1" height="5" fill="#f0d800"/><rect x="762" y="680.7" width="1" height="4.5" fill="#f4a800"/><rect x="762" y="685.2" width="1" height="4.9" fill="#f48400"/><rect x="763" y="618.3" width="1" height="12.1" fill="#129f92"/><rect x="764" y="564.3" width="1" height="19.7" fill="#2139f4"/><rect x="764" y="584.0" width="1" height="21.4" fill="#1868d8"/><rect x="766" y="526.7" width="2" height="25.0" fill="#222bfd"/><rect x="766" y="650.0" width="2" height="13.7" fill="#5dd452"/><rect x="766" y="663.7" width="2" height="12.0" fill="#a4de1d"/><rect x="766" y="675.7" width="2" height="5" fill="#f0d800"/><rect x="766" y="680.7" width="2" height="4.5" fill="#f4a800"/><rect x="766" y="685.2" width="2" height="4.9" fill="#f48400"/><rect x="768" y="675.7" width="1" height="5" fill="#f0d800"/><rect x="768" y="680.7" width="1" height="4.5" fill="#f4a800"/><rect x="768" y="685.2" width="1" height="4.9" fill="#f48400"/><rect x="769" y="522.7" width="3" height="29.0" fill="#1e25de"/><rect x="769" y="551.7" width="3" height="16.6" fill="#161ea2"/><rect x="769" y="568.3" width="3" height="15.7" fill="#2038ed"/><rect x="769" y="584.0" width="3" height="21.4" fill="#1764d1"/><rect x="769" y="623.3" width="3" height="7.1" fill="#12a496"/><rect x="769" y="630.4" width="3" height="16.6" fill="#1db075"/><rect x="769" y="647.0" width="3" height="16.7" fill="#5bd051"/><rect x="772" y="526.7" width="2" height="25.0" fill="#1a20c1"/><rect x="772" y="551.7" width="2" height="16.6" fill="#1b25c9"/><rect x="772" y="568.3" width="2" height="15.7" fill="#1e36e3"/><rect x="772" y="663.7" width="2" height="12.0" fill="#99cf1b"/><rect x="772" y="675.7" width="2" height="5" fill="#f0d800"/><rect x="772" y="680.7" width="2" height="4.5" fill="#f4a800"/><rect x="772" y="685.2" width="2" height="4.9" fill="#f48400"/><rect x="774" y="675.7" width="1" height="5" fill="#f0d800"/><rect x="774" y="680.7" width="1" height="4.5" fill="#f4a800"/><rect x="774" y="685.2" width="1" height="4.9" fill="#f48400"/><rect x="775" y="526.7" width="1" height="25.0" fill="#2028ee"/><rect x="775" y="551.7" width="1" height="16.6" fill="#1821b1"/><rect x="775" y="568.3" width="1" height="15.7" fill="#1c31d1"/><rect x="775" y="621.3" width="1" height="9.1" fill="#13aa9c"/><rect x="775" y="668.7" width="1" height="7.0" fill="#9ed61c"/><rect x="776" y="522.7" width="1" height="29.0" fill="#1d24d8"/><rect x="776" y="551.7" width="1" height="16.6" fill="#212df4"/><rect x="776" y="568.3" width="1" height="15.7" fill="#1729af"/><rect x="776" y="584.0" width="1" height="21.4" fill="#1763ce"/><rect x="776" y="618.3" width="1" height="12.1" fill="#13ac9d"/><rect x="777" y="529.7" width="1" height="22.0" fill="#1a20c1"/><rect x="777" y="551.7" width="1" height="16.6" fill="#1c27d5"/><rect x="777" y="568.3" width="1" height="15.7" fill="#1e34dd"/><rect x="778" y="675.7" width="2" height="5" fill="#f0d800"/><rect x="778" y="680.7" width="2" height="4.5" fill="#f4a800"/><rect x="778" y="685.2" width="2" height="4.9" fill="#f48400"/><rect x="780" y="529.7" width="1" height="22.0" fill="#181eb2"/><rect x="780" y="573.3" width="1" height="10.7" fill="#2038ee"/><rect x="780" y="663.7" width="1" height="12.0" fill="#a5df1d"/><rect x="780" y="675.7" width="1" height="5" fill="#f0d800"/><rect x="780" y="680.7" width="1" height="4.5" fill="#f4a800"/><rect x="780" y="685.2" width="1" height="4.9" fill="#f48400"/><rect x="781" y="675.7" width="1" height="5" fill="#f0d800"/><rect x="781" y="680.7" width="1" height="4.5" fill="#f4a800"/><rect x="781" y="685.2" width="1" height="4.9" fill="#f48400"/><rect x="782" y="551.7" width="1" height="16.6" fill="#1b25c7"/><rect x="782" y="568.3" width="1" height="15.7" fill="#1b2fc9"/><rect x="782" y="584.0" width="1" height="21.4" fill="#1869da"/><rect x="782" y="668.7" width="1" height="7.0" fill="#9dd41b"/><rect x="782" y="675.7" width="1" height="5" fill="#f0d800"/><rect x="782" y="680.7" width="1" height="4.5" fill="#f4a800"/><rect x="782" y="685.2" width="1" height="4.9" fill="#f48400"/><rect x="783" y="513.9" width="1" height="12.8" fill="#1e25e2"/><rect x="783" y="526.7" width="1" height="25.0" fill="#191fb8"/><rect x="783" y="551.7" width="1" height="16.6" fill="#1d28da"/><rect x="783" y="568.3" width="1" height="15.7" fill="#1b2fc9"/><rect x="783" y="584.0" width="1" height="21.4" fill="#196ce0"/><rect x="783" y="605.4" width="1" height="12.9" fill="#118ebe"/><rect x="783" y="618.3" width="1" height="12.1" fill="#15b8a8"/><rect x="783" y="630.4" width="1" height="16.6" fill="#1ca970"/><rect x="783" y="647.0" width="1" height="16.7" fill="#51b948"/><rect x="783" y="663.7" width="1" height="12.0" fill="#9cd31b"/><rect x="783" y="675.7" width="1" height="5" fill="#f0d800"/><rect x="783" y="680.7" width="1" height="4.5" fill="#f4a800"/><rect x="783" y="685.2" width="1" height="4.9" fill="#f48400"/><rect x="784" y="529.7" width="1" height="22.0" fill="#1b22ce"/><rect x="784" y="551.7" width="1" height="16.6" fill="#202df1"/><rect x="784" y="568.3" width="1" height="15.7" fill="#1a2ec3"/><rect x="784" y="584.0" width="1" height="21.4" fill="#186add"/><rect x="785" y="582.0" width="1" height="23.4" fill="#1b75f4"/><rect x="785" y="605.4" width="1" height="12.9" fill="#129dd1"/><rect x="785" y="652.0" width="1" height="11.7" fill="#5ed653"/><rect x="785" y="663.7" width="1" height="12.0" fill="#a0d91c"/><rect x="785" y="675.7" width="1" height="5" fill="#f0d800"/><rect x="785" y="680.7" width="1" height="4.5" fill="#f4a800"/><rect x="785" y="685.2" width="1" height="4.9" fill="#f48400"/><rect x="787" y="526.7" width="3" height="25.0" fill="#222afa"/><rect x="787" y="573.3" width="3" height="10.7" fill="#213bf9"/><rect x="787" y="584.0" width="3" height="21.4" fill="#196de2"/><rect x="790" y="643.0" width="2" height="20.7" fill="#56c54d"/><rect x="790" y="663.7" width="2" height="12.0" fill="#a5df1d"/><rect x="790" y="675.7" width="2" height="5" fill="#f0d800"/><rect x="790" y="680.7" width="2" height="4.5" fill="#f4a800"/><rect x="790" y="685.2" width="2" height="4.9" fill="#f48400"/><rect x="792" y="556.7" width="1" height="11.6" fill="#171fab"/><rect x="792" y="568.3" width="1" height="15.7" fill="#1729b0"/><rect x="793" y="582.0" width="1" height="23.4" fill="#1868d8"/><rect x="793" y="605.4" width="1" height="12.9" fill="#1194c5"/><rect x="793" y="618.3" width="1" height="12.1" fill="#13a698"/><rect x="794" y="524.7" width="1" height="27.0" fill="#1e25dd"/><rect x="795" y="529.7" width="2" height="22.0" fill="#1c24d4"/><rect x="795" y="551.7" width="2" height="16.6" fill="#1b25c9"/><rect x="795" y="568.3" width="2" height="15.7" fill="#1d32d6"/><rect x="795" y="645.0" width="2" height="18.7" fill="#51b848"/><rect x="800" y="547.7" width="2" height="20.6" fill="#1720b0"/><rect x="800" y="568.3" width="2" height="15.7" fill="#1627a7"/><rect x="800" y="584.0" width="2" height="21.4" fill="#196de3"/><rect x="800" y="605.4" width="2" height="12.9" fill="#1087b5"/><rect x="800" y="618.3" width="2" height="12.1" fill="#14b7a7"/><rect x="800" y="630.4" width="2" height="16.6" fill="#21c986"/><rect x="800" y="647.0" width="2" height="16.7" fill="#53bd49"/><rect x="800" y="663.7" width="2" height="12.0" fill="#b2f11f"/><rect x="800" y="675.7" width="2" height="5" fill="#f0d800"/><rect x="800" y="680.7" width="2" height="4.5" fill="#f4a800"/><rect x="800" y="685.2" width="2" height="4.9" fill="#f48400"/><rect x="804" y="529.7" width="1" height="22.0" fill="#171dae"/><rect x="804" y="551.7" width="1" height="16.6" fill="#1822b7"/><rect x="804" y="675.7" width="1" height="5" fill="#f0d800"/><rect x="804" y="680.7" width="1" height="4.5" fill="#f4a800"/><rect x="804" y="685.2" width="1" height="4.9" fill="#f48400"/><rect x="805" y="675.7" width="3" height="5" fill="#f0d800"/><rect x="805" y="680.7" width="3" height="4.5" fill="#f4a800"/><rect x="805" y="685.2" width="3" height="4.9" fill="#f48400"/><rect x="808" y="573.3" width="1" height="10.7" fill="#1a2dc1"/><rect x="809" y="551.7" width="1" height="16.6" fill="#1b25ca"/><rect x="809" y="568.3" width="1" height="15.7" fill="#1d32d6"/><rect x="809" y="584.0" width="1" height="21.4" fill="#196de1"/><rect x="809" y="605.4" width="1" height="12.9" fill="#1194c6"/><rect x="809" y="618.3" width="1" height="12.1" fill="#119c8e"/><rect x="809" y="630.4" width="1" height="16.6" fill="#20c482"/><rect x="809" y="647.0" width="1" height="16.7" fill="#5dd452"/><rect x="809" y="663.7" width="1" height="12.0" fill="#9fd71c"/><rect x="809" y="675.7" width="1" height="5" fill="#f0d800"/><rect x="809" y="680.7" width="1" height="4.5" fill="#f4a800"/><rect x="809" y="685.2" width="1" height="4.9" fill="#f48400"/><rect x="810" y="603.4" width="1" height="14.9" fill="#108cbb"/><rect x="810" y="675.7" width="1" height="5" fill="#f0d800"/><rect x="810" y="680.7" width="1" height="4.5" fill="#f4a800"/><rect x="810" y="685.2" width="1" height="4.9" fill="#f48400"/><rect x="811" y="526.7" width="2" height="25.0" fill="#181eb3"/><rect x="811" y="551.7" width="2" height="16.6" fill="#1923bc"/><rect x="811" y="568.3" width="2" height="15.7" fill="#1c31d2"/><rect x="813" y="522.7" width="2" height="29.0" fill="#1a21c3"/><rect x="813" y="551.7" width="2" height="16.6" fill="#212df5"/><rect x="813" y="568.3" width="2" height="15.7" fill="#1c31cf"/><rect x="813" y="584.0" width="2" height="21.4" fill="#1766d3"/><rect x="815" y="618.3" width="2" height="12.1" fill="#129d90"/><rect x="817" y="582.0" width="3" height="23.4" fill="#1a73ee"/><rect x="817" y="605.4" width="3" height="12.9" fill="#1088b6"/><rect x="817" y="618.3" width="3" height="12.1" fill="#14b7a7"/><rect x="817" y="630.4" width="3" height="16.6" fill="#1fba7c"/><rect x="817" y="663.7" width="3" height="12.0" fill="#a3dd1c"/><rect x="817" y="675.7" width="3" height="5" fill="#f0d800"/><rect x="817" y="680.7" width="3" height="4.5" fill="#f4a800"/><rect x="817" y="685.2" width="3" height="4.9" fill="#f48400"/><rect x="820" y="675.7" width="2" height="5" fill="#f0d800"/><rect x="820" y="680.7" width="2" height="4.5" fill="#f4a800"/><rect x="820" y="685.2" width="2" height="4.9" fill="#f48400"/><rect x="822" y="531.7" width="2" height="20.0" fill="#191fbb"/><rect x="822" y="551.7" width="2" height="16.6" fill="#202df2"/><rect x="822" y="568.3" width="2" height="15.7" fill="#1c31d2"/><rect x="824" y="556.7" width="1" height="11.6" fill="#1d28d7"/><rect x="826" y="524.7" width="1" height="27.0" fill="#1b22c9"/><rect x="826" y="551.7" width="1" height="16.6" fill="#212ef9"/><rect x="826" y="568.3" width="1" height="15.7" fill="#182ab3"/><rect x="826" y="584.0" width="1" height="21.4" fill="#1765d2"/><rect x="826" y="605.4" width="1" height="12.9" fill="#1298cb"/><rect x="827" y="564.3" width="3" height="19.7" fill="#2038ec"/><rect x="827" y="605.4" width="3" height="12.9" fill="#1191c2"/><rect x="830" y="568.3" width="2" height="15.7" fill="#1a2dc1"/><rect x="830" y="675.7" width="2" height="5" fill="#f0d800"/><rect x="830" y="680.7" width="2" height="4.5" fill="#f4a800"/><rect x="830" y="685.2" width="2" height="4.9" fill="#f48400"/><rect x="832" y="675.7" width="2" height="5" fill="#f0d800"/><rect x="832" y="680.7" width="2" height="4.5" fill="#f4a800"/><rect x="832" y="685.2" width="2" height="4.9" fill="#f48400"/><rect x="834" y="529.7" width="3" height="22.0" fill="#1e26e4"/><rect x="834" y="551.7" width="3" height="16.6" fill="#1720b0"/><rect x="834" y="568.3" width="3" height="15.7" fill="#182bb6"/><rect x="834" y="584.0" width="3" height="21.4" fill="#1a71eb"/><rect x="834" y="675.7" width="3" height="5" fill="#f0d800"/><rect x="834" y="680.7" width="3" height="4.5" fill="#f4a800"/><rect x="834" y="685.2" width="3" height="4.9" fill="#f48400"/><rect x="838" y="524.7" width="2" height="27.0" fill="#2129f6"/><rect x="838" y="551.7" width="2" height="16.6" fill="#161ea3"/><rect x="838" y="568.3" width="2" height="15.7" fill="#192cb9"/><rect x="840" y="526.7" width="1" height="25.0" fill="#1a21c6"/><rect x="840" y="630.4" width="1" height="16.6" fill="#21c885"/><rect x="841" y="675.7" width="1" height="5" fill="#f0d800"/><rect x="841" y="680.7" width="1" height="4.5" fill="#f4a800"/><rect x="841" y="685.2" width="1" height="4.9" fill="#f48400"/><rect x="844" y="621.3" width="3" height="9.1" fill="#129f91"/><rect x="844" y="675.7" width="3" height="5" fill="#f0d800"/><rect x="844" y="680.7" width="3" height="4.5" fill="#f4a800"/><rect x="844" y="685.2" width="3" height="4.9" fill="#f48400"/><rect x="847" y="526.7" width="1" height="25.0" fill="#1b22cb"/><rect x="847" y="571.3" width="1" height="12.7" fill="#2039f2"/><rect x="848" y="635.4" width="2" height="11.6" fill="#1db176"/><rect x="848" y="647.0" width="2" height="16.7" fill="#59cb4f"/><rect x="850" y="522.7" width="1" height="29.0" fill="#181eb4"/><rect x="850" y="551.7" width="1" height="16.6" fill="#161fa9"/><rect x="855" y="526.7" width="1" height="25.0" fill="#171daf"/><rect x="855" y="551.7" width="1" height="16.6" fill="#1c27d1"/><rect x="855" y="647.0" width="1" height="16.7" fill="#51b948"/><rect x="855" y="675.7" width="1" height="5" fill="#f0d800"/><rect x="855" y="680.7" width="1" height="4.5" fill="#f4a800"/><rect x="855" y="685.2" width="1" height="4.9" fill="#f48400"/><rect x="859" y="630.4" width="1" height="16.6" fill="#20c181"/><rect x="861" y="526.7" width="2" height="25.0" fill="#161ca5"/><rect x="861" y="551.7" width="2" height="16.6" fill="#1c27d5"/><rect x="861" y="568.3" width="2" height="15.7" fill="#192dbf"/><rect x="861" y="584.0" width="2" height="21.4" fill="#1b76f4"/><rect x="861" y="605.4" width="2" height="12.9" fill="#1195c7"/><rect x="861" y="633.4" width="2" height="13.6" fill="#21c785"/><rect x="861" y="647.0" width="2" height="16.7" fill="#58c94e"/><rect x="861" y="663.7" width="2" height="12.0" fill="#b0ee1f"/><rect x="861" y="675.7" width="2" height="5" fill="#f0d800"/><rect x="861" y="680.7" width="2" height="4.5" fill="#f4a800"/><rect x="861" y="685.2" width="2" height="4.9" fill="#f48400"/><rect x="863" y="582.0" width="1" height="23.4" fill="#1a71eb"/><rect x="864" y="568.3" width="1" height="15.7" fill="#2139f4"/><rect x="864" y="675.7" width="1" height="5" fill="#f0d800"/><rect x="864" y="680.7" width="1" height="4.5" fill="#f4a800"/><rect x="864" y="685.2" width="1" height="4.9" fill="#f48400"/><rect x="865" y="547.7" width="1" height="20.6" fill="#1f2bea"/><rect x="867" y="529.7" width="1" height="22.0" fill="#171dae"/><rect x="868" y="513.9" width="1" height="12.8" fill="#1a1fc0"/><rect x="868" y="526.7" width="1" height="25.0" fill="#1f26e5"/><rect x="868" y="551.7" width="1" height="16.6" fill="#1c27d4"/><rect x="868" y="568.3" width="1" height="15.7" fill="#192cbc"/><rect x="868" y="584.0" width="1" height="21.4" fill="#1b76f4"/><rect x="868" y="614.3" width="1" height="16.1" fill="#14b7a7"/><rect x="868" y="675.7" width="1" height="5" fill="#f0d800"/><rect x="868" y="680.7" width="1" height="4.5" fill="#f4a800"/><rect x="868" y="685.2" width="1" height="4.9" fill="#f48400"/><rect x="869" y="650.0" width="2" height="13.7" fill="#52bb49"/><rect x="869" y="663.7" width="2" height="12.0" fill="#ace81e"/><rect x="869" y="675.7" width="2" height="5" fill="#f0d800"/><rect x="869" y="680.7" width="2" height="4.5" fill="#f4a800"/><rect x="869" y="685.2" width="2" height="4.9" fill="#f48400"/><rect x="871" y="526.7" width="1" height="25.0" fill="#2028ee"/><rect x="871" y="551.7" width="1" height="16.6" fill="#202cef"/><rect x="871" y="568.3" width="1" height="15.7" fill="#2038ee"/><rect x="871" y="645.0" width="1" height="18.7" fill="#5cd352"/><rect x="872" y="524.7" width="2" height="27.0" fill="#2029f2"/><rect x="872" y="582.0" width="2" height="23.4" fill="#196fe7"/><rect x="874" y="551.7" width="1" height="16.6" fill="#161fa6"/><rect x="874" y="568.3" width="1" height="15.7" fill="#1728aa"/><rect x="874" y="584.0" width="1" height="21.4" fill="#186bde"/><rect x="874" y="605.4" width="1" height="12.9" fill="#129ace"/><rect x="874" y="675.7" width="1" height="5" fill="#f0d800"/><rect x="874" y="680.7" width="1" height="4.5" fill="#f4a800"/><rect x="874" y="685.2" width="1" height="4.9" fill="#f48400"/><rect x="875" y="526.7" width="1" height="25.0" fill="#2129f4"/><rect x="875" y="551.7" width="1" height="16.6" fill="#1f2be9"/><rect x="875" y="568.3" width="1" height="15.7" fill="#2038ef"/><rect x="875" y="630.4" width="1" height="16.6" fill="#1eb679"/><rect x="875" y="647.0" width="1" height="16.7" fill="#53bd4a"/><rect x="876" y="522.7" width="1" height="29.0" fill="#1b21c7"/><rect x="876" y="551.7" width="1" height="16.6" fill="#1923bd"/><rect x="877" y="526.7" width="2" height="25.0" fill="#161ca6"/><rect x="877" y="551.7" width="2" height="16.6" fill="#212df5"/><rect x="877" y="568.3" width="2" height="15.7" fill="#192cbb"/><rect x="877" y="584.0" width="2" height="21.4" fill="#186add"/><rect x="880" y="556.7" width="1" height="11.6" fill="#212ef8"/><rect x="880" y="675.7" width="1" height="5" fill="#f0d800"/><rect x="880" y="680.7" width="1" height="4.5" fill="#f4a800"/><rect x="880" y="685.2" width="1" height="4.9" fill="#f48400"/><rect x="881" y="666.7" width="1" height="9.0" fill="#a7e21d"/><rect x="881" y="675.7" width="1" height="5" fill="#f0d800"/><rect x="881" y="680.7" width="1" height="4.5" fill="#f4a800"/><rect x="881" y="685.2" width="1" height="4.9" fill="#f48400"/><rect x="882" y="526.7" width="1" height="25.0" fill="#181eb3"/><rect x="882" y="551.7" width="1" height="16.6" fill="#151ea1"/><rect x="882" y="568.3" width="1" height="15.7" fill="#1e36e3"/><rect x="882" y="626.4" width="1" height="20.6" fill="#1cab72"/><rect x="882" y="663.7" width="1" height="12.0" fill="#aae71e"/><rect x="882" y="675.7" width="1" height="5" fill="#f0d800"/><rect x="882" y="680.7" width="1" height="4.5" fill="#f4a800"/><rect x="882" y="685.2" width="1" height="4.9" fill="#f48400"/><rect x="883" y="547.7" width="1" height="20.6" fill="#1d27d6"/><rect x="883" y="568.3" width="1" height="15.7" fill="#213af8"/><rect x="883" y="675.7" width="1" height="5" fill="#f0d800"/><rect x="883" y="680.7" width="1" height="4.5" fill="#f4a800"/><rect x="883" y="685.2" width="1" height="4.9" fill="#f48400"/><rect x="885" y="526.7" width="1" height="25.0" fill="#1f27e7"/><rect x="885" y="647.0" width="1" height="16.7" fill="#5bd051"/><rect x="885" y="663.7" width="1" height="12.0" fill="#9ad01b"/><rect x="885" y="675.7" width="1" height="5" fill="#f0d800"/><rect x="885" y="680.7" width="1" height="4.5" fill="#f4a800"/><rect x="885" y="685.2" width="1" height="4.9" fill="#f48400"/><rect x="886" y="526.7" width="1" height="25.0" fill="#161ca7"/><rect x="886" y="551.7" width="1" height="16.6" fill="#1d28d9"/><rect x="886" y="568.3" width="1" height="15.7" fill="#1a2ec4"/><rect x="886" y="584.0" width="1" height="21.4" fill="#186adb"/><rect x="886" y="605.4" width="1" height="12.9" fill="#1297c9"/><rect x="886" y="618.3" width="1" height="12.1" fill="#13aa9c"/><rect x="891" y="663.7" width="1" height="12.0" fill="#a0d91c"/><rect x="891" y="675.7" width="1" height="5" fill="#f0d800"/><rect x="891" y="680.7" width="1" height="4.5" fill="#f4a800"/><rect x="891" y="685.2" width="1" height="4.9" fill="#f48400"/><rect x="892" y="522.7" width="2" height="29.0" fill="#181eb3"/><rect x="892" y="551.7" width="2" height="16.6" fill="#1e29df"/><rect x="892" y="568.3" width="2" height="15.7" fill="#1627a4"/><rect x="892" y="584.0" width="2" height="21.4" fill="#186adc"/><rect x="892" y="675.7" width="2" height="5" fill="#f0d800"/><rect x="892" y="680.7" width="2" height="4.5" fill="#f4a800"/><rect x="892" y="685.2" width="2" height="4.9" fill="#f48400"/><rect x="894" y="568.3" width="1" height="15.7" fill="#1e35e1"/><rect x="894" y="584.0" width="1" height="21.4" fill="#1765d2"/><rect x="894" y="605.4" width="1" height="12.9" fill="#1296c8"/><rect x="894" y="618.3" width="1" height="12.1" fill="#14b5a5"/><rect x="894" y="630.4" width="1" height="16.6" fill="#1ca971"/><rect x="894" y="647.0" width="1" height="16.7" fill="#50b647"/><rect x="894" y="663.7" width="1" height="12.0" fill="#a6e11d"/><rect x="894" y="675.7" width="1" height="5" fill="#f0d800"/><rect x="894" y="680.7" width="1" height="4.5" fill="#f4a800"/><rect x="894" y="685.2" width="1" height="4.9" fill="#f48400"/><rect x="895" y="566.3" width="1" height="17.7" fill="#1e35e2"/><rect x="896" y="675.7" width="2" height="5" fill="#f0d800"/><rect x="896" y="680.7" width="2" height="4.5" fill="#f4a800"/><rect x="896" y="685.2" width="2" height="4.9" fill="#f48400"/><rect x="898" y="663.7" width="1" height="12.0" fill="#a9e51d"/><rect x="898" y="675.7" width="1" height="5" fill="#f0d800"/><rect x="898" y="680.7" width="1" height="4.5" fill="#f4a800"/><rect x="898" y="685.2" width="1" height="4.9" fill="#f48400"/><rect x="899" y="551.7" width="1" height="16.6" fill="#1e2ae2"/><rect x="899" y="666.7" width="1" height="9.0" fill="#a5e01d"/><rect x="899" y="675.7" width="1" height="5" fill="#f0d800"/><rect x="899" y="680.7" width="1" height="4.5" fill="#f4a800"/><rect x="899" y="685.2" width="1" height="4.9" fill="#f48400"/><rect x="900" y="551.7" width="1" height="16.6" fill="#1821b2"/><rect x="900" y="568.3" width="1" height="15.7" fill="#2038ee"/><rect x="900" y="584.0" width="1" height="21.4" fill="#1764d1"/><rect x="900" y="618.3" width="1" height="12.1" fill="#14afa0"/><rect x="900" y="652.0" width="1" height="11.7" fill="#5ace50"/><rect x="900" y="675.7" width="1" height="5" fill="#f0d800"/><rect x="900" y="680.7" width="1" height="4.5" fill="#f4a800"/><rect x="900" y="685.2" width="1" height="4.9" fill="#f48400"/><rect x="901" y="526.7" width="3" height="25.0" fill="#1e26e3"/><rect x="901" y="551.7" width="3" height="16.6" fill="#1f2beb"/><rect x="901" y="661.7" width="3" height="14.0" fill="#9ad11b"/><rect x="901" y="675.7" width="3" height="5" fill="#f0d800"/><rect x="901" y="680.7" width="3" height="4.5" fill="#f4a800"/><rect x="901" y="685.2" width="3" height="4.9" fill="#f48400"/><rect x="904" y="551.7" width="1" height="16.6" fill="#1e2ae3"/><rect x="906" y="522.7" width="1" height="29.0" fill="#222bfe"/><rect x="908" y="529.7" width="1" height="22.0" fill="#212af8"/><rect x="908" y="551.7" width="1" height="16.6" fill="#161ea5"/><rect x="908" y="587.0" width="1" height="18.4" fill="#1a71ea"/><rect x="908" y="605.4" width="1" height="12.9" fill="#1195c7"/><rect x="908" y="618.3" width="1" height="12.1" fill="#14b5a6"/><rect x="908" y="630.4" width="1" height="16.6" fill="#20c483"/><rect x="908" y="647.0" width="1" height="16.7" fill="#4fb546"/><rect x="908" y="663.7" width="1" height="12.0" fill="#9fd81c"/><rect x="908" y="675.7" width="1" height="5" fill="#f0d800"/><rect x="908" y="680.7" width="1" height="4.5" fill="#f4a800"/><rect x="908" y="685.2" width="1" height="4.9" fill="#f48400"/><rect x="909" y="526.7" width="1" height="25.0" fill="#2129f5"/><rect x="909" y="551.7" width="1" height="16.6" fill="#1821b5"/><rect x="909" y="568.3" width="1" height="15.7" fill="#1e34de"/><rect x="910" y="526.7" width="2" height="25.0" fill="#222bfd"/><rect x="910" y="551.7" width="2" height="16.6" fill="#1b25c9"/><rect x="910" y="568.3" width="2" height="15.7" fill="#1626a4"/><rect x="910" y="584.0" width="2" height="21.4" fill="#1a73f0"/><rect x="910" y="605.4" width="2" height="12.9" fill="#1193c4"/><rect x="910" y="675.7" width="2" height="5" fill="#f0d800"/><rect x="910" y="680.7" width="2" height="4.5" fill="#f4a800"/><rect x="910" y="685.2" width="2" height="4.9" fill="#f48400"/><rect x="912" y="524.7" width="1" height="27.0" fill="#212af7"/><rect x="912" y="551.7" width="1" height="16.6" fill="#161fa7"/><rect x="912" y="568.3" width="1" height="15.7" fill="#223bfc"/><rect x="912" y="610.4" width="1" height="7.9" fill="#129dd1"/><rect x="912" y="647.0" width="1" height="16.7" fill="#5fd854"/><rect x="912" y="663.7" width="1" height="12.0" fill="#a9e51d"/><rect x="912" y="675.7" width="1" height="5" fill="#f0d800"/><rect x="912" y="680.7" width="1" height="4.5" fill="#f4a800"/><rect x="912" y="685.2" width="1" height="4.9" fill="#f48400"/><rect x="913" y="566.3" width="1" height="17.7" fill="#1729b0"/><rect x="914" y="551.7" width="1" height="16.6" fill="#161ea2"/><rect x="914" y="568.3" width="1" height="15.7" fill="#1f37ea"/><rect x="915" y="630.4" width="1" height="16.6" fill="#1fbe7f"/><rect x="915" y="647.0" width="1" height="16.7" fill="#59ca4f"/><rect x="915" y="663.7" width="1" height="12.0" fill="#97cd1a"/><rect x="915" y="675.7" width="1" height="5" fill="#f0d800"/><rect x="915" y="680.7" width="1" height="4.5" fill="#f4a800"/><rect x="915" y="685.2" width="1" height="4.9" fill="#f48400"/><rect x="916" y="582.0" width="2" height="23.4" fill="#1b74f1"/><rect x="916" y="616.3" width="2" height="14.1" fill="#12a193"/><rect x="916" y="668.7" width="2" height="7.0" fill="#aae61e"/><rect x="919" y="526.7" width="1" height="25.0" fill="#2129f6"/><rect x="919" y="551.7" width="1" height="16.6" fill="#1e29e0"/><rect x="919" y="568.3" width="1" height="15.7" fill="#1b30cb"/><rect x="919" y="584.0" width="1" height="21.4" fill="#1763ce"/><rect x="919" y="605.4" width="1" height="12.9" fill="#129dd1"/><rect x="919" y="618.3" width="1" height="12.1" fill="#14b3a3"/><rect x="919" y="630.4" width="1" height="16.6" fill="#20c080"/><rect x="919" y="666.7" width="1" height="9.0" fill="#96cc1a"/><rect x="919" y="675.7" width="1" height="5" fill="#f0d800"/><rect x="919" y="680.7" width="1" height="4.5" fill="#f4a800"/><rect x="919" y="685.2" width="1" height="4.9" fill="#f48400"/><rect x="920" y="526.7" width="2" height="25.0" fill="#1d25db"/><rect x="920" y="618.3" width="2" height="12.1" fill="#13ab9d"/><rect x="922" y="568.3" width="1" height="15.7" fill="#192bb8"/><rect x="922" y="603.4" width="1" height="14.9" fill="#1194c6"/><rect x="922" y="647.0" width="1" height="16.7" fill="#59cb4f"/><rect x="922" y="663.7" width="1" height="12.0" fill="#a6e11d"/><rect x="922" y="675.7" width="1" height="5" fill="#f0d800"/><rect x="922" y="680.7" width="1" height="4.5" fill="#f4a800"/><rect x="922" y="685.2" width="1" height="4.9" fill="#f48400"/><rect x="923" y="526.7" width="1" height="25.0" fill="#1e25de"/><rect x="923" y="551.7" width="1" height="16.6" fill="#161ea5"/><rect x="923" y="568.3" width="1" height="15.7" fill="#1b30cc"/><rect x="923" y="584.0" width="1" height="21.4" fill="#196de3"/><rect x="923" y="605.4" width="1" height="12.9" fill="#1299cd"/><rect x="923" y="618.3" width="1" height="12.1" fill="#14b2a3"/><rect x="923" y="630.4" width="1" height="16.6" fill="#1ca970"/><rect x="923" y="647.0" width="1" height="16.7" fill="#4fb546"/><rect x="923" y="663.7" width="1" height="12.0" fill="#b2f11f"/><rect x="923" y="675.7" width="1" height="5" fill="#f0d800"/><rect x="923" y="680.7" width="1" height="4.5" fill="#f4a800"/><rect x="923" y="685.2" width="1" height="4.9" fill="#f48400"/><rect x="925" y="526.7" width="1" height="25.0" fill="#191fba"/><rect x="925" y="551.7" width="1" height="16.6" fill="#1b25cb"/><rect x="926" y="635.4" width="1" height="11.6" fill="#1fbc7d"/><rect x="926" y="663.7" width="1" height="12.0" fill="#9ed61b"/><rect x="926" y="675.7" width="1" height="5" fill="#f0d800"/><rect x="926" y="680.7" width="1" height="4.5" fill="#f4a800"/><rect x="926" y="685.2" width="1" height="4.9" fill="#f48400"/><rect x="927" y="663.7" width="1" height="12.0" fill="#9ad11b"/><rect x="927" y="675.7" width="1" height="5" fill="#f0d800"/><rect x="927" y="680.7" width="1" height="4.5" fill="#f4a800"/><rect x="927" y="685.2" width="1" height="4.9" fill="#f48400"/><rect x="928" y="522.7" width="1" height="29.0" fill="#1f27e9"/><rect x="928" y="675.7" width="1" height="5" fill="#f0d800"/><rect x="928" y="680.7" width="1" height="4.5" fill="#f4a800"/><rect x="928" y="685.2" width="1" height="4.9" fill="#f48400"/><rect x="929" y="647.0" width="1" height="16.7" fill="#5bd051"/><rect x="929" y="663.7" width="1" height="12.0" fill="#9bd21b"/><rect x="929" y="675.7" width="1" height="5" fill="#f0d800"/><rect x="929" y="680.7" width="1" height="4.5" fill="#f4a800"/><rect x="929" y="685.2" width="1" height="4.9" fill="#f48400"/><rect x="930" y="526.7" width="2" height="25.0" fill="#1d24d7"/><rect x="930" y="551.7" width="2" height="16.6" fill="#1821b1"/><rect x="930" y="568.3" width="2" height="15.7" fill="#1f36e7"/><rect x="930" y="584.0" width="2" height="21.4" fill="#1763ce"/><rect x="930" y="605.4" width="2" height="12.9" fill="#139ed3"/><rect x="930" y="618.3" width="2" height="12.1" fill="#13ae9f"/><rect x="930" y="630.4" width="2" height="16.6" fill="#20c181"/><rect x="930" y="675.7" width="2" height="5" fill="#f0d800"/><rect x="930" y="680.7" width="2" height="4.5" fill="#f4a800"/><rect x="930" y="685.2" width="2" height="4.9" fill="#f48400"/><rect x="932" y="675.7" width="1" height="5" fill="#f0d800"/><rect x="932" y="680.7" width="1" height="4.5" fill="#f4a800"/><rect x="932" y="685.2" width="1" height="4.9" fill="#f48400"/><rect x="933" y="675.7" width="1" height="5" fill="#f0d800"/><rect x="933" y="680.7" width="1" height="4.5" fill="#f4a800"/><rect x="933" y="685.2" width="1" height="4.9" fill="#f48400"/><rect x="934" y="666.7" width="1" height="9.0" fill="#9ad01b"/><rect x="934" y="675.7" width="1" height="5" fill="#f0d800"/><rect x="934" y="680.7" width="1" height="4.5" fill="#f4a800"/><rect x="934" y="685.2" width="1" height="4.9" fill="#f48400"/><rect x="937" y="526.7" width="2" height="25.0" fill="#1b22cb"/><rect x="937" y="551.7" width="2" height="16.6" fill="#1b26ce"/><rect x="939" y="551.7" width="1" height="16.6" fill="#161fa8"/><rect x="939" y="605.4" width="1" height="12.9" fill="#118fbf"/><rect x="939" y="675.7" width="1" height="5" fill="#f0d800"/><rect x="939" y="680.7" width="1" height="4.5" fill="#f4a800"/><rect x="939" y="685.2" width="1" height="4.9" fill="#f48400"/><rect x="940" y="526.7" width="1" height="25.0" fill="#161ba4"/><rect x="940" y="551.7" width="1" height="16.6" fill="#202cee"/><rect x="940" y="568.3" width="1" height="15.7" fill="#1f37e8"/><rect x="940" y="584.0" width="1" height="21.4" fill="#1767d5"/><rect x="940" y="605.4" width="1" height="12.9" fill="#1195c6"/><rect x="941" y="580.0" width="3" height="25.4" fill="#196ee4"/><rect x="941" y="663.7" width="3" height="12.0" fill="#a2dc1c"/><rect x="941" y="675.7" width="3" height="5" fill="#f0d800"/><rect x="941" y="680.7" width="3" height="4.5" fill="#f4a800"/><rect x="941" y="685.2" width="3" height="4.9" fill="#f48400"/><rect x="944" y="526.7" width="1" height="25.0" fill="#222afb"/><rect x="944" y="580.0" width="1" height="25.4" fill="#1b76f4"/><rect x="944" y="605.4" width="1" height="12.9" fill="#108bb9"/><rect x="945" y="659.7" width="1" height="16.0" fill="#99cf1b"/><rect x="945" y="675.7" width="1" height="5" fill="#f0d800"/><rect x="945" y="680.7" width="1" height="4.5" fill="#f4a800"/><rect x="945" y="685.2" width="1" height="4.9" fill="#f48400"/><rect x="946" y="526.7" width="1" height="25.0" fill="#171db0"/><rect x="946" y="551.7" width="1" height="16.6" fill="#212ef8"/><rect x="946" y="580.0" width="1" height="25.4" fill="#186add"/><rect x="946" y="618.3" width="1" height="12.1" fill="#14b7a7"/><rect x="946" y="659.7" width="1" height="16.0" fill="#98ce1a"/><rect x="946" y="675.7" width="1" height="5" fill="#f0d800"/><rect x="946" y="680.7" width="1" height="4.5" fill="#f4a800"/><rect x="946" y="685.2" width="1" height="4.9" fill="#f48400"/><rect x="949" y="630.4" width="1" height="16.6" fill="#1cac72"/><rect x="949" y="647.0" width="1" height="16.7" fill="#50b747"/><rect x="949" y="675.7" width="1" height="5" fill="#f0d800"/><rect x="949" y="680.7" width="1" height="4.5" fill="#f4a800"/><rect x="949" y="685.2" width="1" height="4.9" fill="#f48400"/><rect x="950" y="610.4" width="1" height="7.9" fill="#118fbf"/><rect x="951" y="564.3" width="1" height="19.7" fill="#2139f4"/><rect x="951" y="605.4" width="1" height="12.9" fill="#1191c2"/><rect x="951" y="618.3" width="1" height="12.1" fill="#14b4a5"/><rect x="951" y="630.4" width="1" height="16.6" fill="#1ca971"/><rect x="951" y="647.0" width="1" height="16.7" fill="#59cb4f"/><rect x="952" y="522.7" width="1" height="29.0" fill="#1e25dd"/><rect x="953" y="618.3" width="1" height="12.1" fill="#14b4a5"/><rect x="953" y="666.7" width="1" height="9.0" fill="#b2f11f"/><rect x="953" y="675.7" width="1" height="5" fill="#f0d800"/><rect x="953" y="680.7" width="1" height="4.5" fill="#f4a800"/><rect x="953" y="685.2" width="1" height="4.9" fill="#f48400"/><rect x="954" y="526.7" width="1" height="25.0" fill="#161ca6"/><rect x="954" y="551.7" width="1" height="16.6" fill="#1a24c6"/><rect x="954" y="568.3" width="1" height="15.7" fill="#1e35e1"/><rect x="954" y="675.7" width="1" height="5" fill="#f0d800"/><rect x="954" y="680.7" width="1" height="4.5" fill="#f4a800"/><rect x="954" y="685.2" width="1" height="4.9" fill="#f48400"/><rect x="957" y="526.7" width="1" height="25.0" fill="#2129f4"/><rect x="957" y="571.3" width="1" height="12.7" fill="#2038ec"/><rect x="958" y="531.7" width="2" height="20.0" fill="#1d24d6"/><rect x="958" y="551.7" width="2" height="16.6" fill="#161fa6"/><rect x="958" y="568.3" width="2" height="15.7" fill="#1626a3"/><rect x="958" y="643.0" width="2" height="20.7" fill="#5acf50"/><rect x="958" y="675.7" width="2" height="5" fill="#f0d800"/><rect x="958" y="680.7" width="2" height="4.5" fill="#f4a800"/><rect x="958" y="685.2" width="2" height="4.9" fill="#f48400"/><rect x="960" y="556.7" width="1" height="11.6" fill="#161fa6"/><rect x="961" y="614.3" width="2" height="16.1" fill="#15b8a8"/><rect x="961" y="630.4" width="2" height="16.6" fill="#1dae74"/><rect x="961" y="647.0" width="2" height="16.7" fill="#4fb446"/><rect x="961" y="663.7" width="2" height="12.0" fill="#a0d91c"/><rect x="961" y="675.7" width="2" height="5" fill="#f0d800"/><rect x="961" y="680.7" width="2" height="4.5" fill="#f4a800"/><rect x="961" y="685.2" width="2" height="4.9" fill="#f48400"/><rect x="963" y="529.7" width="1" height="22.0" fill="#1c23cf"/><rect x="963" y="551.7" width="1" height="16.6" fill="#212ef8"/><rect x="963" y="568.3" width="1" height="15.7" fill="#1b2fc8"/><rect x="963" y="584.0" width="1" height="21.4" fill="#1662cc"/><rect x="963" y="661.7" width="1" height="14.0" fill="#9fd71c"/><rect x="963" y="675.7" width="1" height="5" fill="#f0d800"/><rect x="963" y="680.7" width="1" height="4.5" fill="#f4a800"/><rect x="963" y="685.2" width="1" height="4.9" fill="#f48400"/><rect x="964" y="513.9" width="3" height="12.8" fill="#1d23d9"/><rect x="964" y="526.7" width="3" height="25.0" fill="#1f27eb"/><rect x="964" y="551.7" width="3" height="16.6" fill="#1923bf"/><rect x="964" y="568.3" width="3" height="15.7" fill="#192dbe"/><rect x="964" y="675.7" width="3" height="5" fill="#f0d800"/><rect x="964" y="680.7" width="3" height="4.5" fill="#f4a800"/><rect x="964" y="685.2" width="3" height="4.9" fill="#f48400"/><rect x="968" y="573.3" width="2" height="10.7" fill="#2038ef"/><rect x="968" y="584.0" width="2" height="21.4" fill="#196ce1"/><rect x="968" y="605.4" width="2" height="12.9" fill="#1299cc"/><rect x="968" y="635.4" width="2" height="11.6" fill="#20c080"/><rect x="968" y="659.7" width="2" height="16.0" fill="#9dd51b"/><rect x="968" y="675.7" width="2" height="5" fill="#f0d800"/><rect x="968" y="680.7" width="2" height="4.5" fill="#f4a800"/><rect x="968" y="685.2" width="2" height="4.9" fill="#f48400"/><rect x="970" y="675.7" width="1" height="5" fill="#f0d800"/><rect x="970" y="680.7" width="1" height="4.5" fill="#f4a800"/><rect x="970" y="685.2" width="1" height="4.9" fill="#f48400"/><rect x="971" y="522.7" width="1" height="29.0" fill="#1b21c8"/><rect x="971" y="566.3" width="1" height="17.7" fill="#2038ef"/><rect x="971" y="610.4" width="1" height="7.9" fill="#1088b6"/><rect x="972" y="526.7" width="1" height="25.0" fill="#1e26e1"/><rect x="972" y="551.7" width="1" height="16.6" fill="#1c26d0"/><rect x="972" y="568.3" width="1" height="15.7" fill="#192dbe"/><rect x="972" y="675.7" width="1" height="5" fill="#f0d800"/><rect x="972" y="680.7" width="1" height="4.5" fill="#f4a800"/><rect x="972" y="685.2" width="1" height="4.9" fill="#f48400"/><rect x="973" y="524.7" width="1" height="27.0" fill="#1b22cd"/><rect x="974" y="531.7" width="1" height="20.0" fill="#1920bf"/><rect x="974" y="551.7" width="1" height="16.6" fill="#1c27d2"/><rect x="974" y="568.3" width="1" height="15.7" fill="#1f36e5"/><rect x="974" y="584.0" width="1" height="21.4" fill="#1b75f3"/><rect x="974" y="605.4" width="1" height="12.9" fill="#1190c0"/><rect x="974" y="618.3" width="1" height="12.1" fill="#129d90"/><rect x="974" y="675.7" width="1" height="5" fill="#f0d800"/><rect x="974" y="680.7" width="1" height="4.5" fill="#f4a800"/><rect x="974" y="685.2" width="1" height="4.9" fill="#f48400"/><rect x="975" y="522.7" width="2" height="29.0" fill="#161ca6"/><rect x="975" y="551.7" width="2" height="16.6" fill="#1e2ae3"/><rect x="975" y="568.3" width="2" height="15.7" fill="#1e36e4"/><rect x="975" y="584.0" width="2" height="21.4" fill="#1767d5"/><rect x="975" y="605.4" width="2" height="12.9" fill="#1298ca"/><rect x="975" y="618.3" width="2" height="12.1" fill="#12a395"/><rect x="975" y="630.4" width="2" height="16.6" fill="#1fba7c"/><rect x="975" y="675.7" width="2" height="5" fill="#f0d800"/><rect x="975" y="680.7" width="2" height="4.5" fill="#f4a800"/><rect x="975" y="685.2" width="2" height="4.9" fill="#f48400"/><rect x="977" y="652.0" width="1" height="11.7" fill="#53bd4a"/><rect x="978" y="531.7" width="2" height="20.0" fill="#2028f1"/><rect x="978" y="551.7" width="2" height="16.6" fill="#212df3"/><rect x="978" y="568.3" width="2" height="15.7" fill="#1a2dc1"/><rect x="978" y="584.0" width="2" height="21.4" fill="#1a73ef"/><rect x="980" y="549.7" width="1" height="18.6" fill="#1a24c4"/><rect x="980" y="568.3" width="1" height="15.7" fill="#192cbc"/><rect x="983" y="589.0" width="1" height="16.4" fill="#1868d9"/><rect x="983" y="605.4" width="1" height="12.9" fill="#108ab8"/><rect x="983" y="635.4" width="1" height="11.6" fill="#21cb87"/><rect x="983" y="675.7" width="1" height="5" fill="#f0d800"/><rect x="983" y="680.7" width="1" height="4.5" fill="#f4a800"/><rect x="983" y="685.2" width="1" height="4.9" fill="#f48400"/><rect x="984" y="526.7" width="3" height="25.0" fill="#161ba2"/><rect x="984" y="551.7" width="3" height="16.6" fill="#222ffc"/><rect x="984" y="568.3" width="3" height="15.7" fill="#1c31cf"/><rect x="987" y="524.7" width="1" height="27.0" fill="#1a21c4"/><rect x="987" y="551.7" width="1" height="16.6" fill="#1a23bf"/><rect x="987" y="568.3" width="1" height="15.7" fill="#1729b0"/><rect x="987" y="584.0" width="1" height="21.4" fill="#1b75f3"/><rect x="987" y="605.4" width="1" height="12.9" fill="#1298cb"/><rect x="987" y="618.3" width="1" height="12.1" fill="#12a697"/><rect x="987" y="630.4" width="1" height="16.6" fill="#1fbd7e"/><rect x="987" y="647.0" width="1" height="16.7" fill="#4fb547"/><rect x="988" y="628.4" width="1" height="18.6" fill="#1fbd7e"/><rect x="988" y="647.0" width="1" height="16.7" fill="#54c04a"/><rect x="988" y="675.7" width="1" height="5" fill="#f0d800"/><rect x="988" y="680.7" width="1" height="4.5" fill="#f4a800"/><rect x="988" y="685.2" width="1" height="4.9" fill="#f48400"/><rect x="989" y="526.7" width="1" height="25.0" fill="#1f26e5"/><rect x="989" y="551.7" width="1" height="16.6" fill="#1d28d7"/><rect x="989" y="568.3" width="1" height="15.7" fill="#192cba"/><rect x="990" y="608.4" width="2" height="9.9" fill="#118dbd"/><rect x="990" y="618.3" width="2" height="12.1" fill="#119a8d"/><rect x="990" y="675.7" width="2" height="5" fill="#f0d800"/><rect x="990" y="680.7" width="2" height="4.5" fill="#f4a800"/><rect x="990" y="685.2" width="2" height="4.9" fill="#f48400"/><rect x="992" y="630.4" width="3" height="16.6" fill="#20c382"/><rect x="992" y="659.7" width="3" height="16.0" fill="#a1da1c"/><rect x="992" y="675.7" width="3" height="5" fill="#f0d800"/><rect x="992" y="680.7" width="3" height="4.5" fill="#f4a800"/><rect x="992" y="685.2" width="3" height="4.9" fill="#f48400"/><rect x="995" y="524.7" width="2" height="27.0" fill="#1b22c9"/><rect x="995" y="551.7" width="2" height="16.6" fill="#1b26cb"/><rect x="995" y="568.3" width="2" height="15.7" fill="#1a2ec3"/><rect x="995" y="584.0" width="2" height="21.4" fill="#196ce1"/><rect x="995" y="675.7" width="2" height="5" fill="#f0d800"/><rect x="995" y="680.7" width="2" height="4.5" fill="#f4a800"/><rect x="995" y="685.2" width="2" height="4.9" fill="#f48400"/><rect x="997" y="675.7" width="2" height="5" fill="#f0d800"/><rect x="997" y="680.7" width="2" height="4.5" fill="#f4a800"/><rect x="997" y="685.2" width="2" height="4.9" fill="#f48400"/><rect x="999" y="529.7" width="3" height="22.0" fill="#222afb"/><rect x="999" y="568.3" width="3" height="15.7" fill="#1d33da"/><rect x="1002" y="675.7" width="1" height="5" fill="#f0d800"/><rect x="1002" y="680.7" width="1" height="4.5" fill="#f4a800"/><rect x="1002" y="685.2" width="1" height="4.9" fill="#f48400"/><rect x="1004" y="573.3" width="1" height="10.7" fill="#1a2fc6"/><rect x="1005" y="526.7" width="1" height="25.0" fill="#1d24d9"/><rect x="1005" y="551.7" width="1" height="16.6" fill="#171fab"/><rect x="1005" y="568.3" width="1" height="15.7" fill="#1d33d9"/><rect x="1005" y="621.3" width="1" height="9.1" fill="#14b4a4"/><rect x="1006" y="556.7" width="3" height="11.6" fill="#1c27d2"/><rect x="1006" y="675.7" width="3" height="5" fill="#f0d800"/><rect x="1006" y="680.7" width="3" height="4.5" fill="#f4a800"/><rect x="1006" y="685.2" width="3" height="4.9" fill="#f48400"/><rect x="1009" y="526.7" width="1" height="25.0" fill="#222afb"/><rect x="1009" y="551.7" width="1" height="16.6" fill="#1d28d6"/><rect x="1009" y="568.3" width="1" height="15.7" fill="#2039f2"/><rect x="1009" y="584.0" width="1" height="21.4" fill="#1b74f2"/><rect x="1009" y="605.4" width="1" height="12.9" fill="#1296c8"/><rect x="1009" y="618.3" width="1" height="12.1" fill="#13ab9d"/><rect x="1009" y="630.4" width="1" height="16.6" fill="#21c885"/><rect x="1009" y="647.0" width="1" height="16.7" fill="#52bb49"/><rect x="1009" y="663.7" width="1" height="12.0" fill="#aae71e"/><rect x="1009" y="675.7" width="1" height="5" fill="#f0d800"/><rect x="1009" y="680.7" width="1" height="4.5" fill="#f4a800"/><rect x="1009" y="685.2" width="1" height="4.9" fill="#f48400"/><rect x="1010" y="573.3" width="1" height="10.7" fill="#1b2fc8"/><rect x="1010" y="643.0" width="1" height="20.7" fill="#53bd49"/><rect x="1010" y="663.7" width="1" height="12.0" fill="#a2db1c"/><rect x="1010" y="675.7" width="1" height="5" fill="#f0d800"/><rect x="1010" y="680.7" width="1" height="4.5" fill="#f4a800"/><rect x="1010" y="685.2" width="1" height="4.9" fill="#f48400"/><rect x="1011" y="675.7" width="2" height="5" fill="#f0d800"/><rect x="1011" y="680.7" width="2" height="4.5" fill="#f4a800"/><rect x="1011" y="685.2" width="2" height="4.9" fill="#f48400"/><rect x="1013" y="647.0" width="1" height="16.7" fill="#5cd252"/><rect x="1013" y="663.7" width="1" height="12.0" fill="#98ce1a"/><rect x="1013" y="675.7" width="1" height="5" fill="#f0d800"/><rect x="1013" y="680.7" width="1" height="4.5" fill="#f4a800"/><rect x="1013" y="685.2" width="1" height="4.9" fill="#f48400"/><rect x="1014" y="675.7" width="1" height="5" fill="#f0d800"/><rect x="1014" y="680.7" width="1" height="4.5" fill="#f4a800"/><rect x="1014" y="685.2" width="1" height="4.9" fill="#f48400"/><rect x="1015" y="551.7" width="1" height="16.6" fill="#1d28d8"/><rect x="1015" y="568.3" width="1" height="15.7" fill="#1a2ec4"/><rect x="1015" y="584.0" width="1" height="21.4" fill="#1868d7"/><rect x="1015" y="618.3" width="1" height="12.1" fill="#14b7a7"/><rect x="1015" y="630.4" width="1" height="16.6" fill="#21c784"/><rect x="1015" y="663.7" width="1" height="12.0" fill="#abe71e"/><rect x="1015" y="675.7" width="1" height="5" fill="#f0d800"/><rect x="1015" y="680.7" width="1" height="4.5" fill="#f4a800"/><rect x="1015" y="685.2" width="1" height="4.9" fill="#f48400"/><rect x="1016" y="621.3" width="1" height="9.1" fill="#14b2a3"/><rect x="1017" y="526.7" width="1" height="25.0" fill="#181eb2"/><rect x="1017" y="551.7" width="1" height="16.6" fill="#1922bb"/><rect x="1017" y="568.3" width="1" height="15.7" fill="#1f37ea"/><rect x="1017" y="661.7" width="1" height="14.0" fill="#aae61e"/><rect x="1018" y="661.7" width="3" height="14.0" fill="#a8e31d"/><rect x="1018" y="675.7" width="3" height="5" fill="#f0d800"/><rect x="1018" y="680.7" width="3" height="4.5" fill="#f4a800"/><rect x="1018" y="685.2" width="3" height="4.9" fill="#f48400"/><rect x="1022" y="601.4" width="2" height="16.9" fill="#1088b5"/><rect x="1022" y="618.3" width="2" height="12.1" fill="#13a698"/><rect x="1022" y="630.4" width="2" height="16.6" fill="#20c382"/><rect x="1022" y="675.7" width="2" height="5" fill="#f0d800"/><rect x="1022" y="680.7" width="2" height="4.5" fill="#f4a800"/><rect x="1022" y="685.2" width="2" height="4.9" fill="#f48400"/><rect x="1024" y="547.7" width="1" height="20.6" fill="#212ef9"/><rect x="1024" y="568.3" width="1" height="15.7" fill="#1d33d8"/><rect x="1024" y="584.0" width="1" height="21.4" fill="#196de1"/><rect x="1024" y="647.0" width="1" height="16.7" fill="#5fd854"/><rect x="1024" y="675.7" width="1" height="5" fill="#f0d800"/><rect x="1024" y="680.7" width="1" height="4.5" fill="#f4a800"/><rect x="1024" y="685.2" width="1" height="4.9" fill="#f48400"/><rect x="1025" y="531.7" width="2" height="20.0" fill="#151ba2"/><rect x="1025" y="551.7" width="2" height="16.6" fill="#1b26cc"/><rect x="1025" y="568.3" width="2" height="15.7" fill="#1b2fca"/><rect x="1025" y="618.3" width="2" height="12.1" fill="#12a597"/><rect x="1027" y="568.3" width="2" height="15.7" fill="#1a2ec4"/><rect x="1027" y="584.0" width="2" height="21.4" fill="#1766d3"/><rect x="1027" y="605.4" width="2" height="12.9" fill="#1193c5"/><rect x="1027" y="675.7" width="2" height="5" fill="#f0d800"/><rect x="1027" y="680.7" width="2" height="4.5" fill="#f4a800"/><rect x="1027" y="685.2" width="2" height="4.9" fill="#f48400"/><rect x="1029" y="551.7" width="1" height="16.6" fill="#1f2bea"/><rect x="1029" y="568.3" width="1" height="15.7" fill="#1c31cf"/><rect x="1029" y="659.7" width="1" height="16.0" fill="#a5df1d"/><rect x="1029" y="675.7" width="1" height="5" fill="#f0d800"/><rect x="1029" y="680.7" width="1" height="4.5" fill="#f4a800"/><rect x="1029" y="685.2" width="1" height="4.9" fill="#f48400"/><rect x="1032" y="526.7" width="1" height="25.0" fill="#171daf"/><rect x="1032" y="551.7" width="1" height="16.6" fill="#171faa"/><rect x="1032" y="568.3" width="1" height="15.7" fill="#223bfa"/><rect x="1032" y="584.0" width="1" height="21.4" fill="#1869da"/><rect x="1032" y="645.0" width="1" height="18.7" fill="#58c94e"/><rect x="1032" y="663.7" width="1" height="12.0" fill="#9fd71c"/><rect x="1032" y="675.7" width="1" height="5" fill="#f0d800"/><rect x="1032" y="680.7" width="1" height="4.5" fill="#f4a800"/><rect x="1032" y="685.2" width="1" height="4.9" fill="#f48400"/><rect x="1033" y="526.7" width="1" height="25.0" fill="#1d25da"/><rect x="1033" y="551.7" width="1" height="16.6" fill="#1720ad"/><rect x="1033" y="568.3" width="1" height="15.7" fill="#1f37e8"/><rect x="1033" y="584.0" width="1" height="21.4" fill="#1b75f4"/><rect x="1033" y="621.3" width="1" height="9.1" fill="#129e90"/><rect x="1033" y="675.7" width="1" height="5" fill="#f0d800"/><rect x="1033" y="680.7" width="1" height="4.5" fill="#f4a800"/><rect x="1033" y="685.2" width="1" height="4.9" fill="#f48400"/><rect x="1034" y="529.7" width="1" height="22.0" fill="#212af9"/><rect x="1034" y="551.7" width="1" height="16.6" fill="#1922ba"/><rect x="1034" y="568.3" width="1" height="15.7" fill="#1628a9"/><rect x="1034" y="633.4" width="1" height="13.6" fill="#20c583"/><rect x="1034" y="647.0" width="1" height="16.7" fill="#4fb446"/><rect x="1034" y="663.7" width="1" height="12.0" fill="#a5df1d"/><rect x="1034" y="675.7" width="1" height="5" fill="#f0d800"/><rect x="1034" y="680.7" width="1" height="4.5" fill="#f4a800"/><rect x="1034" y="685.2" width="1" height="4.9" fill="#f48400"/><rect x="1035" y="584.0" width="1" height="21.4" fill="#186bde"/><rect x="1036" y="531.7" width="1" height="20.0" fill="#1920bc"/><rect x="1036" y="551.7" width="1" height="16.6" fill="#1922bb"/><rect x="1036" y="568.3" width="1" height="15.7" fill="#1c31d0"/><rect x="1036" y="584.0" width="1" height="21.4" fill="#1b75f2"/><rect x="1036" y="618.3" width="1" height="12.1" fill="#12a294"/><rect x="1037" y="526.7" width="1" height="25.0" fill="#171dae"/><rect x="1037" y="675.7" width="1" height="5" fill="#f0d800"/><rect x="1037" y="680.7" width="1" height="4.5" fill="#f4a800"/><rect x="1037" y="685.2" width="1" height="4.9" fill="#f48400"/><rect x="1038" y="659.7" width="1" height="16.0" fill="#afed1e"/><rect x="1038" y="675.7" width="1" height="5" fill="#f0d800"/><rect x="1038" y="680.7" width="1" height="4.5" fill="#f4a800"/><rect x="1038" y="685.2" width="1" height="4.9" fill="#f48400"/><rect x="1039" y="551.7" width="1" height="16.6" fill="#1f2be9"/><rect x="1039" y="568.3" width="1" height="15.7" fill="#1f37e9"/><rect x="1039" y="675.7" width="1" height="5" fill="#f0d800"/><rect x="1039" y="680.7" width="1" height="4.5" fill="#f4a800"/><rect x="1039" y="685.2" width="1" height="4.9" fill="#f48400"/><rect x="1040" y="531.7" width="2" height="20.0" fill="#2129f3"/><rect x="1040" y="675.7" width="2" height="5" fill="#f0d800"/><rect x="1040" y="680.7" width="2" height="4.5" fill="#f4a800"/><rect x="1040" y="685.2" width="2" height="4.9" fill="#f48400"/><rect x="1042" y="647.0" width="1" height="16.7" fill="#5cd252"/><rect x="1042" y="663.7" width="1" height="12.0" fill="#9ed61b"/><rect x="1042" y="675.7" width="1" height="5" fill="#f0d800"/><rect x="1042" y="680.7" width="1" height="4.5" fill="#f4a800"/><rect x="1042" y="685.2" width="1" height="4.9" fill="#f48400"/><rect x="1043" y="605.4" width="1" height="12.9" fill="#108cbb"/><rect x="1043" y="618.3" width="1" height="12.1" fill="#12a495"/><rect x="1043" y="675.7" width="1" height="5" fill="#f0d800"/><rect x="1043" y="680.7" width="1" height="4.5" fill="#f4a800"/><rect x="1043" y="685.2" width="1" height="4.9" fill="#f48400"/><rect x="1044" y="647.0" width="2" height="16.7" fill="#59cb4f"/><rect x="1046" y="529.7" width="1" height="22.0" fill="#212af9"/><rect x="1047" y="522.7" width="1" height="29.0" fill="#1a20c0"/><rect x="1048" y="526.7" width="2" height="25.0" fill="#2028f0"/><rect x="1048" y="650.0" width="2" height="13.7" fill="#58ca4f"/><rect x="1048" y="675.7" width="2" height="5" fill="#f0d800"/><rect x="1048" y="680.7" width="2" height="4.5" fill="#f4a800"/><rect x="1048" y="685.2" width="2" height="4.9" fill="#f48400"/><rect x="1050" y="628.4" width="2" height="18.6" fill="#1db176"/><rect x="1050" y="659.7" width="2" height="16.0" fill="#a5e01d"/><rect x="1050" y="675.7" width="2" height="5" fill="#f0d800"/><rect x="1050" y="680.7" width="2" height="4.5" fill="#f4a800"/><rect x="1050" y="685.2" width="2" height="4.9" fill="#f48400"/><rect x="1052" y="601.4" width="1" height="16.9" fill="#129ed2"/><rect x="1052" y="618.3" width="1" height="12.1" fill="#129f91"/><rect x="1052" y="675.7" width="1" height="5" fill="#f0d800"/><rect x="1052" y="680.7" width="1" height="4.5" fill="#f4a800"/><rect x="1052" y="685.2" width="1" height="4.9" fill="#f48400"/><rect x="1053" y="549.7" width="1" height="18.6" fill="#1d27d6"/><rect x="1053" y="568.3" width="1" height="15.7" fill="#1e36e4"/><rect x="1054" y="524.7" width="1" height="27.0" fill="#1c23d4"/><rect x="1055" y="554.7" width="1" height="13.6" fill="#1e2ae4"/><rect x="1055" y="568.3" width="1" height="15.7" fill="#1f37e9"/><rect x="1055" y="584.0" width="1" height="21.4" fill="#1763ce"/><rect x="1055" y="605.4" width="1" height="12.9" fill="#1195c7"/><rect x="1055" y="618.3" width="1" height="12.1" fill="#12a597"/><rect x="1055" y="630.4" width="1" height="16.6" fill="#1fbd7e"/><rect x="1056" y="513.9" width="1" height="12.8" fill="#141999"/><rect x="1056" y="526.7" width="1" height="25.0" fill="#1b21c7"/><rect x="1056" y="551.7" width="1" height="16.6" fill="#1c26d0"/><rect x="1056" y="568.3" width="1" height="15.7" fill="#1d33d8"/><rect x="1056" y="584.0" width="1" height="21.4" fill="#1868d9"/><rect x="1059" y="675.7" width="2" height="5" fill="#f0d800"/><rect x="1059" y="680.7" width="2" height="4.5" fill="#f4a800"/><rect x="1059" y="685.2" width="2" height="4.9" fill="#f48400"/><rect x="1061" y="526.7" width="2" height="25.0" fill="#1e26e2"/><rect x="1061" y="551.7" width="2" height="16.6" fill="#1b25c7"/><rect x="1061" y="601.4" width="2" height="16.9" fill="#1299cd"/><rect x="1064" y="566.3" width="1" height="17.7" fill="#1526a1"/><rect x="1064" y="643.0" width="1" height="20.7" fill="#5dd452"/><rect x="1064" y="663.7" width="1" height="12.0" fill="#a2db1c"/><rect x="1064" y="675.7" width="1" height="5" fill="#f0d800"/><rect x="1064" y="680.7" width="1" height="4.5" fill="#f4a800"/><rect x="1064" y="685.2" width="1" height="4.9" fill="#f48400"/><rect x="1065" y="675.7" width="2" height="5" fill="#f0d800"/><rect x="1065" y="680.7" width="2" height="4.5" fill="#f4a800"/><rect x="1065" y="685.2" width="2" height="4.9" fill="#f48400"/><rect x="1067" y="513.9" width="1" height="12.8" fill="#1f25e5"/><rect x="1067" y="526.7" width="1" height="25.0" fill="#2129f4"/><rect x="1067" y="675.7" width="1" height="5" fill="#f0d800"/><rect x="1067" y="680.7" width="1" height="4.5" fill="#f4a800"/><rect x="1067" y="685.2" width="1" height="4.9" fill="#f48400"/><rect x="1068" y="564.3" width="1" height="19.7" fill="#223cfd"/><rect x="1068" y="584.0" width="1" height="21.4" fill="#1868d9"/><rect x="1068" y="605.4" width="1" height="12.9" fill="#129bcf"/><rect x="1068" y="618.3" width="1" height="12.1" fill="#13ae9f"/><rect x="1069" y="513.9" width="1" height="12.8" fill="#191ebc"/><rect x="1069" y="526.7" width="1" height="25.0" fill="#161ca9"/><rect x="1069" y="551.7" width="1" height="16.6" fill="#161ea5"/><rect x="1069" y="568.3" width="1" height="15.7" fill="#1f37eb"/><rect x="1069" y="584.0" width="1" height="21.4" fill="#186bde"/><rect x="1070" y="568.3" width="2" height="15.7" fill="#192cbd"/><rect x="1070" y="584.0" width="2" height="21.4" fill="#1a70e9"/><rect x="1072" y="551.7" width="1" height="16.6" fill="#1e2ae1"/><rect x="1072" y="630.4" width="1" height="16.6" fill="#1db075"/><rect x="1072" y="675.7" width="1" height="5" fill="#f0d800"/><rect x="1072" y="680.7" width="1" height="4.5" fill="#f4a800"/><rect x="1072" y="685.2" width="1" height="4.9" fill="#f48400"/><rect x="1074" y="551.7" width="2" height="16.6" fill="#1d27d6"/><rect x="1074" y="675.7" width="2" height="5" fill="#f0d800"/><rect x="1074" y="680.7" width="2" height="4.5" fill="#f4a800"/><rect x="1074" y="685.2" width="2" height="4.9" fill="#f48400"/><rect x="1076" y="513.9" width="1" height="12.8" fill="#1e24de"/><rect x="1076" y="526.7" width="1" height="25.0" fill="#2129f6"/><rect x="1076" y="551.7" width="1" height="16.6" fill="#1a24c2"/><rect x="1076" y="568.3" width="1" height="15.7" fill="#1a2ec2"/><rect x="1076" y="650.0" width="1" height="13.7" fill="#52bc49"/><rect x="1076" y="663.7" width="1" height="12.0" fill="#afec1e"/><rect x="1076" y="675.7" width="1" height="5" fill="#f0d800"/><rect x="1076" y="680.7" width="1" height="4.5" fill="#f4a800"/><rect x="1076" y="685.2" width="1" height="4.9" fill="#f48400"/><rect x="1078" y="675.7" width="1" height="5" fill="#f0d800"/><rect x="1078" y="680.7" width="1" height="4.5" fill="#f4a800"/><rect x="1078" y="685.2" width="1" height="4.9" fill="#f48400"/><rect x="1079" y="524.7" width="1" height="27.0" fill="#2028ef"/><rect x="1079" y="551.7" width="1" height="16.6" fill="#212efa"/><rect x="1079" y="568.3" width="1" height="15.7" fill="#1c31d2"/><rect x="1079" y="584.0" width="1" height="21.4" fill="#196fe6"/><rect x="1079" y="605.4" width="1" height="12.9" fill="#108ab8"/><rect x="1079" y="618.3" width="1" height="12.1" fill="#13a99b"/><rect x="1079" y="630.4" width="1" height="16.6" fill="#21c684"/><rect x="1079" y="675.7" width="1" height="5" fill="#f0d800"/><rect x="1079" y="680.7" width="1" height="4.5" fill="#f4a800"/><rect x="1079" y="685.2" width="1" height="4.9" fill="#f48400"/></g>
<line x1="136.40" y1="218.00" x2="136.40" y2="220.50" stroke="#777" stroke-width="1" />
<line x1="136.40" y1="413.80" x2="136.40" y2="416.30" stroke="#777" stroke-width="1" />
<line x1="136.40" y1="506.20" x2="136.40" y2="509.20" stroke="#222" stroke-width="1" />
<line x1="136.40" y1="688.10" x2="136.40" y2="690.60" stroke="#777" stroke-width="1" />
<line x1="177.40" y1="218.00" x2="177.40" y2="220.50" stroke="#777" stroke-width="1" />
<line x1="177.40" y1="413.80" x2="177.40" y2="416.30" stroke="#777" stroke-width="1" />
<line x1="177.40" y1="506.20" x2="177.40" y2="509.20" stroke="#222" stroke-width="1" />
<line x1="177.40" y1="688.10" x2="177.40" y2="690.60" stroke="#777" stroke-width="1" />
<line x1="218.40" y1="218.00" x2="218.40" y2="220.50" stroke="#777" stroke-width="1" />
<line x1="218.40" y1="413.80" x2="218.40" y2="416.30" stroke="#777" stroke-width="1" />
<line x1="218.40" y1="506.20" x2="218.40" y2="509.20" stroke="#222" stroke-width="1" />
<line x1="218.40" y1="688.10" x2="218.40" y2="690.60" stroke="#777" stroke-width="1" />
<line x1="259.40" y1="218.00" x2="259.40" y2="220.50" stroke="#777" stroke-width="1" />
<line x1="259.40" y1="413.80" x2="259.40" y2="416.30" stroke="#777" stroke-width="1" />
<line x1="259.40" y1="506.20" x2="259.40" y2="509.20" stroke="#222" stroke-width="1" />
<line x1="259.40" y1="688.10" x2="259.40" y2="690.60" stroke="#777" stroke-width="1" />
<line x1="300.40" y1="218.00" x2="300.40" y2="220.50" stroke="#777" stroke-width="1" />
<line x1="300.40" y1="413.80" x2="300.40" y2="416.30" stroke="#777" stroke-width="1" />
<line x1="300.40" y1="506.20" x2="300.40" y2="509.20" stroke="#222" stroke-width="1" />
<line x1="300.40" y1="688.10" x2="300.40" y2="690.60" stroke="#777" stroke-width="1" />
<line x1="341.40" y1="218.00" x2="341.40" y2="220.50" stroke="#777" stroke-width="1" />
<line x1="341.40" y1="413.80" x2="341.40" y2="416.30" stroke="#777" stroke-width="1" />
<line x1="341.40" y1="506.20" x2="341.40" y2="509.20" stroke="#222" stroke-width="1" />
<line x1="341.40" y1="688.10" x2="341.40" y2="690.60" stroke="#777" stroke-width="1" />
<line x1="382.40" y1="218.00" x2="382.40" y2="220.50" stroke="#777" stroke-width="1" />
<line x1="382.40" y1="413.80" x2="382.40" y2="416.30" stroke="#777" stroke-width="1" />
<line x1="382.40" y1="506.20" x2="382.40" y2="509.20" stroke="#222" stroke-width="1" />
<line x1="382.40" y1="688.10" x2="382.40" y2="690.60" stroke="#777" stroke-width="1" />
<line x1="423.40" y1="218.00" x2="423.40" y2="220.50" stroke="#777" stroke-width="1" />
<line x1="423.40" y1="413.80" x2="423.40" y2="416.30" stroke="#777" stroke-width="1" />
<line x1="423.40" y1="506.20" x2="423.40" y2="509.20" stroke="#222" stroke-width="1" />
<line x1="423.40" y1="688.10" x2="423.40" y2="690.60" stroke="#777" stroke-width="1" />
<line x1="464.40" y1="218.00" x2="464.40" y2="220.50" stroke="#777" stroke-width="1" />
<line x1="464.40" y1="413.80" x2="464.40" y2="416.30" stroke="#777" stroke-width="1" />
<line x1="464.40" y1="506.20" x2="464.40" y2="509.20" stroke="#222" stroke-width="1" />
<line x1="464.40" y1="688.10" x2="464.40" y2="690.60" stroke="#777" stroke-width="1" />
<line x1="505.40" y1="218.00" x2="505.40" y2="220.50" stroke="#777" stroke-width="1" />
<line x1="505.40" y1="413.80" x2="505.40" y2="416.30" stroke="#777" stroke-width="1" />
<line x1="505.40" y1="506.20" x2="505.40" y2="509.20" stroke="#222" stroke-width="1" />
<line x1="505.40" y1="688.10" x2="505.40" y2="690.60" stroke="#777" stroke-width="1" />
<line x1="546.40" y1="218.00" x2="546.40" y2="220.50" stroke="#777" stroke-width="1" />
<line x1="546.40" y1="413.80" x2="546.40" y2="416.30" stroke="#777" stroke-width="1" />
<line x1="546.40" y1="506.20" x2="546.40" y2="509.20" stroke="#222" stroke-width="1" />
<line x1="546.40" y1="688.10" x2="546.40" y2="690.60" stroke="#777" stroke-width="1" />
<line x1="587.40" y1="218.00" x2="587.40" y2="220.50" stroke="#777" stroke-width="1" />
<line x1="587.40" y1="413.80" x2="587.40" y2="416.30" stroke="#777" stroke-width="1" />
<line x1="587.40" y1="506.20" x2="587.40" y2="509.20" stroke="#222" stroke-width="1" />
<line x1="587.40" y1="688.10" x2="587.40" y2="690.60" stroke="#777" stroke-width="1" />
<line x1="628.40" y1="218.00" x2="628.40" y2="220.50" stroke="#777" stroke-width="1" />
<line x1="628.40" y1="413.80" x2="628.40" y2="416.30" stroke="#777" stroke-width="1" />
<line x1="628.40" y1="506.20" x2="628.40" y2="509.20" stroke="#222" stroke-width="1" />
<line x1="628.40" y1="688.10" x2="628.40" y2="690.60" stroke="#777" stroke-width="1" />
<line x1="669.40" y1="218.00" x2="669.40" y2="220.50" stroke="#777" stroke-width="1" />
<line x1="669.40" y1="413.80" x2="669.40" y2="416.30" stroke="#777" stroke-width="1" />
<line x1="669.40" y1="506.20" x2="669.40" y2="509.20" stroke="#222" stroke-width="1" />
<line x1="669.40" y1="688.10" x2="669.40" y2="690.60" stroke="#777" stroke-width="1" />
<line x1="710.40" y1="218.00" x2="710.40" y2="220.50" stroke="#777" stroke-width="1" />
<line x1="710.40" y1="413.80" x2="710.40" y2="416.30" stroke="#777" stroke-width="1" />
<line x1="710.40" y1="506.20" x2="710.40" y2="509.20" stroke="#222" stroke-width="1" />
<line x1="710.40" y1="688.10" x2="710.40" y2="690.60" stroke="#777" stroke-width="1" />
<line x1="751.40" y1="218.00" x2="751.40" y2="220.50" stroke="#777" stroke-width="1" />
<line x1="751.40" y1="413.80" x2="751.40" y2="416.30" stroke="#777" stroke-width="1" />
<line x1="751.40" y1="506.20" x2="751.40" y2="509.20" stroke="#222" stroke-width="1" />
<line x1="751.40" y1="688.10" x2="751.40" y2="690.60" stroke="#777" stroke-width="1" />
<line x1="792.40" y1="218.00" x2="792.40" y2="220.50" stroke="#777" stroke-width="1" />
<line x1="792.40" y1="413.80" x2="792.40" y2="416.30" stroke="#777" stroke-width="1" />
<line x1="792.40" y1="506.20" x2="792.40" y2="509.20" stroke="#222" stroke-width="1" />
<line x1="792.40" y1="688.10" x2="792.40" y2="690.60" stroke="#777" stroke-width="1" />
<line x1="833.40" y1="218.00" x2="833.40" y2="220.50" stroke="#777" stroke-width="1" />
<line x1="833.40" y1="413.80" x2="833.40" y2="416.30" stroke="#777" stroke-width="1" />
<line x1="833.40" y1="506.20" x2="833.40" y2="509.20" stroke="#222" stroke-width="1" />
<line x1="833.40" y1="688.10" x2="833.40" y2="690.60" stroke="#777" stroke-width="1" />
<line x1="874.40" y1="218.00" x2="874.40" y2="220.50" stroke="#777" stroke-width="1" />
<line x1="874.40" y1="413.80" x2="874.40" y2="416.30" stroke="#777" stroke-width="1" />
<line x1="874.40" y1="506.20" x2="874.40" y2="509.20" stroke="#222" stroke-width="1" />
<line x1="874.40" y1="688.10" x2="874.40" y2="690.60" stroke="#777" stroke-width="1" />
<line x1="915.40" y1="218.00" x2="915.40" y2="220.50" stroke="#777" stroke-width="1" />
<line x1="915.40" y1="413.80" x2="915.40" y2="416.30" stroke="#777" stroke-width="1" />
<line x1="915.40" y1="506.20" x2="915.40" y2="509.20" stroke="#222" stroke-width="1" />
<line x1="915.40" y1="688.10" x2="915.40" y2="690.60" stroke="#777" stroke-width="1" />
<line x1="956.40" y1="218.00" x2="956.40" y2="220.50" stroke="#777" stroke-width="1" />
<line x1="956.40" y1="413.80" x2="956.40" y2="416.30" stroke="#777" stroke-width="1" />
<line x1="956.40" y1="506.20" x2="956.40" y2="509.20" stroke="#222" stroke-width="1" />
<line x1="956.40" y1="688.10" x2="956.40" y2="690.60" stroke="#777" stroke-width="1" />
<line x1="997.40" y1="218.00" x2="997.40" y2="220.50" stroke="#777" stroke-width="1" />
<line x1="997.40" y1="413.80" x2="997.40" y2="416.30" stroke="#777" stroke-width="1" />
<line x1="997.40" y1="506.20" x2="997.40" y2="509.20" stroke="#222" stroke-width="1" />
<line x1="997.40" y1="688.10" x2="997.40" y2="690.60" stroke="#777" stroke-width="1" />
<line x1="1038.40" y1="218.00" x2="1038.40" y2="220.50" stroke="#777" stroke-width="1" />
<line x1="1038.40" y1="413.80" x2="1038.40" y2="416.30" stroke="#777" stroke-width="1" />
<line x1="1038.40" y1="506.20" x2="1038.40" y2="509.20" stroke="#222" stroke-width="1" />
<line x1="1038.40" y1="688.10" x2="1038.40" y2="690.60" stroke="#777" stroke-width="1" />
<rect x="95.00" y="695.20" width="594.50" height="15.10" fill="#00ff00" />
<rect x="689.50" y="695.20" width="391.00" height="15.10" fill="#ff0000" />
<rect x="95.5" y="695.2" width="984.5" height="15.099999999999909" fill="none" stroke="#111" stroke-width="1"/>
<line x1="96.00" y1="695.20" x2="96.00" y2="710.30" stroke="#000" stroke-width="1" />
<line x1="689.50" y1="695.20" x2="689.50" y2="710.30" stroke="#000" stroke-width="1" />
<line x1="136.40" y1="710.30" x2="136.40" y2="714.80" stroke="#262626" stroke-width="1" />
<line x1="177.40" y1="710.30" x2="177.40" y2="714.80" stroke="#262626" stroke-width="1" />
<line x1="218.40" y1="710.30" x2="218.40" y2="718.80" stroke="#262626" stroke-width="1" />
<line x1="259.40" y1="710.30" x2="259.40" y2="714.80" stroke="#262626" stroke-width="1" />
<line x1="300.40" y1="710.30" x2="300.40" y2="714.80" stroke="#262626" stroke-width="1" />
<line x1="341.40" y1="710.30" x2="341.40" y2="718.80" stroke="#262626" stroke-width="1" />
<line x1="382.40" y1="710.30" x2="382.40" y2="714.80" stroke="#262626" stroke-width="1" />
<line x1="423.40" y1="710.30" x2="423.40" y2="714.80" stroke="#262626" stroke-width="1" />
<line x1="464.40" y1="710.30" x2="464.40" y2="718.80" stroke="#262626" stroke-width="1" />
<line x1="505.40" y1="710.30" x2="505.40" y2="714.80" stroke="#262626" stroke-width="1" />
<line x1="546.40" y1="710.30" x2="546.40" y2="714.80" stroke="#262626" stroke-width="1" />
<line x1="587.40" y1="710.30" x2="587.40" y2="718.80" stroke="#262626" stroke-width="1" />
<line x1="628.40" y1="710.30" x2="628.40" y2="714.80" stroke="#262626" stroke-width="1" />
<line x1="669.40" y1="710.30" x2="669.40" y2="714.80" stroke="#262626" stroke-width="1" />
<line x1="710.40" y1="710.30" x2="710.40" y2="718.80" stroke="#262626" stroke-width="1" />
<line x1="751.40" y1="710.30" x2="751.40" y2="714.80" stroke="#262626" stroke-width="1" />
<line x1="792.40" y1="710.30" x2="792.40" y2="714.80" stroke="#262626" stroke-width="1" />
<line x1="833.40" y1="710.30" x2="833.40" y2="718.80" stroke="#262626" stroke-width="1" />
<line x1="874.40" y1="710.30" x2="874.40" y2="714.80" stroke="#262626" stroke-width="1" />
<line x1="915.40" y1="710.30" x2="915.40" y2="714.80" stroke="#262626" stroke-width="1" />
<line x1="956.40" y1="710.30" x2="956.40" y2="718.80" stroke="#262626" stroke-width="1" />
<line x1="997.40" y1="710.30" x2="997.40" y2="714.80" stroke="#262626" stroke-width="1" />
<line x1="1038.40" y1="710.30" x2="1038.40" y2="714.80" stroke="#262626" stroke-width="1" />
<line x1="1080.50" y1="710.30" x2="1080.50" y2="718.80" stroke="#262626" stroke-width="1" />
<rect x="1092.00" y="30.00" width="12.50" height="190.50" fill="url(#cmap)" />
<line x1="1104.50" y1="29.00" x2="1104.50" y2="220.50" stroke="#262626" stroke-width="1" />
<line x1="1104.50" y1="220.30" x2="1108.50" y2="220.30" stroke="#262626" stroke-width="1" />
<line x1="1104.50" y1="215.72" x2="1108.50" y2="215.72" stroke="#262626" stroke-width="1" />
<line x1="1104.50" y1="211.85" x2="1108.50" y2="211.85" stroke="#262626" stroke-width="1" />
<line x1="1104.50" y1="208.50" x2="1108.50" y2="208.50" stroke="#262626" stroke-width="1" />
<line x1="1104.50" y1="205.54" x2="1108.50" y2="205.54" stroke="#262626" stroke-width="1" />
<line x1="1104.50" y1="202.90" x2="1112.50" y2="202.90" stroke="#262626" stroke-width="1" />
<line x1="1104.50" y1="185.50" x2="1108.50" y2="185.50" stroke="#262626" stroke-width="1" />
<line x1="1104.50" y1="175.32" x2="1108.50" y2="175.32" stroke="#262626" stroke-width="1" />
<line x1="1104.50" y1="168.10" x2="1108.50" y2="168.10" stroke="#262626" stroke-width="1" />
<line x1="1104.50" y1="162.50" x2="1108.50" y2="162.50" stroke="#262626" stroke-width="1" />
<line x1="1104.50" y1="157.92" x2="1108.50" y2="157.92" stroke="#262626" stroke-width="1" />
<line x1="1104.50" y1="154.05" x2="1108.50" y2="154.05" stroke="#262626" stroke-width="1" />
<line x1="1104.50" y1="150.70" x2="1108.50" y2="150.70" stroke="#262626" stroke-width="1" />
<line x1="1104.50" y1="147.74" x2="1108.50" y2="147.74" stroke="#262626" stroke-width="1" />
<line x1="1104.50" y1="145.10" x2="1112.50" y2="145.10" stroke="#262626" stroke-width="1" />
<line x1="1104.50" y1="127.70" x2="1108.50" y2="127.70" stroke="#262626" stroke-width="1" />
<line x1="1104.50" y1="117.52" x2="1108.50" y2="117.52" stroke="#262626" stroke-width="1" />
<line x1="1104.50" y1="110.30" x2="1108.50" y2="110.30" stroke="#262626" stroke-width="1" />
<line x1="1104.50" y1="104.70" x2="1108.50" y2="104.70" stroke="#262626" stroke-width="1" />
<line x1="1104.50" y1="100.12" x2="1108.50" y2="100.12" stroke="#262626" stroke-width="1" />
<line x1="1104.50" y1="96.25" x2="1108.50" y2="96.25" stroke="#262626" stroke-width="1" />
<line x1="1104.50" y1="92.90" x2="1108.50" y2="92.90" stroke="#262626" stroke-width="1" />
<line x1="1104.50" y1="89.94" x2="1108.50" y2="89.94" stroke="#262626" stroke-width="1" />
<line x1="1104.50" y1="87.30" x2="1112.50" y2="87.30" stroke="#262626" stroke-width="1" />
<line x1="1104.50" y1="69.90" x2="1108.50" y2="69.90" stroke="#262626" stroke-width="1" />
<line x1="1104.50" y1="59.72" x2="1108.50" y2="59.72" stroke="#262626" stroke-width="1" />
<line x1="1104.50" y1="52.50" x2="1108.50" y2="52.50" stroke="#262626" stroke-width="1" />
<line x1="1104.50" y1="46.90" x2="1108.50" y2="46.90" stroke="#262626" stroke-width="1" />
<line x1="1104.50" y1="42.32" x2="1108.50" y2="42.32" stroke="#262626" stroke-width="1" />
<line x1="1104.50" y1="38.45" x2="1108.50" y2="38.45" stroke="#262626" stroke-width="1" />
<line x1="1104.50" y1="35.10" x2="1108.50" y2="35.10" stroke="#262626" stroke-width="1" />
<line x1="1104.50" y1="32.14" x2="1108.50" y2="32.14" stroke="#262626" stroke-width="1" />
<line x1="1104.50" y1="29.50" x2="1112.50" y2="29.50" stroke="#262626" stroke-width="1" />
<text x="1116.84" y="36.80" font-size="12" fill="#262626" letter-spacing="1.200">10</text>
<rect x="1132.66" y="27.00" width="5.00" height="1.00" fill="#262626" />
<text x="1139.35" y="30.75" font-size="12" fill="#262626">9</text>
<text x="1116.84" y="94.60" font-size="12" fill="#262626" letter-spacing="1.200">10</text>
<rect x="1132.66" y="85.00" width="5.00" height="1.00" fill="#262626" />
<text x="1139.00" y="88.55" font-size="12" fill="#262626" letter-spacing="1.200">10</text>
<text x="1116.84" y="152.40" font-size="12" fill="#262626" letter-spacing="1.200">10</text>
<rect x="1132.66" y="142.00" width="5.00" height="1.00" fill="#262626" />
<text x="1139.00" y="146.35" font-size="12" fill="#262626" letter-spacing="1.200">11</text>
<text x="1116.84" y="210.20" font-size="12" fill="#262626" letter-spacing="1.200">10</text>
<rect x="1132.66" y="200.00" width="5.00" height="1.00" fill="#262626" />
<text x="1139.00" y="204.15" font-size="12" fill="#262626" letter-spacing="1.200">12</text>
<rect x="1092.00" y="225.50" width="12.50" height="190.80" fill="url(#cmap)" />
<line x1="1104.50" y1="224.50" x2="1104.50" y2="416.30" stroke="#262626" stroke-width="1" />
<line x1="1104.50" y1="415.30" x2="1108.50" y2="415.30" stroke="#262626" stroke-width="1" />
<line x1="1104.50" y1="410.72" x2="1108.50" y2="410.72" stroke="#262626" stroke-width="1" />
<line x1="1104.50" y1="406.85" x2="1108.50" y2="406.85" stroke="#262626" stroke-width="1" />
<line x1="1104.50" y1="403.50" x2="1108.50" y2="403.50" stroke="#262626" stroke-width="1" />
<line x1="1104.50" y1="400.54" x2="1108.50" y2="400.54" stroke="#262626" stroke-width="1" />
<line x1="1104.50" y1="397.90" x2="1112.50" y2="397.90" stroke="#262626" stroke-width="1" />
<line x1="1104.50" y1="380.50" x2="1108.50" y2="380.50" stroke="#262626" stroke-width="1" />
<line x1="1104.50" y1="370.32" x2="1108.50" y2="370.32" stroke="#262626" stroke-width="1" />
<line x1="1104.50" y1="363.10" x2="1108.50" y2="363.10" stroke="#262626" stroke-width="1" />
<line x1="1104.50" y1="357.50" x2="1108.50" y2="357.50" stroke="#262626" stroke-width="1" />
<line x1="1104.50" y1="352.92" x2="1108.50" y2="352.92" stroke="#262626" stroke-width="1" />
<line x1="1104.50" y1="349.05" x2="1108.50" y2="349.05" stroke="#262626" stroke-width="1" />
<line x1="1104.50" y1="345.70" x2="1108.50" y2="345.70" stroke="#262626" stroke-width="1" />
<line x1="1104.50" y1="342.74" x2="1108.50" y2="342.74" stroke="#262626" stroke-width="1" />
<line x1="1104.50" y1="340.10" x2="1112.50" y2="340.10" stroke="#262626" stroke-width="1" />
<line x1="1104.50" y1="322.70" x2="1108.50" y2="322.70" stroke="#262626" stroke-width="1" />
<line x1="1104.50" y1="312.52" x2="1108.50" y2="312.52" stroke="#262626" stroke-width="1" />
<line x1="1104.50" y1="305.30" x2="1108.50" y2="305.30" stroke="#262626" stroke-width="1" />
<line x1="1104.50" y1="299.70" x2="1108.50" y2="299.70" stroke="#262626" stroke-width="1" />
<line x1="1104.50" y1="295.12" x2="1108.50" y2="295.12" stroke="#262626" stroke-width="1" />
<line x1="1104.50" y1="291.25" x2="1108.50" y2="291.25" stroke="#262626" stroke-width="1" />
<line x1="1104.50" y1="287.90" x2="1108.50" y2="287.90" stroke="#262626" stroke-width="1" />
<line x1="1104.50" y1="284.94" x2="1108.50" y2="284.94" stroke="#262626" stroke-width="1" />
<line x1="1104.50" y1="282.30" x2="1112.50" y2="282.30" stroke="#262626" stroke-width="1" />
<line x1="1104.50" y1="264.90" x2="1108.50" y2="264.90" stroke="#262626" stroke-width="1" />
<line x1="1104.50" y1="254.72" x2="1108.50" y2="254.72" stroke="#262626" stroke-width="1" />
<line x1="1104.50" y1="247.50" x2="1108.50" y2="247.50" stroke="#262626" stroke-width="1" />
<line x1="1104.50" y1="241.90" x2="1108.50" y2="241.90" stroke="#262626" stroke-width="1" />
<line x1="1104.50" y1="237.32" x2="1108.50" y2="237.32" stroke="#262626" stroke-width="1" />
<line x1="1104.50" y1="233.45" x2="1108.50" y2="233.45" stroke="#262626" stroke-width="1" />
<line x1="1104.50" y1="230.10" x2="1108.50" y2="230.10" stroke="#262626" stroke-width="1" />
<line x1="1104.50" y1="227.14" x2="1108.50" y2="227.14" stroke="#262626" stroke-width="1" />
<line x1="1104.50" y1="224.50" x2="1112.50" y2="224.50" stroke="#262626" stroke-width="1" />
<text x="1116.84" y="231.80" font-size="12" fill="#262626" letter-spacing="1.200">10</text>
<rect x="1132.66" y="222.00" width="5.00" height="1.00" fill="#262626" />
<text x="1139.35" y="225.75" font-size="12" fill="#262626">9</text>
<text x="1116.84" y="289.60" font-size="12" fill="#262626" letter-spacing="1.200">10</text>
<rect x="1132.66" y="280.00" width="5.00" height="1.00" fill="#262626" />
<text x="1139.00" y="283.55" font-size="12" fill="#262626" letter-spacing="1.200">10</text>
<text x="1116.84" y="347.40" font-size="12" fill="#262626" letter-spacing="1.200">10</text>
<rect x="1132.66" y="337.00" width="5.00" height="1.00" fill="#262626" />
<text x="1139.00" y="341.35" font-size="12" fill="#262626" letter-spacing="1.200">11</text>
<text x="1116.84" y="405.20" font-size="12" fill="#262626" letter-spacing="1.200">10</text>
<rect x="1132.66" y="395.00" width="5.00" height="1.00" fill="#262626" />
<text x="1139.00" y="399.15" font-size="12" fill="#262626" letter-spacing="1.200">12</text>
<text transform="translate(1164.00,123.30) rotate(90)" x="-60.67" y="0" font-size="12" fill="#262626" letter-spacing="0.794">pressure dyne/cm^2</text>
<text transform="translate(1164.00,318.95) rotate(90)" x="-60.62" y="0" font-size="12" fill="#262626" letter-spacing="0.788">pressure dyne/cm^2</text>
<rect x="1092.00" y="514.70" width="12.50" height="176.30" fill="url(#cmap)" />
<line x1="1104.50" y1="513.70" x2="1104.50" y2="691.00" stroke="#262626" stroke-width="1" />
<line x1="1104.50" y1="515.10" x2="1112.50" y2="515.10" stroke="#262626" stroke-width="1" />
<line x1="1104.50" y1="534.65" x2="1108.50" y2="534.65" stroke="#262626" stroke-width="1" />
<line x1="1104.50" y1="554.20" x2="1112.50" y2="554.20" stroke="#262626" stroke-width="1" />
<line x1="1104.50" y1="573.75" x2="1108.50" y2="573.75" stroke="#262626" stroke-width="1" />
<line x1="1104.50" y1="593.30" x2="1112.50" y2="593.30" stroke="#262626" stroke-width="1" />
<line x1="1104.50" y1="612.85" x2="1108.50" y2="612.85" stroke="#262626" stroke-width="1" />
<line x1="1104.50" y1="632.40" x2="1112.50" y2="632.40" stroke="#262626" stroke-width="1" />
<line x1="1104.50" y1="651.95" x2="1108.50" y2="651.95" stroke="#262626" stroke-width="1" />
<line x1="1104.50" y1="671.50" x2="1112.50" y2="671.50" stroke="#262626" stroke-width="1" />
<line x1="1104.50" y1="691.05" x2="1108.50" y2="691.05" stroke="#262626" stroke-width="1" />
<text x="1116.84" y="522.40" font-size="12" fill="#262626" letter-spacing="1.200">10</text>
<text x="1132.39" y="516.35" font-size="12" fill="#262626">4</text>
<text x="1116.84" y="561.50" font-size="12" fill="#262626" letter-spacing="1.200">10</text>
<text x="1132.06" y="555.45" font-size="12" fill="#262626">2</text>
<text x="1116.84" y="600.60" font-size="12" fill="#262626" letter-spacing="1.200">10</text>
<text x="1132.20" y="594.55" font-size="12" fill="#262626">0</text>
<text x="1116.84" y="639.70" font-size="12" fill="#262626" letter-spacing="1.200">10</text>
<rect x="1132.66" y="630.00" width="5.00" height="1.00" fill="#262626" />
<text x="1139.31" y="633.65" font-size="12" fill="#262626">2</text>
<text x="1116.84" y="678.80" font-size="12" fill="#262626" letter-spacing="1.200">10</text>
<rect x="1132.66" y="669.00" width="5.00" height="1.00" fill="#262626" />
<text x="1139.64" y="672.75" font-size="12" fill="#262626">4</text>
<text transform="translate(1155.80,601.90) rotate(90)" x="-84.60" y="0" font-size="12" fill="#262626" letter-spacing="0.672">intensity 1/(s cm^2 ster keV)</text>
<line x1="1091" y1="426" x2="1103" y2="430.5" stroke="#0000ff" stroke-width="1.3" shape-rendering="geometricPrecision"/>
<text x="1107.29" y="432.90" font-size="12" fill="#262626" letter-spacing="-0.994">CHEMS</text>
<rect x="1148.10" y="429.00" width="4.80" height="1.00" fill="#262626" />
<text x="1153.82" y="432.90" font-size="12" fill="#262626">P</text>
<line x1="1091" y1="441" x2="1103" y2="445.5" stroke="#ff0000" stroke-width="1.3" shape-rendering="geometricPrecision"/>
<text x="1106.92" y="447.90" font-size="12" fill="#262626" letter-spacing="-0.960">LEMMS</text>
<rect x="1147.00" y="444.00" width="4.80" height="1.00" fill="#262626" />
<text x="1153.02" y="447.90" font-size="12" fill="#262626">P</text>
<line x1="1091" y1="456" x2="1103" y2="460.5" stroke="#00ff00" stroke-width="1.3" shape-rendering="geometricPrecision"/>
<text x="1107.29" y="462.90" font-size="12" fill="#262626" letter-spacing="-0.994">CHEMS</text>
<rect x="1148.10" y="459.00" width="4.80" height="1.00" fill="#262626" />
<text x="1154.23" y="462.90" font-size="12" fill="#262626">O</text>
<line x1="115.30" y1="503.00" x2="115.30" y2="509.00" stroke="#ff0000" stroke-width="1.3" shape-rendering="geometricPrecision"/>
<line x1="119.30" y1="505.00" x2="119.30" y2="509.00" stroke="#ff0000" stroke-width="1.3" shape-rendering="geometricPrecision"/>
<line x1="145.30" y1="502.00" x2="145.30" y2="509.00" stroke="#0000ff" stroke-width="1.3" shape-rendering="geometricPrecision"/>
<line x1="148.30" y1="500.50" x2="148.30" y2="509.00" stroke="#00ff00" stroke-width="1.3" shape-rendering="geometricPrecision"/>
<line x1="152.50" y1="500.30" x2="152.50" y2="509.00" stroke="#00ff00" stroke-width="1.3" shape-rendering="geometricPrecision"/>
<line x1="162.30" y1="507.00" x2="162.30" y2="509.00" stroke="#ff0000" stroke-width="1.3" shape-rendering="geometricPrecision"/>
<line x1="173.50" y1="502.00" x2="173.50" y2="509.00" stroke="#ff0000" stroke-width="1.3" shape-rendering="geometricPrecision"/>
<line x1="196.30" y1="505.00" x2="196.30" y2="509.00" stroke="#ff0000" stroke-width="1.3" shape-rendering="geometricPrecision"/>
<line x1="200.30" y1="505.00" x2="200.30" y2="509.00" stroke="#ff0000" stroke-width="1.3" shape-rendering="geometricPrecision"/>
<line x1="210.30" y1="492.00" x2="210.30" y2="509.00" stroke="#00ff00" stroke-width="1.3" shape-rendering="geometricPrecision"/>
<line x1="224.30" y1="501.00" x2="224.30" y2="509.00" stroke="#0000ff" stroke-width="1.3" shape-rendering="geometricPrecision"/>
<line x1="257.50" y1="507.00" x2="257.50" y2="509.00" stroke="#ff0000" stroke-width="1.3" shape-rendering="geometricPrecision"/>
<line x1="275.50" y1="499.30" x2="275.50" y2="509.00" stroke="#0000ff" stroke-width="1.3" shape-rendering="geometricPrecision"/>
<line x1="278.80" y1="502.00" x2="278.80" y2="509.00" stroke="#0000ff" stroke-width="1.3" shape-rendering="geometricPrecision"/>
<line x1="295.30" y1="495.00" x2="295.30" y2="509.00" stroke="#0000ff" stroke-width="1.3" shape-rendering="geometricPrecision"/>
<line x1="311.30" y1="505.00" x2="311.30" y2="509.00" stroke="#ff0000" stroke-width="1.3" shape-rendering="geometricPrecision"/>
<line x1="336.30" y1="500.00" x2="336.30" y2="509.00" stroke="#00ff00" stroke-width="1.3" shape-rendering="geometricPrecision"/>
<line x1="339.00" y1="507.00" x2="339.00" y2="509.00" stroke="#ff0000" stroke-width="1.3" shape-rendering="geometricPrecision"/>
<line x1="362.50" y1="506.00" x2="362.50" y2="509.00" stroke="#ff0000" stroke-width="1.3" shape-rendering="geometricPrecision"/>
<line x1="364.30" y1="496.00" x2="364.30" y2="509.00" stroke="#00ff00" stroke-width="1.3" shape-rendering="geometricPrecision"/>
<line x1="400.30" y1="507.00" x2="400.30" y2="509.00" stroke="#ff0000" stroke-width="1.3" shape-rendering="geometricPrecision"/>
<line x1="421.50" y1="505.00" x2="421.50" y2="509.00" stroke="#ff0000" stroke-width="1.3" shape-rendering="geometricPrecision"/>
<line x1="442.50" y1="493.00" x2="442.50" y2="509.00" stroke="#00ff00" stroke-width="1.3" shape-rendering="geometricPrecision"/>
<line x1="461.30" y1="506.00" x2="461.30" y2="509.00" stroke="#ff0000" stroke-width="1.3" shape-rendering="geometricPrecision"/>
<line x1="497.50" y1="502.80" x2="497.50" y2="509.00" stroke="#00ff00" stroke-width="1.3" shape-rendering="geometricPrecision"/>
<line x1="518.30" y1="507.00" x2="518.30" y2="509.00" stroke="#ff0000" stroke-width="1.3" shape-rendering="geometricPrecision"/>
<line x1="527.50" y1="508.00" x2="527.50" y2="509.00" stroke="#ff0000" stroke-width="1.3" shape-rendering="geometricPrecision"/>
<line x1="548.00" y1="506.00" x2="548.00" y2="509.00" stroke="#0000ff" stroke-width="1.3" shape-rendering="geometricPrecision"/>
<line x1="558.50" y1="488.00" x2="558.50" y2="509.00" stroke="#00ff00" stroke-width="1.3" shape-rendering="geometricPrecision"/>
<line x1="576.50" y1="494.00" x2="576.50" y2="509.00" stroke="#0000ff" stroke-width="1.3" shape-rendering="geometricPrecision"/>
<line x1="654.50" y1="501.00" x2="654.50" y2="509.00" stroke="#00ff00" stroke-width="1.3" shape-rendering="geometricPrecision"/>
<line x1="681.30" y1="495.80" x2="681.30" y2="509.00" stroke="#00ff00" stroke-width="1.3" shape-rendering="geometricPrecision"/>
<line x1="746.70" y1="506.00" x2="746.70" y2="509.00" stroke="#00ff00" stroke-width="1.3" shape-rendering="geometricPrecision"/>
<line x1="774.50" y1="492.00" x2="774.50" y2="509.00" stroke="#00ff00" stroke-width="1.3" shape-rendering="geometricPrecision"/>
<line x1="832.00" y1="503.00" x2="832.00" y2="509.00" stroke="#0000ff" stroke-width="1.3" shape-rendering="geometricPrecision"/>
<line x1="1003.40" y1="504.00" x2="1003.40" y2="509.00" stroke="#00ff00" stroke-width="1.3" shape-rendering="geometricPrecision"/>
<line x1="1009.40" y1="491.00" x2="1009.40" y2="509.00" stroke="#0000ff" stroke-width="1.3" shape-rendering="geometricPrecision"/>
<line x1="1050.40" y1="496.00" x2="1050.40" y2="509.00" stroke="#00ff00" stroke-width="1.3" shape-rendering="geometricPrecision"/>
<line x1="1057.80" y1="495.00" x2="1057.80" y2="509.00" stroke="#0000ff" stroke-width="1.3" shape-rendering="geometricPrecision"/>
<line x1="1071.50" y1="494.00" x2="1071.50" y2="509.00" stroke="#00ff00" stroke-width="1.3" shape-rendering="geometricPrecision"/>
<line x1="576.50" y1="505.00" x2="576.50" y2="509.00" stroke="#ff0000" stroke-width="1.3" shape-rendering="geometricPrecision"/>
<path d="M148.3,501 L152.5,499.5" fill="none" stroke="#00ff00" stroke-width="1.2" shape-rendering="geometricPrecision" />
<path d="M275.5,499.5 L278.8,502" fill="none" stroke="#0000ff" stroke-width="1.2" shape-rendering="geometricPrecision" />
<path d="M224.3,501 L226,509" fill="none" stroke="#0000ff" stroke-width="1.2" shape-rendering="geometricPrecision" />
<path d="M688.5,509.0 L690.0,502.0 L692.0,502.0 L693.5,509.0 L695.0,502.0 L699.0,499.0 L702.0,496.0 L705.0,498.0 L707.0,498.5 L709.5,497.4 L712.0,494.2 L715.5,498.7 L719.0,496.8 L721.5,493.6 L724.0,495.9 L726.5,499.0 L730.0,494.5 L732.0,494.3 L735.5,494.3 L737.5,499.3 L739.5,494.8 L742.0,499.3 L744.5,498.7 L747.5,495.4 L750.0,496.7 L752.5,494.6 L755.0,499.3 L758.5,505.0 L761.5,496.0 L764.0,495.1 L767.0,495.3 L769.0,497.1 L772.0,493.9 L775.0,498.4 L778.5,497.7 L781.0,496.4 L783.5,493.8 L785.5,499.2 L788.5,498.6 L790.5,496.8 L794.0,495.7 L796.0,496.2 L798.5,497.2 L801.0,494.2 L803.5,499.1 L807.0,495.6 L810.0,509.0 L813.0,498.2 L815.0,497.0 L818.0,498.7 L820.0,496.1 L822.0,494.8 L825.0,499.0 L828.0,495.2 L830.0,495.4 L833.0,495.3 L835.0,497.3 L838.0,499.5 L840.5,497.8 L842.5,499.4 L846.0,493.7 L849.0,498.5 L852.5,497.4 L855.0,493.8 L857.0,498.3 L860.0,498.5 L862.5,499.4 L865.0,497.3 L868.5,494.1 L872.0,495.7 L874.0,498.6 L877.0,494.3 L879.5,499.4 L883.0,499.3 L886.0,496.4 L889.0,496.3 L891.5,494.2 L894.0,497.3 L897.5,498.7 L900.0,509.0 L903.0,509.0 L906.0,493.9 L909.0,497.7 L911.0,498.1 L914.0,496.9 L917.0,498.5 L920.0,498.1 L923.0,499.2 L926.0,497.4 L928.0,496.3 L931.0,495.5 L934.0,496.3 L937.0,495.6 L940.0,497.9 L943.5,495.6 L946.0,498.7 L949.5,499.4 L952.5,496.6 L955.0,494.7 L958.0,499.1 L961.5,495.2 L963.5,497.8 L967.0,494.5 L970.5,495.3 L973.5,497.8 L975.5,494.7 L979.0,497.2 L981.5,494.8 L984.0,497.3 L986.0,499.4 L988.5,494.5 L991.0,494.2 L993.5,496.4 L995.5,496.0 L998.5,495.8 L1000.5,497.0 L1003.0,497.8 L1006.0,493.5 L1009.5,499.2 L1013.0,498.7 L1016.0,499.3 L1019.0,494.1 L1022.0,499.2 L1022,509" fill="none" stroke="#ff0000" stroke-width="1.1" shape-rendering="geometricPrecision" />
<path d="M1026.5,509 L1027.5,496.0 L1030.5,496.3 L1033.0,497.1 L1036.5,499.2 L1039.0,497.2 L1042.0,498.4 L1044.0,495.8 L1047.0,496.9 L1049.5,495.5 L1053.0,496.1 L1055.5,496.5 L1059.0,499.3 L1062.5,495.8 L1065.0,497.1 L1068.0,497.9 L1071.0,496.5 L1074.5,493.6 L1077.5,496.5 L1080.0,494.4" fill="none" stroke="#ff0000" stroke-width="1.1" shape-rendering="geometricPrecision" />
<path d="M720,509 L722.5,493 L724,509" fill="none" stroke="#0000ff" stroke-width="1.2" shape-rendering="geometricPrecision" />
<path d="M1027.9,509 L1030.4,498.8 L1034.7,505 L1040.7,500 L1043,509" fill="none" stroke="#0000ff" stroke-width="1.3" shape-rendering="geometricPrecision" />
<text x="200.09" y="734.00" font-size="12" fill="#262626" letter-spacing="1.400">03:00</text>
<text x="208.16" y="749.00" font-size="12" fill="#262626" letter-spacing="1.400">1.70</text>
<text x="200.20" y="763.60" font-size="12" fill="#262626" letter-spacing="1.400">54.31</text>
<text x="192.01" y="779.00" font-size="12" fill="#262626" letter-spacing="1.400">156.80</text>
<text x="323.09" y="734.00" font-size="12" fill="#262626" letter-spacing="1.400">06:00</text>
<text x="331.04" y="749.00" font-size="12" fill="#262626" letter-spacing="1.400">1.74</text>
<text x="323.14" y="763.60" font-size="12" fill="#262626" letter-spacing="1.400">54.08</text>
<text x="315.07" y="779.00" font-size="12" fill="#262626" letter-spacing="1.400">158.93</text>
<text x="446.09" y="734.00" font-size="12" fill="#262626" letter-spacing="1.400">09:00</text>
<text x="454.29" y="749.00" font-size="12" fill="#262626" letter-spacing="1.400">1.77</text>
<text x="445.97" y="763.60" font-size="12" fill="#262626" letter-spacing="1.400">53.84</text>
<text x="438.07" y="779.00" font-size="12" fill="#262626" letter-spacing="1.400">161.13</text>
<text x="568.86" y="734.00" font-size="12" fill="#262626" letter-spacing="1.400">12:00</text>
<text x="577.05" y="749.00" font-size="12" fill="#262626" letter-spacing="1.400">1.81</text>
<text x="568.86" y="763.60" font-size="12" fill="#262626" letter-spacing="1.400">53.60</text>
<text x="560.89" y="779.00" font-size="12" fill="#262626" letter-spacing="1.400">163.39</text>
<text x="691.86" y="734.00" font-size="12" fill="#262626" letter-spacing="1.400">15:00</text>
<text x="699.97" y="749.00" font-size="12" fill="#262626" letter-spacing="1.400">1.85</text>
<text x="691.90" y="763.60" font-size="12" fill="#262626" letter-spacing="1.400">53.35</text>
<text x="683.92" y="779.00" font-size="12" fill="#262626" letter-spacing="1.400">165.72</text>
<text x="814.86" y="734.00" font-size="12" fill="#262626" letter-spacing="1.400">18:00</text>
<text x="823.04" y="749.00" font-size="12" fill="#262626" letter-spacing="1.400">1.89</text>
<text x="814.86" y="763.60" font-size="12" fill="#262626" letter-spacing="1.400">53.10</text>
<text x="806.92" y="779.00" font-size="12" fill="#262626" letter-spacing="1.400">168.12</text>
<text x="938.02" y="734.00" font-size="12" fill="#262626" letter-spacing="1.400">21:00</text>
<text x="946.15" y="749.00" font-size="12" fill="#262626" letter-spacing="1.400">1.93</text>
<text x="938.05" y="763.60" font-size="12" fill="#262626" letter-spacing="1.400">52.85</text>
<text x="930.04" y="779.00" font-size="12" fill="#262626" letter-spacing="1.400">170.59</text>
<text x="1062.19" y="734.00" font-size="12" fill="#262626" letter-spacing="1.400">00:00</text>
<text x="1070.39" y="749.00" font-size="12" fill="#262626" letter-spacing="1.400">1.97</text>
<text x="1062.28" y="763.60" font-size="12" fill="#262626" letter-spacing="1.400">52.59</text>
<text x="1054.17" y="779.00" font-size="12" fill="#262626" letter-spacing="1.400">173.13</text>
<text x="1062.00" y="746.00" font-size="12" fill="#262626" letter-spacing="1.631">2013-323</text>
<text x="15.02" y="749.00" font-size="12" fill="#262626" letter-spacing="0.533">LT (hrs)</text>
<text x="45.42" y="763.60" font-size="12" fill="#262626" letter-spacing="0.352">Rs</text>
<text x="12.02" y="779.00" font-size="12" fill="#262626" letter-spacing="0.622">Dipole L</text>
<rect x="216.0" y="803.3" width="150.0" height="146.5" fill="none" stroke="#111" stroke-width="1"/>
<line x1="207.50" y1="803.30" x2="215.50" y2="803.30" stroke="#262626" stroke-width="1" />
<line x1="211.50" y1="805.13" x2="215.50" y2="805.13" stroke="#262626" stroke-width="1" />
<line x1="211.50" y1="806.96" x2="215.50" y2="806.96" stroke="#262626" stroke-width="1" />
<line x1="211.50" y1="808.79" x2="215.50" y2="808.79" stroke="#262626" stroke-width="1" />
<line x1="211.50" y1="810.62" x2="215.50" y2="810.62" stroke="#262626" stroke-width="1" />
<line x1="211.50" y1="812.46" x2="215.50" y2="812.46" stroke="#262626" stroke-width="1" />
<line x1="211.50" y1="814.29" x2="215.50" y2="814.29" stroke="#262626" stroke-width="1" />
<line x1="211.50" y1="816.12" x2="215.50" y2="816.12" stroke="#262626" stroke-width="1" />
<line x1="211.50" y1="817.95" x2="215.50" y2="817.95" stroke="#262626" stroke-width="1" />
<line x1="211.50" y1="819.78" x2="215.50" y2="819.78" stroke="#262626" stroke-width="1" />
<line x1="207.50" y1="821.61" x2="215.50" y2="821.61" stroke="#262626" stroke-width="1" />
<line x1="211.50" y1="823.44" x2="215.50" y2="823.44" stroke="#262626" stroke-width="1" />
<line x1="211.50" y1="825.27" x2="215.50" y2="825.27" stroke="#262626" stroke-width="1" />
<line x1="211.50" y1="827.11" x2="215.50" y2="827.11" stroke="#262626" stroke-width="1" />
<line x1="211.50" y1="828.94" x2="215.50" y2="828.94" stroke="#262626" stroke-width="1" />
<line x1="211.50" y1="830.77" x2="215.50" y2="830.77" stroke="#262626" stroke-width="1" />
<line x1="211.50" y1="832.60" x2="215.50" y2="832.60" stroke="#262626" stroke-width="1" />
<line x1="211.50" y1="834.43" x2="215.50" y2="834.43" stroke="#262626" stroke-width="1" />
<line x1="211.50" y1="836.26" x2="215.50" y2="836.26" stroke="#262626" stroke-width="1" />
<line x1="211.50" y1="838.09" x2="215.50" y2="838.09" stroke="#262626" stroke-width="1" />
<line x1="207.50" y1="839.92" x2="215.50" y2="839.92" stroke="#262626" stroke-width="1" />
<line x1="211.50" y1="841.76" x2="215.50" y2="841.76" stroke="#262626" stroke-width="1" />
<line x1="211.50" y1="843.59" x2="215.50" y2="843.59" stroke="#262626" stroke-width="1" />
<line x1="211.50" y1="845.42" x2="215.50" y2="845.42" stroke="#262626" stroke-width="1" />
<line x1="211.50" y1="847.25" x2="215.50" y2="847.25" stroke="#262626" stroke-width="1" />
<line x1="211.50" y1="849.08" x2="215.50" y2="849.08" stroke="#262626" stroke-width="1" />
<line x1="211.50" y1="850.91" x2="215.50" y2="850.91" stroke="#262626" stroke-width="1" />
<line x1="211.50" y1="852.74" x2="215.50" y2="852.74" stroke="#262626" stroke-width="1" />
<line x1="211.50" y1="854.57" x2="215.50" y2="854.57" stroke="#262626" stroke-width="1" />
<line x1="211.50" y1="856.41" x2="215.50" y2="856.41" stroke="#262626" stroke-width="1" />
<line x1="207.50" y1="858.24" x2="215.50" y2="858.24" stroke="#262626" stroke-width="1" />
<line x1="211.50" y1="860.07" x2="215.50" y2="860.07" stroke="#262626" stroke-width="1" />
<line x1="211.50" y1="861.90" x2="215.50" y2="861.90" stroke="#262626" stroke-width="1" />
<line x1="211.50" y1="863.73" x2="215.50" y2="863.73" stroke="#262626" stroke-width="1" />
<line x1="211.50" y1="865.56" x2="215.50" y2="865.56" stroke="#262626" stroke-width="1" />
<line x1="211.50" y1="867.39" x2="215.50" y2="867.39" stroke="#262626" stroke-width="1" />
<line x1="211.50" y1="869.22" x2="215.50" y2="869.22" stroke="#262626" stroke-width="1" />
<line x1="211.50" y1="871.06" x2="215.50" y2="871.06" stroke="#262626" stroke-width="1" />
<line x1="211.50" y1="872.89" x2="215.50" y2="872.89" stroke="#262626" stroke-width="1" />
<line x1="211.50" y1="874.72" x2="215.50" y2="874.72" stroke="#262626" stroke-width="1" />
<line x1="207.50" y1="876.55" x2="215.50" y2="876.55" stroke="#262626" stroke-width="1" />
<line x1="211.50" y1="878.38" x2="215.50" y2="878.38" stroke="#262626" stroke-width="1" />
<line x1="211.50" y1="880.21" x2="215.50" y2="880.21" stroke="#262626" stroke-width="1" />
<line x1="211.50" y1="882.04" x2="215.50" y2="882.04" stroke="#262626" stroke-width="1" />
<line x1="211.50" y1="883.88" x2="215.50" y2="883.88" stroke="#262626" stroke-width="1" />
<line x1="211.50" y1="885.71" x2="215.50" y2="885.71" stroke="#262626" stroke-width="1" />
<line x1="211.50" y1="887.54" x2="215.50" y2="887.54" stroke="#262626" stroke-width="1" />
<line x1="211.50" y1="889.37" x2="215.50" y2="889.37" stroke="#262626" stroke-width="1" />
<line x1="211.50" y1="891.20" x2="215.50" y2="891.20" stroke="#262626" stroke-width="1" />
<line x1="211.50" y1="893.03" x2="215.50" y2="893.03" stroke="#262626" stroke-width="1" />
<line x1="207.50" y1="894.86" x2="215.50" y2="894.86" stroke="#262626" stroke-width="1" />
<line x1="211.50" y1="896.69" x2="215.50" y2="896.69" stroke="#262626" stroke-width="1" />
<line x1="211.50" y1="898.52" x2="215.50" y2="898.52" stroke="#262626" stroke-width="1" />
<line x1="211.50" y1="900.36" x2="215.50" y2="900.36" stroke="#262626" stroke-width="1" />
<line x1="211.50" y1="902.19" x2="215.50" y2="902.19" stroke="#262626" stroke-width="1" />
<line x1="211.50" y1="904.02" x2="215.50" y2="904.02" stroke="#262626" stroke-width="1" />
<line x1="211.50" y1="905.85" x2="215.50" y2="905.85" stroke="#262626" stroke-width="1" />
<line x1="211.50" y1="907.68" x2="215.50" y2="907.68" stroke="#262626" stroke-width="1" />
<line x1="211.50" y1="909.51" x2="215.50" y2="909.51" stroke="#262626" stroke-width="1" />
<line x1="211.50" y1="911.34" x2="215.50" y2="911.34" stroke="#262626" stroke-width="1" />
<line x1="207.50" y1="913.17" x2="215.50" y2="913.17" stroke="#262626" stroke-width="1" />
<line x1="211.50" y1="915.01" x2="215.50" y2="915.01" stroke="#262626" stroke-width="1" />
<line x1="211.50" y1="916.84" x2="215.50" y2="916.84" stroke="#262626" stroke-width="1" />
<line x1="211.50" y1="918.67" x2="215.50" y2="918.67" stroke="#262626" stroke-width="1" />
<line x1="211.50" y1="920.50" x2="215.50" y2="920.50" stroke="#262626" stroke-width="1" />
<line x1="211.50" y1="922.33" x2="215.50" y2="922.33" stroke="#262626" stroke-width="1" />
<line x1="211.50" y1="924.16" x2="215.50" y2="924.16" stroke="#262626" stroke-width="1" />
<line x1="211.50" y1="925.99" x2="215.50" y2="925.99" stroke="#262626" stroke-width="1" />
<line x1="211.50" y1="927.82" x2="215.50" y2="927.82" stroke="#262626" stroke-width="1" />
<line x1="211.50" y1="929.66" x2="215.50" y2="929.66" stroke="#262626" stroke-width="1" />
<line x1="207.50" y1="931.49" x2="215.50" y2="931.49" stroke="#262626" stroke-width="1" />
<line x1="211.50" y1="933.32" x2="215.50" y2="933.32" stroke="#262626" stroke-width="1" />
<line x1="211.50" y1="935.15" x2="215.50" y2="935.15" stroke="#262626" stroke-width="1" />
<line x1="211.50" y1="936.98" x2="215.50" y2="936.98" stroke="#262626" stroke-width="1" />
<line x1="211.50" y1="938.81" x2="215.50" y2="938.81" stroke="#262626" stroke-width="1" />
<line x1="211.50" y1="940.64" x2="215.50" y2="940.64" stroke="#262626" stroke-width="1" />
<line x1="211.50" y1="942.47" x2="215.50" y2="942.47" stroke="#262626" stroke-width="1" />
<line x1="211.50" y1="944.31" x2="215.50" y2="944.31" stroke="#262626" stroke-width="1" />
<line x1="211.50" y1="946.14" x2="215.50" y2="946.14" stroke="#262626" stroke-width="1" />
<line x1="211.50" y1="947.97" x2="215.50" y2="947.97" stroke="#262626" stroke-width="1" />
<line x1="207.50" y1="949.80" x2="215.50" y2="949.80" stroke="#262626" stroke-width="1" />
<rect x="177.29" y="804.00" width="5.00" height="1.00" fill="#262626" />
<text x="183.81" y="807.90" font-size="12" fill="#262626" letter-spacing="1.000">40.</text>
<rect x="177.47" y="822.00" width="5.00" height="1.00" fill="#262626" />
<text x="183.81" y="826.21" font-size="12" fill="#262626" letter-spacing="1.000">30.</text>
<rect x="177.62" y="841.00" width="5.00" height="1.00" fill="#262626" />
<text x="183.81" y="844.52" font-size="12" fill="#262626" letter-spacing="1.000">20.</text>
<rect x="177.93" y="859.00" width="5.00" height="1.00" fill="#262626" />
<text x="183.81" y="862.84" font-size="12" fill="#262626" letter-spacing="1.000">10.</text>
<text x="191.49" y="881.15" font-size="12" fill="#262626" letter-spacing="1.000">0.</text>
<text x="183.81" y="899.46" font-size="12" fill="#262626" letter-spacing="1.000">10.</text>
<text x="183.81" y="917.77" font-size="12" fill="#262626" letter-spacing="1.000">20.</text>
<text x="183.81" y="936.09" font-size="12" fill="#262626" letter-spacing="1.000">30.</text>
<text x="183.81" y="954.40" font-size="12" fill="#262626" letter-spacing="1.000">40.</text>
<line x1="216.00" y1="950.30" x2="216.00" y2="958.30" stroke="#262626" stroke-width="1" />
<line x1="234.75" y1="950.30" x2="234.75" y2="954.30" stroke="#262626" stroke-width="1" />
<line x1="253.50" y1="950.30" x2="253.50" y2="958.30" stroke="#262626" stroke-width="1" />
<line x1="272.25" y1="950.30" x2="272.25" y2="954.30" stroke="#262626" stroke-width="1" />
<line x1="291.00" y1="950.30" x2="291.00" y2="958.30" stroke="#262626" stroke-width="1" />
<line x1="309.75" y1="950.30" x2="309.75" y2="954.30" stroke="#262626" stroke-width="1" />
<line x1="328.50" y1="950.30" x2="328.50" y2="958.30" stroke="#262626" stroke-width="1" />
<line x1="347.25" y1="950.30" x2="347.25" y2="954.30" stroke="#262626" stroke-width="1" />
<line x1="366.00" y1="950.30" x2="366.00" y2="958.30" stroke="#262626" stroke-width="1" />
<text x="206.47" y="974.20" font-size="12" fill="#262626" letter-spacing="1.000">40.</text>
<text x="243.81" y="974.20" font-size="12" fill="#262626" letter-spacing="1.000">20.</text>
<text x="285.21" y="974.20" font-size="12" fill="#262626" letter-spacing="1.000">0.</text>
<rect x="316.01" y="970.00" width="5.00" height="1.00" fill="#262626" />
<text x="322.21" y="974.20" font-size="12" fill="#262626" letter-spacing="1.000">20.</text>
<rect x="353.34" y="970.00" width="5.00" height="1.00" fill="#262626" />
<text x="359.87" y="974.20" font-size="12" fill="#262626" letter-spacing="1.000">40.</text>
<g ><text x="270.72" y="991.70" font-size="12" fill="#262626" letter-spacing="-1.368">KSM</text><rect x="295.20" y="988.00" width="5.00" height="1.00" fill="#262626" /><text x="301.35" y="991.70" font-size="12" fill="#262626">X</text></g>
<g transform="translate(166.70,876.7) rotate(-90)"><text x="-19.68" y="0.00" font-size="12" fill="#262626" letter-spacing="-1.368">KSM</text><rect x="4.80" y="-4.00" width="5.00" height="1.00" fill="#262626" /><text x="10.96" y="0.00" font-size="12" fill="#262626">Y</text></g>
<rect x="510.0" y="803.3" width="150.0" height="146.5" fill="none" stroke="#111" stroke-width="1"/>
<line x1="501.50" y1="803.30" x2="509.50" y2="803.30" stroke="#262626" stroke-width="1" />
<line x1="505.50" y1="805.13" x2="509.50" y2="805.13" stroke="#262626" stroke-width="1" />
<line x1="505.50" y1="806.96" x2="509.50" y2="806.96" stroke="#262626" stroke-width="1" />
<line x1="505.50" y1="808.79" x2="509.50" y2="808.79" stroke="#262626" stroke-width="1" />
<line x1="505.50" y1="810.62" x2="509.50" y2="810.62" stroke="#262626" stroke-width="1" />
<line x1="505.50" y1="812.46" x2="509.50" y2="812.46" stroke="#262626" stroke-width="1" />
<line x1="505.50" y1="814.29" x2="509.50" y2="814.29" stroke="#262626" stroke-width="1" />
<line x1="505.50" y1="816.12" x2="509.50" y2="816.12" stroke="#262626" stroke-width="1" />
<line x1="505.50" y1="817.95" x2="509.50" y2="817.95" stroke="#262626" stroke-width="1" />
<line x1="505.50" y1="819.78" x2="509.50" y2="819.78" stroke="#262626" stroke-width="1" />
<line x1="501.50" y1="821.61" x2="509.50" y2="821.61" stroke="#262626" stroke-width="1" />
<line x1="505.50" y1="823.44" x2="509.50" y2="823.44" stroke="#262626" stroke-width="1" />
<line x1="505.50" y1="825.27" x2="509.50" y2="825.27" stroke="#262626" stroke-width="1" />
<line x1="505.50" y1="827.11" x2="509.50" y2="827.11" stroke="#262626" stroke-width="1" />
<line x1="505.50" y1="828.94" x2="509.50" y2="828.94" stroke="#262626" stroke-width="1" />
<line x1="505.50" y1="830.77" x2="509.50" y2="830.77" stroke="#262626" stroke-width="1" />
<line x1="505.50" y1="832.60" x2="509.50" y2="832.60" stroke="#262626" stroke-width="1" />
<line x1="505.50" y1="834.43" x2="509.50" y2="834.43" stroke="#262626" stroke-width="1" />
<line x1="505.50" y1="836.26" x2="509.50" y2="836.26" stroke="#262626" stroke-width="1" />
<line x1="505.50" y1="838.09" x2="509.50" y2="838.09" stroke="#262626" stroke-width="1" />
<line x1="501.50" y1="839.92" x2="509.50" y2="839.92" stroke="#262626" stroke-width="1" />
<line x1="505.50" y1="841.76" x2="509.50" y2="841.76" stroke="#262626" stroke-width="1" />
<line x1="505.50" y1="843.59" x2="509.50" y2="843.59" stroke="#262626" stroke-width="1" />
<line x1="505.50" y1="845.42" x2="509.50" y2="845.42" stroke="#262626" stroke-width="1" />
<line x1="505.50" y1="847.25" x2="509.50" y2="847.25" stroke="#262626" stroke-width="1" />
<line x1="505.50" y1="849.08" x2="509.50" y2="849.08" stroke="#262626" stroke-width="1" />
<line x1="505.50" y1="850.91" x2="509.50" y2="850.91" stroke="#262626" stroke-width="1" />
<line x1="505.50" y1="852.74" x2="509.50" y2="852.74" stroke="#262626" stroke-width="1" />
<line x1="505.50" y1="854.57" x2="509.50" y2="854.57" stroke="#262626" stroke-width="1" />
<line x1="505.50" y1="856.41" x2="509.50" y2="856.41" stroke="#262626" stroke-width="1" />
<line x1="501.50" y1="858.24" x2="509.50" y2="858.24" stroke="#262626" stroke-width="1" />
<line x1="505.50" y1="860.07" x2="509.50" y2="860.07" stroke="#262626" stroke-width="1" />
<line x1="505.50" y1="861.90" x2="509.50" y2="861.90" stroke="#262626" stroke-width="1" />
<line x1="505.50" y1="863.73" x2="509.50" y2="863.73" stroke="#262626" stroke-width="1" />
<line x1="505.50" y1="865.56" x2="509.50" y2="865.56" stroke="#262626" stroke-width="1" />
<line x1="505.50" y1="867.39" x2="509.50" y2="867.39" stroke="#262626" stroke-width="1" />
<line x1="505.50" y1="869.22" x2="509.50" y2="869.22" stroke="#262626" stroke-width="1" />
<line x1="505.50" y1="871.06" x2="509.50" y2="871.06" stroke="#262626" stroke-width="1" />
<line x1="505.50" y1="872.89" x2="509.50" y2="872.89" stroke="#262626" stroke-width="1" />
<line x1="505.50" y1="874.72" x2="509.50" y2="874.72" stroke="#262626" stroke-width="1" />
<line x1="501.50" y1="876.55" x2="509.50" y2="876.55" stroke="#262626" stroke-width="1" />
<line x1="505.50" y1="878.38" x2="509.50" y2="878.38" stroke="#262626" stroke-width="1" />
<line x1="505.50" y1="880.21" x2="509.50" y2="880.21" stroke="#262626" stroke-width="1" />
<line x1="505.50" y1="882.04" x2="509.50" y2="882.04" stroke="#262626" stroke-width="1" />
<line x1="505.50" y1="883.88" x2="509.50" y2="883.88" stroke="#262626" stroke-width="1" />
<line x1="505.50" y1="885.71" x2="509.50" y2="885.71" stroke="#262626" stroke-width="1" />
<line x1="505.50" y1="887.54" x2="509.50" y2="887.54" stroke="#262626" stroke-width="1" />
<line x1="505.50" y1="889.37" x2="509.50" y2="889.37" stroke="#262626" stroke-width="1" />
<line x1="505.50" y1="891.20" x2="509.50" y2="891.20" stroke="#262626" stroke-width="1" />
<line x1="505.50" y1="893.03" x2="509.50" y2="893.03" stroke="#262626" stroke-width="1" />
<line x1="501.50" y1="894.86" x2="509.50" y2="894.86" stroke="#262626" stroke-width="1" />
<line x1="505.50" y1="896.69" x2="509.50" y2="896.69" stroke="#262626" stroke-width="1" />
<line x1="505.50" y1="898.52" x2="509.50" y2="898.52" stroke="#262626" stroke-width="1" />
<line x1="505.50" y1="900.36" x2="509.50" y2="900.36" stroke="#262626" stroke-width="1" />
<line x1="505.50" y1="902.19" x2="509.50" y2="902.19" stroke="#262626" stroke-width="1" />
<line x1="505.50" y1="904.02" x2="509.50" y2="904.02" stroke="#262626" stroke-width="1" />
<line x1="505.50" y1="905.85" x2="509.50" y2="905.85" stroke="#262626" stroke-width="1" />
<line x1="505.50" y1="907.68" x2="509.50" y2="907.68" stroke="#262626" stroke-width="1" />
<line x1="505.50" y1="909.51" x2="509.50" y2="909.51" stroke="#262626" stroke-width="1" />
<line x1="505.50" y1="911.34" x2="509.50" y2="911.34" stroke="#262626" stroke-width="1" />
<line x1="501.50" y1="913.17" x2="509.50" y2="913.17" stroke="#262626" stroke-width="1" />
<line x1="505.50" y1="915.01" x2="509.50" y2="915.01" stroke="#262626" stroke-width="1" />
<line x1="505.50" y1="916.84" x2="509.50" y2="916.84" stroke="#262626" stroke-width="1" />
<line x1="505.50" y1="918.67" x2="509.50" y2="918.67" stroke="#262626" stroke-width="1" />
<line x1="505.50" y1="920.50" x2="509.50" y2="920.50" stroke="#262626" stroke-width="1" />
<line x1="505.50" y1="922.33" x2="509.50" y2="922.33" stroke="#262626" stroke-width="1" />
<line x1="505.50" y1="924.16" x2="509.50" y2="924.16" stroke="#262626" stroke-width="1" />
<line x1="505.50" y1="925.99" x2="509.50" y2="925.99" stroke="#262626" stroke-width="1" />
<line x1="505.50" y1="927.82" x2="509.50" y2="927.82" stroke="#262626" stroke-width="1" />
<line x1="505.50" y1="929.66" x2="509.50" y2="929.66" stroke="#262626" stroke-width="1" />
<line x1="501.50" y1="931.49" x2="509.50" y2="931.49" stroke="#262626" stroke-width="1" />
<line x1="505.50" y1="933.32" x2="509.50" y2="933.32" stroke="#262626" stroke-width="1" />
<line x1="505.50" y1="935.15" x2="509.50" y2="935.15" stroke="#262626" stroke-width="1" />
<line x1="505.50" y1="936.98" x2="509.50" y2="936.98" stroke="#262626" stroke-width="1" />
<line x1="505.50" y1="938.81" x2="509.50" y2="938.81" stroke="#262626" stroke-width="1" />
<line x1="505.50" y1="940.64" x2="509.50" y2="940.64" stroke="#262626" stroke-width="1" />
<line x1="505.50" y1="942.47" x2="509.50" y2="942.47" stroke="#262626" stroke-width="1" />
<line x1="505.50" y1="944.31" x2="509.50" y2="944.31" stroke="#262626" stroke-width="1" />
<line x1="505.50" y1="946.14" x2="509.50" y2="946.14" stroke="#262626" stroke-width="1" />
<line x1="505.50" y1="947.97" x2="509.50" y2="947.97" stroke="#262626" stroke-width="1" />
<line x1="501.50" y1="949.80" x2="509.50" y2="949.80" stroke="#262626" stroke-width="1" />
<text x="477.81" y="807.90" font-size="12" fill="#262626" letter-spacing="1.000">40.</text>
<text x="477.81" y="826.21" font-size="12" fill="#262626" letter-spacing="1.000">30.</text>
<text x="477.81" y="844.52" font-size="12" fill="#262626" letter-spacing="1.000">20.</text>
<text x="477.81" y="862.84" font-size="12" fill="#262626" letter-spacing="1.000">10.</text>
<text x="485.49" y="881.15" font-size="12" fill="#262626" letter-spacing="1.000">0.</text>
<rect x="471.93" y="895.00" width="5.00" height="1.00" fill="#262626" />
<text x="477.81" y="899.46" font-size="12" fill="#262626" letter-spacing="1.000">10.</text>
<rect x="471.62" y="914.00" width="5.00" height="1.00" fill="#262626" />
<text x="477.81" y="917.77" font-size="12" fill="#262626" letter-spacing="1.000">20.</text>
<rect x="471.47" y="932.00" width="5.00" height="1.00" fill="#262626" />
<text x="477.81" y="936.09" font-size="12" fill="#262626" letter-spacing="1.000">30.</text>
<rect x="471.29" y="950.00" width="5.00" height="1.00" fill="#262626" />
<text x="477.81" y="954.40" font-size="12" fill="#262626" letter-spacing="1.000">40.</text>
<line x1="510.00" y1="950.30" x2="510.00" y2="958.30" stroke="#262626" stroke-width="1" />
<line x1="528.75" y1="950.30" x2="528.75" y2="954.30" stroke="#262626" stroke-width="1" />
<line x1="547.50" y1="950.30" x2="547.50" y2="958.30" stroke="#262626" stroke-width="1" />
<line x1="566.25" y1="950.30" x2="566.25" y2="954.30" stroke="#262626" stroke-width="1" />
<line x1="585.00" y1="950.30" x2="585.00" y2="958.30" stroke="#262626" stroke-width="1" />
<line x1="603.75" y1="950.30" x2="603.75" y2="954.30" stroke="#262626" stroke-width="1" />
<line x1="622.50" y1="950.30" x2="622.50" y2="958.30" stroke="#262626" stroke-width="1" />
<line x1="641.25" y1="950.30" x2="641.25" y2="954.30" stroke="#262626" stroke-width="1" />
<line x1="660.00" y1="950.30" x2="660.00" y2="958.30" stroke="#262626" stroke-width="1" />
<text x="500.47" y="974.20" font-size="12" fill="#262626" letter-spacing="1.000">40.</text>
<text x="537.81" y="974.20" font-size="12" fill="#262626" letter-spacing="1.000">20.</text>
<text x="579.21" y="974.20" font-size="12" fill="#262626" letter-spacing="1.000">0.</text>
<rect x="610.01" y="970.00" width="5.00" height="1.00" fill="#262626" />
<text x="616.21" y="974.20" font-size="12" fill="#262626" letter-spacing="1.000">20.</text>
<rect x="647.34" y="970.00" width="5.00" height="1.00" fill="#262626" />
<text x="653.87" y="974.20" font-size="12" fill="#262626" letter-spacing="1.000">40.</text>
<g ><text x="564.72" y="991.70" font-size="12" fill="#262626" letter-spacing="-1.368">KSM</text><rect x="589.20" y="988.00" width="5.00" height="1.00" fill="#262626" /><text x="595.35" y="991.70" font-size="12" fill="#262626">X</text></g>
<g transform="translate(460.70,876.7) rotate(-90)"><text x="-19.68" y="0.00" font-size="12" fill="#262626" letter-spacing="-1.368">KSM</text><rect x="4.80" y="-4.00" width="5.00" height="1.00" fill="#262626" /><text x="11.74" y="0.00" font-size="12" fill="#262626">Z</text></g>
<rect x="804.0" y="803.3" width="150.0" height="146.5" fill="none" stroke="#111" stroke-width="1"/>
<line x1="795.50" y1="803.30" x2="803.50" y2="803.30" stroke="#262626" stroke-width="1" />
<line x1="799.50" y1="805.13" x2="803.50" y2="805.13" stroke="#262626" stroke-width="1" />
<line x1="799.50" y1="806.96" x2="803.50" y2="806.96" stroke="#262626" stroke-width="1" />
<line x1="799.50" y1="808.79" x2="803.50" y2="808.79" stroke="#262626" stroke-width="1" />
<line x1="799.50" y1="810.62" x2="803.50" y2="810.62" stroke="#262626" stroke-width="1" />
<line x1="799.50" y1="812.46" x2="803.50" y2="812.46" stroke="#262626" stroke-width="1" />
<line x1="799.50" y1="814.29" x2="803.50" y2="814.29" stroke="#262626" stroke-width="1" />
<line x1="799.50" y1="816.12" x2="803.50" y2="816.12" stroke="#262626" stroke-width="1" />
<line x1="799.50" y1="817.95" x2="803.50" y2="817.95" stroke="#262626" stroke-width="1" />
<line x1="799.50" y1="819.78" x2="803.50" y2="819.78" stroke="#262626" stroke-width="1" />
<line x1="795.50" y1="821.61" x2="803.50" y2="821.61" stroke="#262626" stroke-width="1" />
<line x1="799.50" y1="823.44" x2="803.50" y2="823.44" stroke="#262626" stroke-width="1" />
<line x1="799.50" y1="825.27" x2="803.50" y2="825.27" stroke="#262626" stroke-width="1" />
<line x1="799.50" y1="827.11" x2="803.50" y2="827.11" stroke="#262626" stroke-width="1" />
<line x1="799.50" y1="828.94" x2="803.50" y2="828.94" stroke="#262626" stroke-width="1" />
<line x1="799.50" y1="830.77" x2="803.50" y2="830.77" stroke="#262626" stroke-width="1" />
<line x1="799.50" y1="832.60" x2="803.50" y2="832.60" stroke="#262626" stroke-width="1" />
<line x1="799.50" y1="834.43" x2="803.50" y2="834.43" stroke="#262626" stroke-width="1" />
<line x1="799.50" y1="836.26" x2="803.50" y2="836.26" stroke="#262626" stroke-width="1" />
<line x1="799.50" y1="838.09" x2="803.50" y2="838.09" stroke="#262626" stroke-width="1" />
<line x1="795.50" y1="839.92" x2="803.50" y2="839.92" stroke="#262626" stroke-width="1" />
<line x1="799.50" y1="841.76" x2="803.50" y2="841.76" stroke="#262626" stroke-width="1" />
<line x1="799.50" y1="843.59" x2="803.50" y2="843.59" stroke="#262626" stroke-width="1" />
<line x1="799.50" y1="845.42" x2="803.50" y2="845.42" stroke="#262626" stroke-width="1" />
<line x1="799.50" y1="847.25" x2="803.50" y2="847.25" stroke="#262626" stroke-width="1" />
<line x1="799.50" y1="849.08" x2="803.50" y2="849.08" stroke="#262626" stroke-width="1" />
<line x1="799.50" y1="850.91" x2="803.50" y2="850.91" stroke="#262626" stroke-width="1" />
<line x1="799.50" y1="852.74" x2="803.50" y2="852.74" stroke="#262626" stroke-width="1" />
<line x1="799.50" y1="854.57" x2="803.50" y2="854.57" stroke="#262626" stroke-width="1" />
<line x1="799.50" y1="856.41" x2="803.50" y2="856.41" stroke="#262626" stroke-width="1" />
<line x1="795.50" y1="858.24" x2="803.50" y2="858.24" stroke="#262626" stroke-width="1" />
<line x1="799.50" y1="860.07" x2="803.50" y2="860.07" stroke="#262626" stroke-width="1" />
<line x1="799.50" y1="861.90" x2="803.50" y2="861.90" stroke="#262626" stroke-width="1" />
<line x1="799.50" y1="863.73" x2="803.50" y2="863.73" stroke="#262626" stroke-width="1" />
<line x1="799.50" y1="865.56" x2="803.50" y2="865.56" stroke="#262626" stroke-width="1" />
<line x1="799.50" y1="867.39" x2="803.50" y2="867.39" stroke="#262626" stroke-width="1" />
<line x1="799.50" y1="869.22" x2="803.50" y2="869.22" stroke="#262626" stroke-width="1" />
<line x1="799.50" y1="871.06" x2="803.50" y2="871.06" stroke="#262626" stroke-width="1" />
<line x1="799.50" y1="872.89" x2="803.50" y2="872.89" stroke="#262626" stroke-width="1" />
<line x1="799.50" y1="874.72" x2="803.50" y2="874.72" stroke="#262626" stroke-width="1" />
<line x1="795.50" y1="876.55" x2="803.50" y2="876.55" stroke="#262626" stroke-width="1" />
<line x1="799.50" y1="878.38" x2="803.50" y2="878.38" stroke="#262626" stroke-width="1" />
<line x1="799.50" y1="880.21" x2="803.50" y2="880.21" stroke="#262626" stroke-width="1" />
<line x1="799.50" y1="882.04" x2="803.50" y2="882.04" stroke="#262626" stroke-width="1" />
<line x1="799.50" y1="883.88" x2="803.50" y2="883.88" stroke="#262626" stroke-width="1" />
<line x1="799.50" y1="885.71" x2="803.50" y2="885.71" stroke="#262626" stroke-width="1" />
<line x1="799.50" y1="887.54" x2="803.50" y2="887.54" stroke="#262626" stroke-width="1" />
<line x1="799.50" y1="889.37" x2="803.50" y2="889.37" stroke="#262626" stroke-width="1" />
<line x1="799.50" y1="891.20" x2="803.50" y2="891.20" stroke="#262626" stroke-width="1" />
<line x1="799.50" y1="893.03" x2="803.50" y2="893.03" stroke="#262626" stroke-width="1" />
<line x1="795.50" y1="894.86" x2="803.50" y2="894.86" stroke="#262626" stroke-width="1" />
<line x1="799.50" y1="896.69" x2="803.50" y2="896.69" stroke="#262626" stroke-width="1" />
<line x1="799.50" y1="898.52" x2="803.50" y2="898.52" stroke="#262626" stroke-width="1" />
<line x1="799.50" y1="900.36" x2="803.50" y2="900.36" stroke="#262626" stroke-width="1" />
<line x1="799.50" y1="902.19" x2="803.50" y2="902.19" stroke="#262626" stroke-width="1" />
<line x1="799.50" y1="904.02" x2="803.50" y2="904.02" stroke="#262626" stroke-width="1" />
<line x1="799.50" y1="905.85" x2="803.50" y2="905.85" stroke="#262626" stroke-width="1" />
<line x1="799.50" y1="907.68" x2="803.50" y2="907.68" stroke="#262626" stroke-width="1" />
<line x1="799.50" y1="909.51" x2="803.50" y2="909.51" stroke="#262626" stroke-width="1" />
<line x1="799.50" y1="911.34" x2="803.50" y2="911.34" stroke="#262626" stroke-width="1" />
<line x1="795.50" y1="913.17" x2="803.50" y2="913.17" stroke="#262626" stroke-width="1" />
<line x1="799.50" y1="915.01" x2="803.50" y2="915.01" stroke="#262626" stroke-width="1" />
<line x1="799.50" y1="916.84" x2="803.50" y2="916.84" stroke="#262626" stroke-width="1" />
<line x1="799.50" y1="918.67" x2="803.50" y2="918.67" stroke="#262626" stroke-width="1" />
<line x1="799.50" y1="920.50" x2="803.50" y2="920.50" stroke="#262626" stroke-width="1" />
<line x1="799.50" y1="922.33" x2="803.50" y2="922.33" stroke="#262626" stroke-width="1" />
<line x1="799.50" y1="924.16" x2="803.50" y2="924.16" stroke="#262626" stroke-width="1" />
<line x1="799.50" y1="925.99" x2="803.50" y2="925.99" stroke="#262626" stroke-width="1" />
<line x1="799.50" y1="927.82" x2="803.50" y2="927.82" stroke="#262626" stroke-width="1" />
<line x1="799.50" y1="929.66" x2="803.50" y2="929.66" stroke="#262626" stroke-width="1" />
<line x1="795.50" y1="931.49" x2="803.50" y2="931.49" stroke="#262626" stroke-width="1" />
<line x1="799.50" y1="933.32" x2="803.50" y2="933.32" stroke="#262626" stroke-width="1" />
<line x1="799.50" y1="935.15" x2="803.50" y2="935.15" stroke="#262626" stroke-width="1" />
<line x1="799.50" y1="936.98" x2="803.50" y2="936.98" stroke="#262626" stroke-width="1" />
<line x1="799.50" y1="938.81" x2="803.50" y2="938.81" stroke="#262626" stroke-width="1" />
<line x1="799.50" y1="940.64" x2="803.50" y2="940.64" stroke="#262626" stroke-width="1" />
<line x1="799.50" y1="942.47" x2="803.50" y2="942.47" stroke="#262626" stroke-width="1" />
<line x1="799.50" y1="944.31" x2="803.50" y2="944.31" stroke="#262626" stroke-width="1" />
<line x1="799.50" y1="946.14" x2="803.50" y2="946.14" stroke="#262626" stroke-width="1" />
<line x1="799.50" y1="947.97" x2="803.50" y2="947.97" stroke="#262626" stroke-width="1" />
<line x1="795.50" y1="949.80" x2="803.50" y2="949.80" stroke="#262626" stroke-width="1" />
<text x="771.81" y="807.90" font-size="12" fill="#262626" letter-spacing="1.000">40.</text>
<text x="771.81" y="826.21" font-size="12" fill="#262626" letter-spacing="1.000">30.</text>
<text x="771.81" y="844.52" font-size="12" fill="#262626" letter-spacing="1.000">20.</text>
<text x="771.81" y="862.84" font-size="12" fill="#262626" letter-spacing="1.000">10.</text>
<text x="779.49" y="881.15" font-size="12" fill="#262626" letter-spacing="1.000">0.</text>
<rect x="765.93" y="895.00" width="5.00" height="1.00" fill="#262626" />
<text x="771.81" y="899.46" font-size="12" fill="#262626" letter-spacing="1.000">10.</text>
<rect x="765.62" y="914.00" width="5.00" height="1.00" fill="#262626" />
<text x="771.81" y="917.77" font-size="12" fill="#262626" letter-spacing="1.000">20.</text>
<rect x="765.47" y="932.00" width="5.00" height="1.00" fill="#262626" />
<text x="771.81" y="936.09" font-size="12" fill="#262626" letter-spacing="1.000">30.</text>
<rect x="765.29" y="950.00" width="5.00" height="1.00" fill="#262626" />
<text x="771.81" y="954.40" font-size="12" fill="#262626" letter-spacing="1.000">40.</text>
<line x1="804.00" y1="950.30" x2="804.00" y2="958.30" stroke="#262626" stroke-width="1" />
<line x1="822.75" y1="950.30" x2="822.75" y2="954.30" stroke="#262626" stroke-width="1" />
<line x1="841.50" y1="950.30" x2="841.50" y2="958.30" stroke="#262626" stroke-width="1" />
<line x1="860.25" y1="950.30" x2="860.25" y2="954.30" stroke="#262626" stroke-width="1" />
<line x1="879.00" y1="950.30" x2="879.00" y2="958.30" stroke="#262626" stroke-width="1" />
<line x1="897.75" y1="950.30" x2="897.75" y2="954.30" stroke="#262626" stroke-width="1" />
<line x1="916.50" y1="950.30" x2="916.50" y2="958.30" stroke="#262626" stroke-width="1" />
<line x1="935.25" y1="950.30" x2="935.25" y2="954.30" stroke="#262626" stroke-width="1" />
<line x1="954.00" y1="950.30" x2="954.00" y2="958.30" stroke="#262626" stroke-width="1" />
<rect x="791.34" y="970.00" width="5.00" height="1.00" fill="#262626" />
<text x="797.87" y="974.20" font-size="12" fill="#262626" letter-spacing="1.000">40.</text>
<rect x="829.01" y="970.00" width="5.00" height="1.00" fill="#262626" />
<text x="835.21" y="974.20" font-size="12" fill="#262626" letter-spacing="1.000">20.</text>
<text x="873.21" y="974.20" font-size="12" fill="#262626" letter-spacing="1.000">0.</text>
<text x="906.81" y="974.20" font-size="12" fill="#262626" letter-spacing="1.000">20.</text>
<text x="944.47" y="974.20" font-size="12" fill="#262626" letter-spacing="1.000">40.</text>
<g ><text x="858.72" y="991.70" font-size="12" fill="#262626" letter-spacing="-1.368">KSM</text><rect x="883.20" y="988.00" width="5.00" height="1.00" fill="#262626" /><text x="889.36" y="991.70" font-size="12" fill="#262626">Y</text></g>
<g transform="translate(754.70,876.7) rotate(-90)"><text x="-19.68" y="0.00" font-size="12" fill="#262626" letter-spacing="-1.368">KSM</text><rect x="4.80" y="-4.00" width="5.00" height="1.00" fill="#262626" /><text x="11.74" y="0.00" font-size="12" fill="#262626">Z</text></g>
<path d="M248.7,803.5 C236,825 226,850 225.6,876.5 C226,903 236,928 248.7,950" fill="none" stroke="#0000ff" stroke-width="1.2" shape-rendering="geometricPrecision" stroke-dasharray="2,1.5"/>
<path d="M283.4,803.5 C262,822 243,845 242.4,876.5 C243,908 262,932 282.4,950" fill="none" stroke="#8b4513" stroke-width="1.1" shape-rendering="geometricPrecision" stroke-dasharray="2,1.5"/>
<ellipse cx="291.8" cy="877.8" rx="35.7" ry="37.6" fill="none" stroke="#000" stroke-width="1.3" shape-rendering="geometricPrecision"/>
<ellipse cx="291.6" cy="876.8" rx="2.2" ry="1.5" fill="none" stroke="#000" stroke-width="0.9" shape-rendering="geometricPrecision"/>
<circle cx="286.6" cy="914.6" r="2.3" fill="#ff0000" shape-rendering="geometricPrecision"/>
<path d="M303.4,828.4 C312,826.5 322,825.5 332,826.5 C345,827.5 356,830 366,833.5" fill="none" stroke="#000" stroke-width="1.3" shape-rendering="geometricPrecision" />
<ellipse cx="340.5" cy="827.8" rx="4.5" ry="2.8" fill="#0000ff" shape-rendering="geometricPrecision"/>
<path d="M341.5,824 L349.5,832 M349.5,824 L341.5,832" fill="none" stroke="#ff0000" stroke-width="1.2" shape-rendering="geometricPrecision" />
<path d="M543,803.5 C530,825 520,850 519.4,876.5 C520,903 530,928 543,950" fill="none" stroke="#0000ff" stroke-width="1.2" shape-rendering="geometricPrecision" stroke-dasharray="2,1.5"/>
<path d="M577,803.5 C556,822 537,845 536.6,876.5 C537,908 556,932 577,950" fill="none" stroke="#8b4513" stroke-width="1.1" shape-rendering="geometricPrecision" stroke-dasharray="2,1.5"/>
<path d="M550.3,889.4 L621.7,863.5" fill="none" stroke="#000" stroke-width="1.9" shape-rendering="geometricPrecision" />
<path d="M584.5,877.5 L588.5,875.5" fill="none" stroke="#888" stroke-width="1.0" shape-rendering="geometricPrecision" />
<circle cx="580.3" cy="878.4" r="2.3" fill="#ff0000" shape-rendering="geometricPrecision"/>
<path d="M597.6,816.3 C610,811 622,808.5 633,808 C645,807.8 653,808.5 660.5,809.3" fill="none" stroke="#000" stroke-width="1.3" shape-rendering="geometricPrecision" />
<ellipse cx="634.5" cy="808" rx="3.5" ry="2.5" fill="#0000ff" shape-rendering="geometricPrecision"/>
<path d="M635.5,803.5 L643.5,811.5 M643.5,803.5 L635.5,811.5" fill="none" stroke="#ff0000" stroke-width="1.2" shape-rendering="geometricPrecision" />
<ellipse cx="880.5" cy="876.6" rx="38.5" ry="12.6" fill="none" stroke="#000" stroke-width="1.3" shape-rendering="geometricPrecision"/>
<ellipse cx="879.2" cy="876.8" rx="2.2" ry="1.5" fill="none" stroke="#000" stroke-width="0.9" shape-rendering="geometricPrecision"/>
<circle cx="918.4" cy="878.2" r="2.3" fill="#ff0000" shape-rendering="geometricPrecision"/>
<path d="M829.2,807.5 L833,809 L834.5,810.5 L837.5,811" fill="none" stroke="#000" stroke-width="1.2" shape-rendering="geometricPrecision" />
<path d="M829,807.5 L828.5,812 L829.5,813 L829.2,816.5" fill="none" stroke="#000" stroke-width="1.2" shape-rendering="geometricPrecision" />
<circle cx="829.2" cy="807.5" r="2.6" fill="#0000ff" shape-rendering="geometricPrecision"/>
<path d="M825,803.5 L833.5,812 M833.5,803.5 L825,812" fill="none" stroke="#ff0000" stroke-width="1.2" shape-rendering="geometricPrecision" />
</svg></body></html>
